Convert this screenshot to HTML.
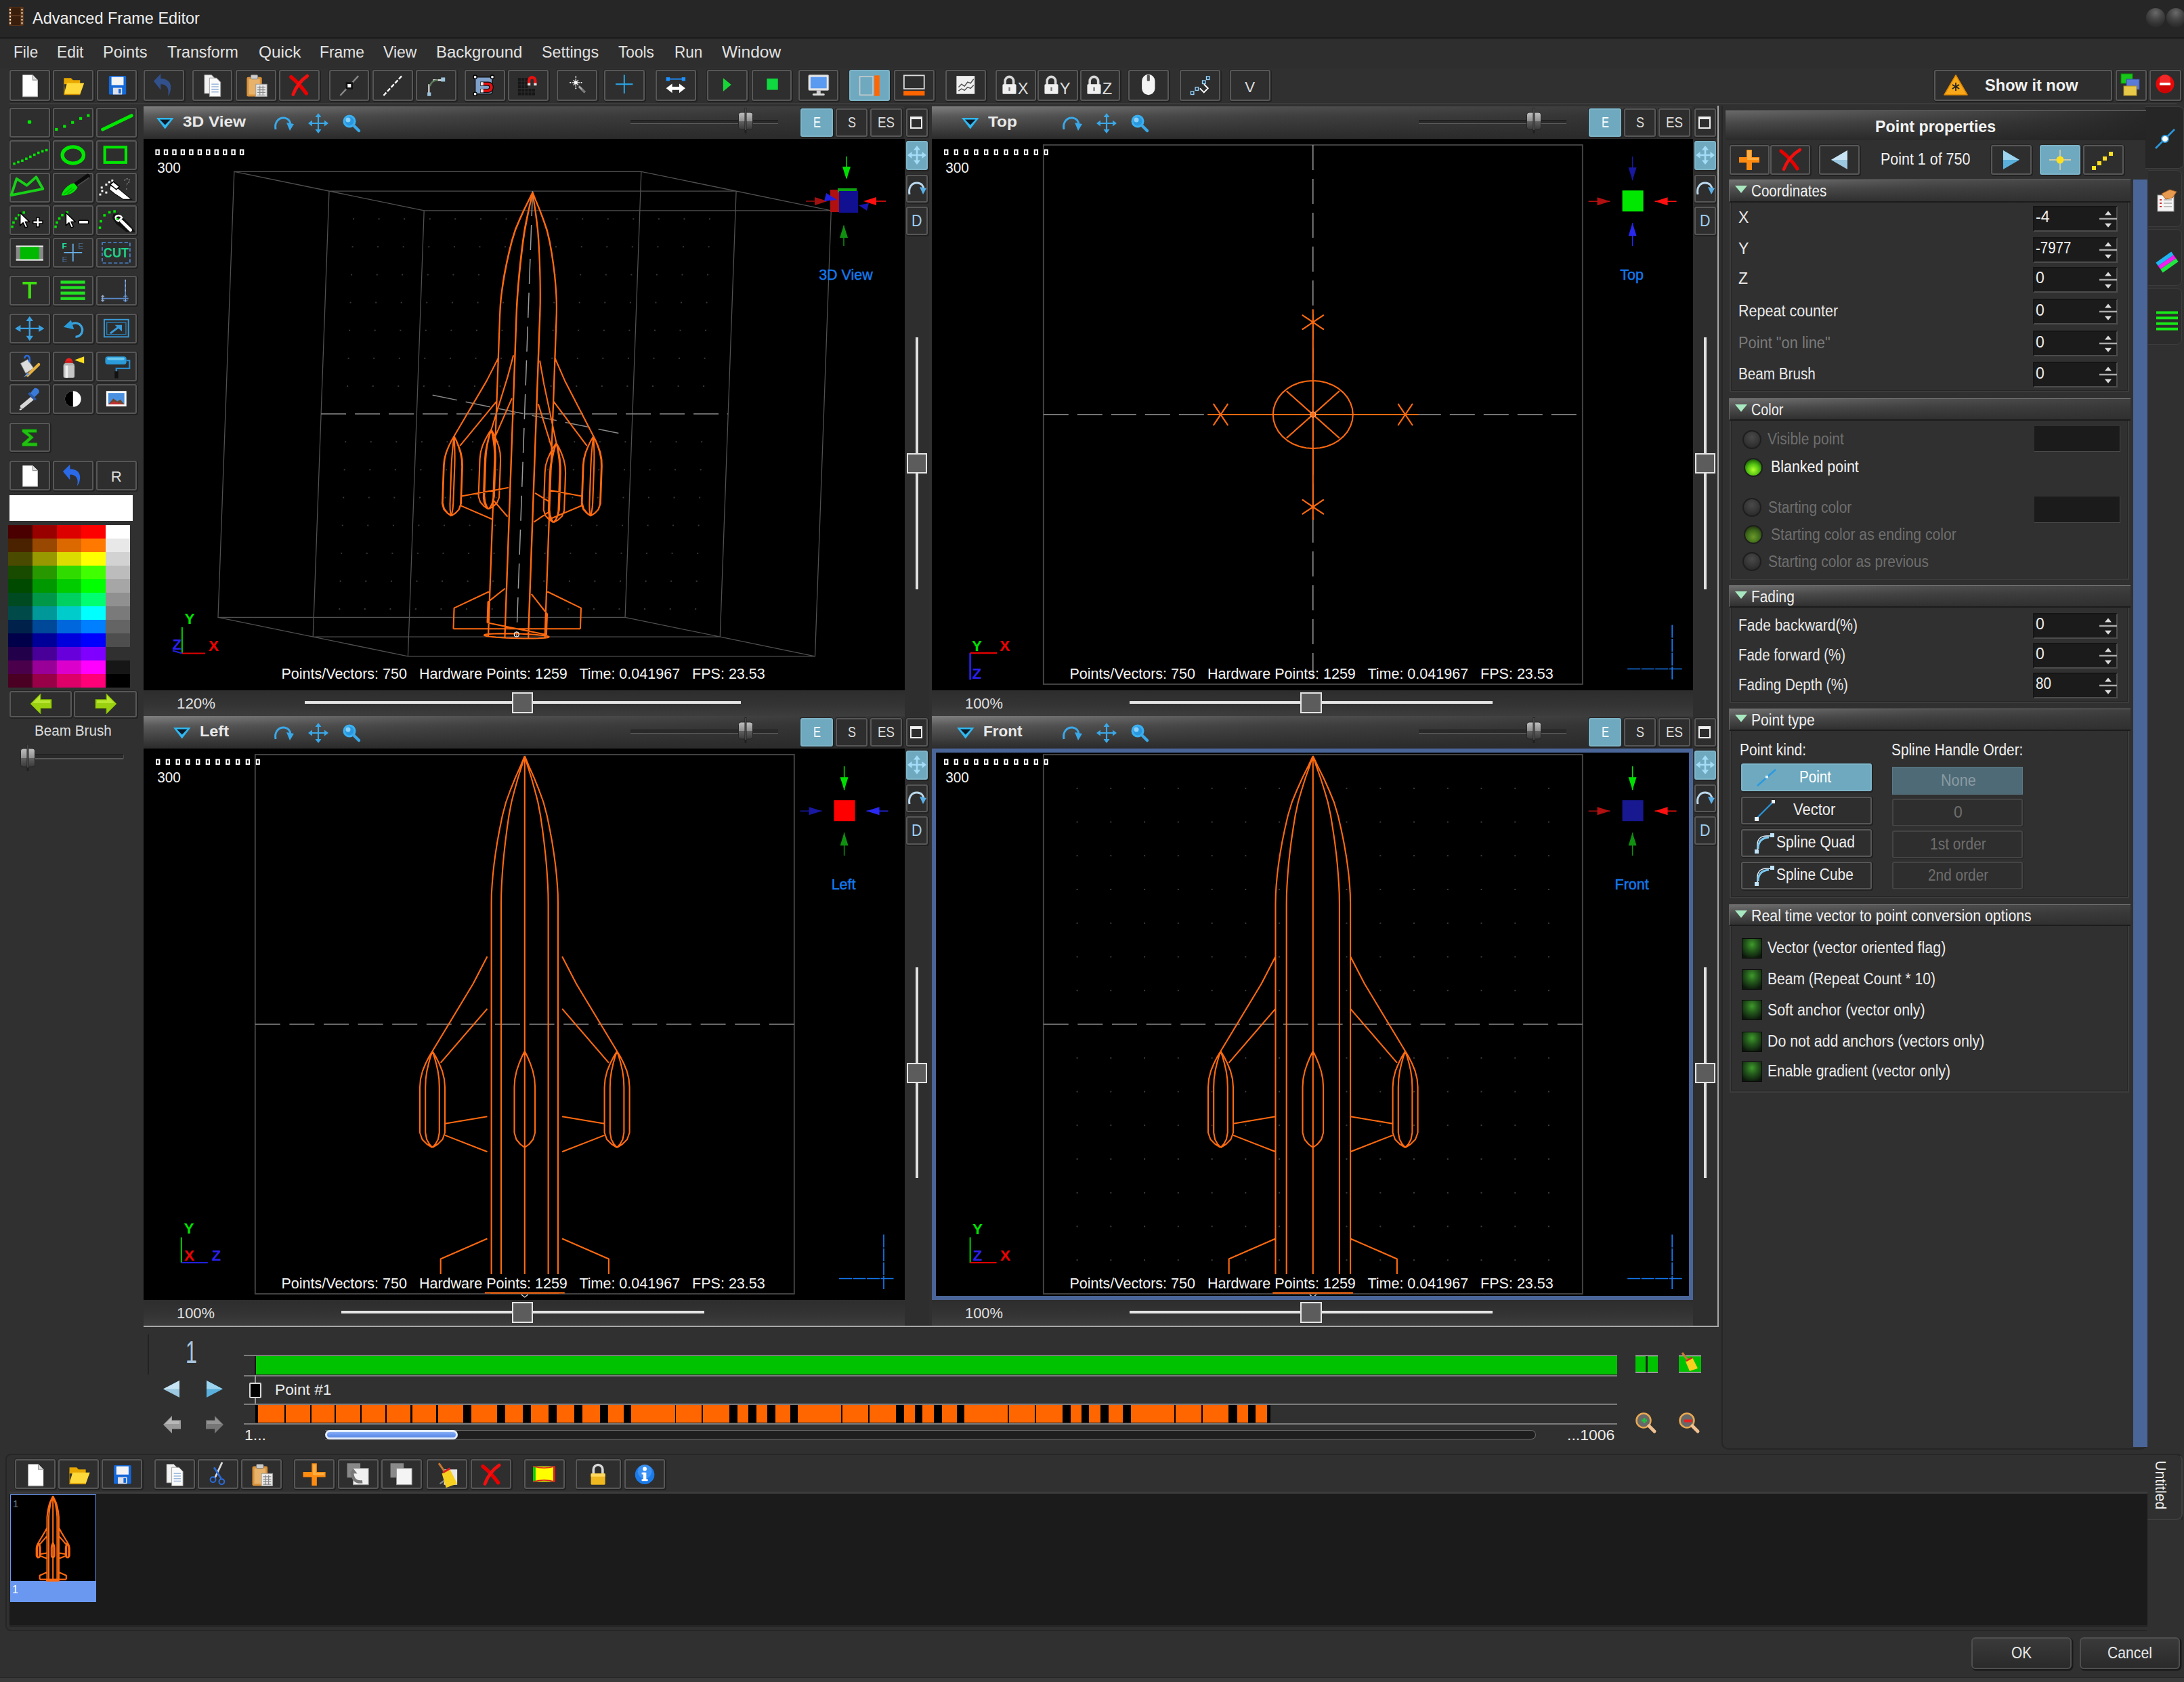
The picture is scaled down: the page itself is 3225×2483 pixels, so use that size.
<!DOCTYPE html>
<html><head><meta charset="utf-8"><title>Advanced Frame Editor</title>
<style>
html,body{margin:0;padding:0;background:#303030;}
body{width:3225px;height:2483px;overflow:hidden;font-family:"Liberation Sans",sans-serif;}
#root{position:relative;width:3225px;height:2483px;background:#303030;overflow:hidden;}
#root div,#root svg{position:absolute;box-sizing:border-box;}
#root svg{overflow:visible;}
.t{white-space:nowrap;line-height:1.15;}
.b{border:2px solid #575757;border-radius:3px;background:#2e2e2e;box-shadow:1px 1px 0 1px #222,-1px -1px 0 0 #262626;}
.b.hl{background:#6fa9bf;border-color:#7db4c8;}
.hdr{background:linear-gradient(90deg,rgba(42,42,42,0) 0%,rgba(42,42,42,.55) 45%,rgba(42,42,42,.85) 100%),linear-gradient(180deg,#808080 0%,#5a5a5a 30%,#2b2b2b 100%);}
.sec{background:linear-gradient(90deg,rgba(48,48,48,0) 0%,rgba(48,48,48,.5) 50%,rgba(48,48,48,.75) 100%),linear-gradient(180deg,#707070 0%,#505050 40%,#303030 100%);border-top:1px solid #777;border-left:1px solid #666;border-bottom:2px solid #1c1c1c;}
.secbody{border:2px solid #3c3c3c;border-top:none;box-shadow:inset 1px 0 0 #262626, inset -1px -1px 0 #262626;}
.inp{background:#1b1b1b;border-top:2px solid #151515;border-left:2px solid #151515;border-bottom:2px solid #4c4c4c;border-right:2px solid #4c4c4c;}

</style></head><body>
<div id="root">
<div style="left:0.0px;top:0.0px;width:3225.0px;height:55.0px;background:#262626;"></div>
<div style="left:0.0px;top:54.7px;width:3225.0px;height:2.6px;background:#1b1b1b;"></div>
<div style="left:0.0px;top:57.0px;width:3225.0px;height:44.0px;background:#2e2e2e;"></div>
<svg style="left:11.0px;top:8.0px;" width="26" height="32" viewBox="0 0 26 32"><rect x="2" y="2" width="22" height="28" rx="2" fill="#5a3418"/><rect x="6" y="3" width="13" height="26" fill="#3a1e0c"/><path d="M4 5v23M21.500 5v23" stroke="#f0e0c8" stroke-width="2" stroke-dasharray="2.500 2.500"/><path d="M6 15h13" stroke="#7a4a28" stroke-width="1"/></svg>
<div class="t" style="left:48.0px;top:12.8px;font-size:24px;color:#f0f0f0;transform-origin:0 0;transform:scaleX(0.9789);">Advanced Frame Editor</div>
<div style="left:3169.0px;top:12.0px;width:28.0px;height:28.0px;border-radius:50%;background:radial-gradient(circle at 50% 25%,#6a6a6a 0%,#484848 35%,#303030 70%,#262626 100%);"></div>
<div style="left:3199.0px;top:12.0px;width:28.0px;height:28.0px;border-radius:50%;background:radial-gradient(circle at 50% 25%,#6a6a6a 0%,#484848 35%,#303030 70%,#262626 100%);"></div>
<div class="t" style="left:20.0px;top:62.5px;font-size:24.5px;color:#e2e2e2;transform-origin:0 0;transform:scaleX(0.9195);">File</div>
<div class="t" style="left:84.0px;top:62.5px;font-size:24.5px;color:#e2e2e2;transform-origin:0 0;transform:scaleX(0.9309);">Edit</div>
<div class="t" style="left:152.0px;top:62.5px;font-size:24.5px;color:#e2e2e2;transform-origin:0 0;transform:scaleX(0.9619);">Points</div>
<div class="t" style="left:246.5px;top:62.5px;font-size:24.5px;color:#e2e2e2;transform-origin:0 0;transform:scaleX(0.9465);">Transform</div>
<div class="t" style="left:381.5px;top:62.5px;font-size:24.5px;color:#e2e2e2;transform-origin:0 0;transform:scaleX(0.9980);">Quick</div>
<div class="t" style="left:472.0px;top:62.5px;font-size:24.5px;color:#e2e2e2;transform-origin:0 0;transform:scaleX(0.9324);">Frame</div>
<div class="t" style="left:565.5px;top:62.5px;font-size:24.5px;color:#e2e2e2;transform-origin:0 0;transform:scaleX(0.9380);">View</div>
<div class="t" style="left:644.0px;top:62.5px;font-size:24.5px;color:#e2e2e2;transform-origin:0 0;transform:scaleX(0.9743);">Background</div>
<div class="t" style="left:799.5px;top:62.5px;font-size:24.5px;color:#e2e2e2;transform-origin:0 0;transform:scaleX(0.9500);">Settings</div>
<div class="t" style="left:912.5px;top:62.5px;font-size:24.5px;color:#e2e2e2;transform-origin:0 0;transform:scaleX(0.9249);">Tools</div>
<div class="t" style="left:996.0px;top:62.5px;font-size:24.5px;color:#e2e2e2;transform-origin:0 0;transform:scaleX(0.9189);">Run</div>
<div class="t" style="left:1066.0px;top:62.5px;font-size:24.5px;color:#e2e2e2;transform-origin:0 0;transform:scaleX(0.9995);">Window</div>
<div class="b" style="left:14.0px;top:103.1px;width:59.6px;height:45.6px;"></div>
<svg style="left:14.0px;top:103.1px" width="59.6" height="45.6" viewBox="0 0 40 30" preserveAspectRatio="none"><path d="M13 5h10l5 5v16H13z" fill="#fff"/><path d="M23 5v5h5" fill="#ddd" stroke="#999" stroke-width="0.8"/><path d="M13 26h15" stroke="#bbb" stroke-width="1"/></svg>
<div class="b" style="left:78.3px;top:103.1px;width:59.6px;height:45.6px;"></div>
<svg style="left:78.3px;top:103.1px" width="59.6" height="45.6" viewBox="0 0 40 30" preserveAspectRatio="none"><path d="M11 8h7l2 2h7v4H11z" fill="#e8a800"/><path d="M11 24l3-11h17l-4 11z" fill="#ffd83a"/><path d="M11 24V10l1 13z" fill="#d89a00"/><path d="M11 24h16" stroke="#c88a00" stroke-width="1"/></svg>
<div class="b" style="left:142.5px;top:103.1px;width:59.6px;height:45.6px;"></div>
<svg style="left:142.5px;top:103.1px" width="59.6" height="45.6" viewBox="0 0 40 30" preserveAspectRatio="none"><rect x="12" y="6" width="17" height="18" rx="1" fill="#1468d8"/><rect x="14.5" y="7" width="12" height="8" fill="#f4f4f4"/><rect x="16" y="17.5" width="9" height="6.5" fill="#e0e0e8"/><rect x="21.5" y="18.5" width="2.4" height="4.5" fill="#1468d8"/></svg>
<div class="b" style="left:212.0px;top:103.1px;width:59.6px;height:45.6px;"></div>
<svg style="left:212.0px;top:103.1px" width="59.6" height="45.6" viewBox="0 0 40 30" preserveAspectRatio="none"><path d="M10 11l7-7v4.5c8 0 12 5 9 14c-0.5 1.5-1.5 2.5-2 3c2-7-1-11.500-7-11.500v5.500z" fill="#31508c"/></svg>
<div class="b" style="left:283.6px;top:103.1px;width:59.6px;height:45.6px;"></div>
<svg style="left:283.6px;top:103.1px" width="59.6" height="45.6" viewBox="0 0 40 30" preserveAspectRatio="none"><path d="M12 5h7l3 3v15H12z" fill="#f2f2f2" stroke="#999" stroke-width="0.6"/><path d="M17 8h7l4 4v14H17z" fill="#fafafa" stroke="#999" stroke-width="0.6"/><path d="M19 14h7M19 16.500h7M19 19h7M19 21.500h7" stroke="#9ab8dc" stroke-width="1"/></svg>
<div class="b" style="left:348.0px;top:103.1px;width:59.6px;height:45.6px;"></div>
<svg style="left:348.0px;top:103.1px" width="59.6" height="45.6" viewBox="0 0 40 30" preserveAspectRatio="none"><rect x="11" y="7" width="15" height="19" rx="1.500" fill="#d8923a"/><rect x="13" y="9" width="11" height="15" fill="#e8b26a"/><rect x="15" y="5" width="7" height="4" rx="1" fill="#ccc" stroke="#777" stroke-width="0.6"/><rect x="20" y="14" width="11" height="12" fill="#e8e8e8" stroke="#999" stroke-width="0.6"/><path d="M21.500 17h8M21.500 19.500h8M21.500 22h8M21.500 24.500h8M24 15.500v9.500M27 15.500v9.500" stroke="#888" stroke-width="0.8"/></svg>
<div class="b" style="left:412.3px;top:103.1px;width:59.6px;height:45.6px;"></div>
<svg style="left:412.3px;top:103.1px" width="59.6" height="45.6" viewBox="0 0 40 30" preserveAspectRatio="none"><path d="M12 7c5 4 10 9 15 16" stroke="#e80000" stroke-width="3.600" stroke-linecap="round" fill="none"/><path d="M28 6c-6 4-11 10-14 18" stroke="#f01010" stroke-width="3.200" stroke-linecap="round" fill="none"/></svg>
<div class="b" style="left:485.5px;top:103.1px;width:59.6px;height:45.6px;"></div>
<svg style="left:485.5px;top:103.1px" width="59.6" height="45.6" viewBox="0 0 40 30" preserveAspectRatio="none"><path d="M11 25L29 6" stroke="#888" stroke-width="1.600"/><rect x="16.500" y="12" width="7" height="7" fill="#111"/><rect x="18.300" y="13.800" width="3.400" height="3.400" fill="#fff"/></svg>
<div class="b" style="left:550.0px;top:103.1px;width:59.6px;height:45.6px;"></div>
<svg style="left:550.0px;top:103.1px" width="59.6" height="45.6" viewBox="0 0 40 30" preserveAspectRatio="none"><path d="M11 25L29 6" stroke="#fff" stroke-width="1.600" stroke-dasharray="4 1.500"/></svg>
<div class="b" style="left:614.3px;top:103.1px;width:59.6px;height:45.6px;"></div>
<svg style="left:614.3px;top:103.1px" width="59.6" height="45.6" viewBox="0 0 40 30" preserveAspectRatio="none"><path d="M13 24V14" stroke="#fff" stroke-width="1.300"/><path d="M17 10h9" stroke="#fff" stroke-width="1.300"/><path d="M14 16c1-4 4-6 8-6" stroke="#5a7a5a" stroke-width="1.600" fill="none"/><rect x="11.500" y="22" width="3.500" height="3.500" fill="#9cc4dc"/><rect x="25" y="7.500" width="4" height="4" fill="#9cc4dc"/></svg>
<div class="b" style="left:686.0px;top:103.1px;width:59.6px;height:45.6px;"></div>
<svg style="left:686.0px;top:103.1px" width="59.6" height="45.6" viewBox="0 0 40 30" preserveAspectRatio="none"><rect x="10.500" y="7" width="17" height="16.500" rx="2" fill="#7fa0c8" stroke="#111" stroke-width="1"/><path d="M16 12h7.500a5 5 0 0 1 0 10H16v-3.200h7a1.800 1.800 0 0 0 0-3.600H16z" fill="#e81010" stroke="#111" stroke-width="0.9"/><rect x="16" y="12" width="2.600" height="3.200" fill="#eee"/><rect x="16" y="18.800" width="2.600" height="3.200" fill="#eee"/><circle cx="10.500" cy="7" r="1.700" fill="#fff" stroke="#000" stroke-width="0.9"/><circle cx="27.500" cy="7" r="1.700" fill="#fff" stroke="#000" stroke-width="0.9"/><circle cx="10.500" cy="23.500" r="1.700" fill="#fff" stroke="#000" stroke-width="0.9"/></svg>
<div class="b" style="left:750.3px;top:103.1px;width:59.6px;height:45.6px;"></div>
<svg style="left:750.3px;top:103.1px" width="59.6" height="45.6" viewBox="0 0 40 30" preserveAspectRatio="none"><rect x="10.0" y="8.0" width="2.800" height="2.800" fill="#161616"/><rect x="13.5" y="8.0" width="2.800" height="2.800" fill="#161616"/><rect x="17.0" y="8.0" width="2.800" height="2.800" fill="#161616"/><rect x="10.0" y="11.5" width="2.800" height="2.800" fill="#161616"/><rect x="13.5" y="11.5" width="2.800" height="2.800" fill="#161616"/><rect x="17.0" y="11.5" width="2.800" height="2.800" fill="#161616"/><rect x="10.0" y="15.0" width="2.800" height="2.800" fill="#161616"/><rect x="13.5" y="15.0" width="2.800" height="2.800" fill="#161616"/><rect x="17.0" y="15.0" width="2.800" height="2.800" fill="#161616"/><rect x="10.0" y="18.5" width="2.800" height="2.800" fill="#161616"/><rect x="13.5" y="18.5" width="2.800" height="2.800" fill="#161616"/><rect x="17.0" y="18.5" width="2.800" height="2.800" fill="#161616"/><rect x="20.5" y="18.5" width="2.800" height="2.800" fill="#161616"/><rect x="24.0" y="18.5" width="2.800" height="2.800" fill="#161616"/><rect x="10.0" y="22.0" width="2.800" height="2.800" fill="#161616"/><rect x="13.5" y="22.0" width="2.800" height="2.800" fill="#161616"/><rect x="17.0" y="22.0" width="2.800" height="2.800" fill="#161616"/><rect x="20.5" y="22.0" width="2.800" height="2.800" fill="#161616"/><rect x="24.0" y="22.0" width="2.800" height="2.800" fill="#161616"/><path d="M19.500 15V10.500a4.500 4.500 0 0 1 9 0V15h-2.800v-4.500a1.700 1.700 0 0 0-3.400 0V15z" fill="#e81010"/><rect x="19.500" y="13" width="2.800" height="2.300" fill="#ddd"/><rect x="25.700" y="13" width="2.800" height="2.300" fill="#ddd"/></svg>
<div class="b" style="left:822.0px;top:103.1px;width:59.6px;height:45.6px;"></div>
<svg style="left:822.0px;top:103.1px" width="59.6" height="45.6" viewBox="0 0 40 30" preserveAspectRatio="none"><path d="M19 8.500v8M15 12.500h8M16.500 10l5 5M21.500 10l-5 5" stroke="#ddd" stroke-width="0.9"/><circle cx="19" cy="12.500" r="1.600" fill="#fff"/><path d="M22 16l6 6" stroke="#aaa" stroke-width="2"/><path d="M25 19l3 3" stroke="#777" stroke-width="2.200"/><circle cx="13.500" cy="12.500" r="0.700" fill="#fff"/><circle cx="24.500" cy="12.500" r="0.700" fill="#fff"/><circle cx="19" cy="7" r="0.700" fill="#fff"/><circle cx="19" cy="18" r="0.700" fill="#fff"/></svg>
<div class="b" style="left:892.0px;top:103.1px;width:59.6px;height:45.6px;"></div>
<svg style="left:892.0px;top:103.1px" width="59.6" height="45.6" viewBox="0 0 40 30" preserveAspectRatio="none"><path d="M20 5v18M11.500 14h17" stroke="#2aa8e8" stroke-width="1.300"/></svg>
<div class="b" style="left:968.0px;top:103.1px;width:59.6px;height:45.6px;"></div>
<svg style="left:968.0px;top:103.1px" width="59.6" height="45.6" viewBox="0 0 40 30" preserveAspectRatio="none"><path d="M12 9h16" stroke="#1e90ff" stroke-width="1.200"/><rect x="10.500" y="7.300" width="3.600" height="3.600" fill="#1e90ff"/><rect x="26" y="7.300" width="3.600" height="3.600" fill="#1e90ff"/><path d="M10.500 18l6-4.500v3h7v-3l6 4.500l-6 4.500v-3h-7v3z" fill="#fff"/></svg>
<div class="b" style="left:1044.3px;top:103.1px;width:59.6px;height:45.6px;"></div>
<svg style="left:1044.3px;top:103.1px" width="59.6" height="45.6" viewBox="0 0 40 30" preserveAspectRatio="none"><path d="M16 8l8 6.500l-8 6.500z" fill="#18d838"/></svg>
<div class="b" style="left:1109.6px;top:103.1px;width:59.6px;height:45.6px;"></div>
<svg style="left:1109.6px;top:103.1px" width="59.6" height="45.6" viewBox="0 0 40 30" preserveAspectRatio="none"><rect x="15" y="8.500" width="11" height="11" fill="#10d840"/></svg>
<div class="b" style="left:1178.6px;top:103.1px;width:59.6px;height:45.6px;"></div>
<svg style="left:1178.6px;top:103.1px" width="59.6" height="45.6" viewBox="0 0 40 30" preserveAspectRatio="none"><rect x="10" y="5" width="20" height="15" rx="1" fill="#e8e8e8" stroke="#aaa" stroke-width="0.6"/><rect x="12" y="7" width="16" height="11" fill="#5a9af0"/><rect x="18" y="20" width="4" height="3" fill="#ccc"/><rect x="14" y="23" width="12" height="2" rx="1" fill="#ddd"/></svg>
<div class="b hl" style="left:1254.3px;top:103.1px;width:59.6px;height:45.6px;"></div>
<svg style="left:1254.3px;top:103.1px" width="59.6" height="45.6" viewBox="0 0 40 30" preserveAspectRatio="none"><rect x="10.500" y="6.500" width="13" height="18" fill="none" stroke="#ccc" stroke-width="1"/><rect x="25" y="5.500" width="5" height="20" fill="#ff6600"/></svg>
<div class="b" style="left:1320.3px;top:103.1px;width:59.6px;height:45.6px;"></div>
<svg style="left:1320.3px;top:103.1px" width="59.6" height="45.6" viewBox="0 0 40 30" preserveAspectRatio="none"><rect x="10" y="5.500" width="20" height="13" fill="none" stroke="#ddd" stroke-width="1.200"/><rect x="9.500" y="20.500" width="21" height="4.500" fill="#ff6600"/></svg>
<div class="b" style="left:1396.3px;top:103.1px;width:59.6px;height:45.6px;"></div>
<svg style="left:1396.3px;top:103.1px" width="59.6" height="45.6" viewBox="0 0 40 30" preserveAspectRatio="none"><rect x="11" y="6" width="18" height="17.500" fill="#f0f0f0"/><path d="M13 17l3-3l3 2l3-4l3 1l3-4" stroke="#555" stroke-width="1" fill="none"/><path d="M13 20.500l3-2l3 1.500l3-3l3 1l3-3" stroke="#555" stroke-width="1" fill="none"/></svg>
<div class="b" style="left:1470.0px;top:103.1px;width:59.6px;height:45.6px;"></div>
<svg style="left:1470.0px;top:103.1px" width="59.6" height="45.6" viewBox="0 0 40 30" preserveAspectRatio="none"><path d="M9.500 15v-4a4.200 4.200 0 0 1 8.400 0v4" stroke="#d8d8d8" stroke-width="2.400" fill="none"/><rect x="7" y="14" width="13.500" height="9.500" rx="1" fill="#f0f0f0"/><rect x="13" y="17" width="1.600" height="3.500" fill="#777"/><text x="22" y="23.500" font-size="16" fill="#ddd" font-family="Liberation Sans, sans-serif">X</text></svg>
<div class="b" style="left:1532.4px;top:103.1px;width:59.6px;height:45.6px;"></div>
<svg style="left:1532.4px;top:103.1px" width="59.6" height="45.6" viewBox="0 0 40 30" preserveAspectRatio="none"><path d="M9.500 15v-4a4.200 4.200 0 0 1 8.400 0v4" stroke="#d8d8d8" stroke-width="2.400" fill="none"/><rect x="7" y="14" width="13.500" height="9.500" rx="1" fill="#f0f0f0"/><rect x="13" y="17" width="1.600" height="3.500" fill="#777"/><text x="22" y="23.500" font-size="16" fill="#ddd" font-family="Liberation Sans, sans-serif">Y</text></svg>
<div class="b" style="left:1594.8px;top:103.1px;width:59.6px;height:45.6px;"></div>
<svg style="left:1594.8px;top:103.1px" width="59.6" height="45.6" viewBox="0 0 40 30" preserveAspectRatio="none"><path d="M9.500 15v-4a4.200 4.200 0 0 1 8.400 0v4" stroke="#d8d8d8" stroke-width="2.400" fill="none"/><rect x="7" y="14" width="13.500" height="9.500" rx="1" fill="#f0f0f0"/><rect x="13" y="17" width="1.600" height="3.500" fill="#777"/><text x="22" y="23.500" font-size="16" fill="#ddd" font-family="Liberation Sans, sans-serif">Z</text></svg>
<div class="b" style="left:1666.0px;top:103.1px;width:59.6px;height:45.6px;"></div>
<svg style="left:1666.0px;top:103.1px" width="59.6" height="45.6" viewBox="0 0 40 30" preserveAspectRatio="none"><rect x="13.500" y="4.500" width="13" height="20" rx="6.500" fill="#f4f4f4"/><rect x="18.600" y="5" width="2.800" height="6" rx="1" fill="#555"/></svg>
<div class="b" style="left:1742.3px;top:103.1px;width:59.6px;height:45.6px;"></div>
<svg style="left:1742.3px;top:103.1px" width="59.6" height="45.6" viewBox="0 0 40 30" preserveAspectRatio="none"><path d="M24 14l4 4l-4 4l-4-4" stroke="#fff" stroke-width="1.300" fill="none"/><rect x="11" y="21" width="3" height="3" fill="#1a3a5a" stroke="#9cd0f0" stroke-width="0.9"/><rect x="15.5" y="17" width="3" height="3" fill="#1a3a5a" stroke="#9cd0f0" stroke-width="0.9"/><rect x="22.5" y="10.5" width="3" height="3" fill="#1a3a5a" stroke="#9cd0f0" stroke-width="0.9"/><rect x="26.5" y="6.5" width="3" height="3" fill="#1a3a5a" stroke="#9cd0f0" stroke-width="0.9"/></svg>
<div class="b" style="left:1816.0px;top:103.1px;width:59.6px;height:45.6px;"></div>
<svg style="left:1816.0px;top:103.1px" width="59.6" height="45.6" viewBox="0 0 40 30" preserveAspectRatio="none"><text x="20" y="21.500" font-size="15" fill="#ddd" text-anchor="middle" font-family="Liberation Sans, sans-serif">V</text></svg>
<div class="b" style="left:2856.0px;top:103.0px;width:263.0px;height:46.0px;"></div>
<svg style="left:2868.0px;top:108.0px;" width="40" height="36" viewBox="0 0 40 36"><path d="M20 3L37 32H3z" fill="#f8a818" stroke="#e08800" stroke-width="1.500" stroke-linejoin="round"/><path d="M20 14v12M14.800 17l10.400 6M25.200 17l-10.400 6" stroke="#222" stroke-width="1.800"/></svg>
<div class="t" style="left:2931.0px;top:112.0px;font-size:24px;color:#f0f0f0;transform-origin:0 0;transform:scaleX(0.9823);font-weight:bold;">Show it now</div>
<div class="b" style="left:3124.0px;top:103.0px;width:46.0px;height:46.0px;"></div>
<svg style="left:3129.0px;top:107.0px;" width="36" height="38" viewBox="0 0 36 38"><rect x="3" y="2" width="17" height="14" fill="#18c818" stroke="#0a8a0a"/><rect x="11" y="10" width="19" height="15" fill="#5a7ad8" stroke="#3a4a9a"/><rect x="7" y="20" width="19" height="14" fill="#e8c848" stroke="#a88a20"/></svg>
<div class="b" style="left:3174.0px;top:103.0px;width:46.5px;height:46.0px;"></div>
<svg style="left:3179.0px;top:106.0px;" width="36" height="36" viewBox="0 0 36 36"><circle cx="18" cy="18" r="13.500" fill="#e80808"/><circle cx="18" cy="24" r="8" fill="#b00000" opacity=".5"/><circle cx="18" cy="12" r="8" fill="#ff5050" opacity=".45"/><rect x="10" y="16" width="16" height="4" fill="#fff"/></svg>
<div style="left:14.0px;top:152.0px;width:3200.0px;height:1.5px;background:#3c3c3c;"></div>
<div class="b" style="left:14.0px;top:159.4px;width:59.6px;height:43.8px;"></div>
<svg style="left:14.0px;top:159.4px" width="59.6" height="43.8" viewBox="0 0 40 30" preserveAspectRatio="none"><rect x="18" y="12.600" width="3.600" height="3.600" rx="1" fill="#00e800"/></svg>
<div class="b" style="left:78.2px;top:159.4px;width:59.6px;height:43.8px;"></div>
<svg style="left:78.2px;top:159.4px" width="59.6" height="43.8" viewBox="0 0 40 30" preserveAspectRatio="none"><rect x="2.2" y="20.5" width="2.800" height="2.800" fill="#00e800"/><rect x="10.2" y="17.5" width="2.800" height="2.800" fill="#00e800"/><rect x="18.2" y="13.5" width="2.800" height="2.800" fill="#00e800"/><rect x="26.2" y="9.5" width="2.800" height="2.800" fill="#00e800"/><rect x="33.7" y="6.5" width="2.800" height="2.800" fill="#00e800"/></svg>
<div class="b" style="left:142.3px;top:159.4px;width:59.6px;height:43.8px;"></div>
<svg style="left:142.3px;top:159.4px" width="59.6" height="43.8" viewBox="0 0 40 30" preserveAspectRatio="none"><path d="M6.500 22L35 8" stroke="#00e800" stroke-width="3.400" stroke-linecap="round"/></svg>
<div class="b" style="left:14.0px;top:207.3px;width:59.6px;height:43.8px;"></div>
<svg style="left:14.0px;top:207.3px" width="59.6" height="43.8" viewBox="0 0 40 30" preserveAspectRatio="none"><rect x="3.5" y="22.5" width="2.400" height="2.400" fill="#00e800"/><rect x="7.5" y="21" width="2.400" height="2.400" fill="#00e800"/><rect x="11.5" y="19.5" width="2.400" height="2.400" fill="#00e800"/><rect x="15.5" y="17.5" width="2.400" height="2.400" fill="#00e800"/><rect x="19.5" y="15.5" width="2.400" height="2.400" fill="#00e800"/><rect x="23.5" y="13.5" width="2.400" height="2.400" fill="#00e800"/><rect x="27.5" y="11.5" width="2.400" height="2.400" fill="#00e800"/><rect x="31.5" y="10" width="2.400" height="2.400" fill="#00e800"/><rect x="35.5" y="8.8" width="2.400" height="2.400" fill="#00e800"/></svg>
<div class="b" style="left:78.2px;top:207.3px;width:59.6px;height:43.8px;"></div>
<svg style="left:78.2px;top:207.3px" width="59.6" height="43.8" viewBox="0 0 40 30" preserveAspectRatio="none"><ellipse cx="20" cy="15" rx="10.500" ry="8.300" fill="none" stroke="#00e800" stroke-width="3.600"/></svg>
<div class="b" style="left:142.3px;top:207.3px;width:59.6px;height:43.8px;"></div>
<svg style="left:142.3px;top:207.3px" width="59.6" height="43.8" viewBox="0 0 40 30" preserveAspectRatio="none"><rect x="8.500" y="7" width="21" height="15.500" fill="none" stroke="#00e800" stroke-width="2.800"/></svg>
<div class="b" style="left:14.0px;top:255.3px;width:59.6px;height:43.8px;"></div>
<svg style="left:14.0px;top:255.3px" width="59.6" height="43.8" viewBox="0 0 40 30" preserveAspectRatio="none"><path d="M1.700 22.700L7.100 6L17.200 12.800L26.400 4.300L33.100 16.300z" fill="none" stroke="#18d018" stroke-width="2.600" stroke-linejoin="round"/></svg>
<div class="b" style="left:78.2px;top:255.3px;width:59.6px;height:43.8px;"></div>
<svg style="left:78.2px;top:255.3px" width="59.6" height="43.8" viewBox="0 0 40 30" preserveAspectRatio="none"><path d="M22 12.500L34.500 3.500" stroke="#0c0c0c" stroke-width="4.600" stroke-linecap="round"/><path d="M24.500 13L36 5" stroke="#4a4a4a" stroke-width="1.200"/><path d="M8.500 23c1.500-6 6.500-11 12.500-12.500l3.500 4c-2 5-8 8.500-16 8.500z" fill="#00e800"/><path d="M11 21.500l8-6.500M14.500 21.500l6.500-5" stroke="#0a0" stroke-width="0.900"/></svg>
<div class="b" style="left:142.3px;top:255.3px;width:59.6px;height:43.8px;"></div>
<svg style="left:142.3px;top:255.3px" width="59.6" height="43.8" viewBox="0 0 40 30" preserveAspectRatio="none"><rect x="3" y="21" width="2" height="2" fill="#fff"/><rect x="5" y="17.5" width="2" height="2" fill="#fff"/><rect x="4.5" y="14" width="2" height="2" fill="#fff"/><rect x="9" y="11" width="2" height="2" fill="#fff"/><rect x="12" y="8.5" width="2" height="2" fill="#fff"/><rect x="15" y="7" width="2" height="2" fill="#fff"/><rect x="9" y="19" width="2" height="2" fill="#fff"/><path d="M14 13l8 3l13 11h-8l-9-6l-5-4z" fill="#fff" stroke="#111" stroke-width="0.8"/><path d="M17 9l6 5l-3 3l-6-5z" fill="#fff" stroke="#000" stroke-width="1"/><path d="M28 8c2-3 5-2 5 0s-3 3-3 5M30 16v1" stroke="#888" stroke-width="1" fill="none" stroke-dasharray="1.500 1"/></svg>
<div class="b" style="left:14.0px;top:303.2px;width:59.6px;height:43.8px;"></div>
<svg style="left:14.0px;top:303.2px" width="59.6" height="43.8" viewBox="0 0 40 30" preserveAspectRatio="none"><rect x="1.5" y="20.5" width="2.400" height="2.400" fill="#00e800"/><rect x="2.8" y="16.3" width="2.400" height="2.400" fill="#00e800"/><rect x="5.2" y="12.2" width="2.400" height="2.400" fill="#00e800"/><rect x="8.2" y="8.8" width="2.400" height="2.400" fill="#00e800"/><rect x="13" y="6.2" width="2.400" height="2.400" fill="#00e800"/><path d="M10.5 7.5v13l3-2.800l2.200 5l2.200-1l-2.200-4.900h4.200z" fill="#fff" stroke="#000" stroke-width="1.100" stroke-linejoin="round"/><path d="M26.800 12.300h2.600v3.500h3.500v2.600h-3.500v3.500h-2.600v-3.500h-3.500v-2.600h3.500z" fill="#fff" stroke="#000" stroke-width="1"/></svg>
<div class="b" style="left:78.2px;top:303.2px;width:59.6px;height:43.8px;"></div>
<svg style="left:78.2px;top:303.2px" width="59.6" height="43.8" viewBox="0 0 40 30" preserveAspectRatio="none"><rect x="1.5" y="20.5" width="2.400" height="2.400" fill="#00e800"/><rect x="2.8" y="16.3" width="2.400" height="2.400" fill="#00e800"/><rect x="5.2" y="12.2" width="2.400" height="2.400" fill="#00e800"/><rect x="8.2" y="8.8" width="2.400" height="2.400" fill="#00e800"/><rect x="13" y="6.2" width="2.400" height="2.400" fill="#00e800"/><path d="M13 7.5v13l3-2.800l2.200 5l2.200-1l-2.200-4.900h4.200z" fill="#fff" stroke="#000" stroke-width="1.100" stroke-linejoin="round"/><rect x="25.700" y="15.300" width="9.600" height="3.600" rx="0.800" fill="#fff" stroke="#000" stroke-width="1"/></svg>
<div class="b" style="left:142.3px;top:303.2px;width:59.6px;height:43.8px;"></div>
<svg style="left:142.3px;top:303.2px" width="59.6" height="43.8" viewBox="0 0 40 30" preserveAspectRatio="none"><rect x="2.5" y="21.5" width="2.400" height="2.400" fill="#00e800"/><rect x="3.5" y="15" width="2.400" height="2.400" fill="#00e800"/><rect x="7" y="9" width="2.400" height="2.400" fill="#00e800"/><rect x="12" y="6" width="2.400" height="2.400" fill="#00e800"/><rect x="17" y="5" width="2.400" height="2.400" fill="#00e800"/><path d="M17 9l5-1l10 10l7 9h-9l-10-8l-4-6z" fill="#111"/><path d="M19.500 11.500c2-2 5-1 6 1l-3.500 3.500c-2-1-3.500-3-2.500-4.500z" fill="none" stroke="#fff" stroke-width="1.800"/><path d="M25 16l9 9" stroke="#fff" stroke-width="3.200" stroke-linecap="round"/><rect x="20" y="13" width="2" height="2" fill="#00e800"/></svg>
<div class="b" style="left:14.0px;top:351.3px;width:59.6px;height:43.8px;"></div>
<svg style="left:14.0px;top:351.3px" width="59.6" height="43.8" viewBox="0 0 40 30" preserveAspectRatio="none"><rect x="6.500" y="8.500" width="27" height="14" fill="#888"/><rect x="10.500" y="8.500" width="19" height="14" fill="#00b800"/><path d="M6.500 8.500h27M6.500 22.500h27" stroke="#eee" stroke-width="1.400"/></svg>
<div class="b" style="left:78.2px;top:351.3px;width:59.6px;height:43.8px;"></div>
<svg style="left:78.2px;top:351.3px" width="59.6" height="43.8" viewBox="0 0 40 30" preserveAspectRatio="none"><path d="M20 6v18M11 15h18" stroke="#6ab0e8" stroke-width="1.200"/><text x="9" y="11" font-size="8" fill="#20e0a0" font-weight="bold" font-family="Liberation Sans, sans-serif">F</text><text x="25" y="11" font-size="8" fill="#4a6a8a" font-family="Liberation Sans, sans-serif">E</text><text x="9" y="25" font-size="8" fill="#4a6a8a" font-family="Liberation Sans, sans-serif">E</text></svg>
<div class="b" style="left:142.3px;top:351.3px;width:59.6px;height:43.8px;"></div>
<svg style="left:142.3px;top:351.3px" width="59.6" height="43.8" viewBox="0 0 40 30" preserveAspectRatio="none"><rect x="6" y="5" width="27.500" height="20.500" fill="none" stroke="#4a8ad8" stroke-width="1.100" stroke-dasharray="3.500 2"/><text x="19.800" y="20" font-size="13.500" font-weight="bold" fill="#20d088" text-anchor="middle" font-family="Liberation Sans, sans-serif" textLength="25" lengthAdjust="spacingAndGlyphs">CUT</text></svg>
<div class="b" style="left:14.0px;top:407.0px;width:59.6px;height:43.8px;"></div>
<svg style="left:14.0px;top:407.0px" width="59.6" height="43.8" viewBox="0 0 40 30" preserveAspectRatio="none"><path d="M13 6.200h14v2.600h-5.600V23h-2.800V8.800H13z" fill="#40e010"/></svg>
<div class="b" style="left:78.2px;top:407.0px;width:59.6px;height:43.8px;"></div>
<svg style="left:78.2px;top:407.0px" width="59.6" height="43.8" viewBox="0 0 40 30" preserveAspectRatio="none"><rect x="7.700" y="5" width="24.300" height="3" fill="#22e022"/><rect x="7.700" y="10.5" width="24.300" height="3" fill="#22e022"/><rect x="7.700" y="16.1" width="24.300" height="3" fill="#22e022"/><rect x="7.700" y="21.6" width="24.300" height="3" fill="#22e022"/></svg>
<div class="b" style="left:142.3px;top:407.0px;width:59.6px;height:43.8px;"></div>
<svg style="left:142.3px;top:407.0px" width="59.6" height="43.8" viewBox="0 0 40 30" preserveAspectRatio="none"><path d="M5 23h27M29 4v22" stroke="#5a8ac8" stroke-width="1.100"/><path d="M29 4v22" stroke="#cde" stroke-width="0.500" stroke-dasharray="2 3"/><path d="M6.500 20v6M5 21.500l1.500-1.500l1.500 1.500M5 24.500l1.500 1.500l1.500-1.500" stroke="#9ac" stroke-width="0.800" fill="none"/><path d="M27 21.500l2-1.800l2 1.800M27 24.500l2 1.800l2-1.800" stroke="#5a8ac8" stroke-width="0.8" fill="none"/></svg>
<div class="b" style="left:14.0px;top:463.3px;width:59.6px;height:43.8px;"></div>
<svg style="left:14.0px;top:463.3px" width="59.6" height="43.8" viewBox="0 0 40 30" preserveAspectRatio="none"><path d="M20 5v20M7 15h26" stroke="#3aa0e0" stroke-width="1.600"/><path d="M20 2.500l-3.500 5h7zM20 27.500l-3.500-5h7zM5.500 15l5.500-3.500v7zM34.500 15l-5.500-3.500v7z" fill="#3aa0e0"/></svg>
<div class="b" style="left:78.2px;top:463.3px;width:59.6px;height:43.8px;"></div>
<svg style="left:78.2px;top:463.3px" width="59.6" height="43.8" viewBox="0 0 40 30" preserveAspectRatio="none"><path d="M22.500 23.500a7 7 0 1 0-6.500-10" fill="none" stroke="#3aa4e0" stroke-width="2.200"/><path d="M10.500 13.500l7.500-7l3 9.500z" fill="#2a9ad8"/></svg>
<div class="b" style="left:142.3px;top:463.3px;width:59.6px;height:43.8px;"></div>
<svg style="left:142.3px;top:463.3px" width="59.6" height="43.8" viewBox="0 0 40 30" preserveAspectRatio="none"><rect x="8" y="6" width="24" height="17.500" fill="none" stroke="#3a9ad8" stroke-width="1.300"/><rect x="10.500" y="9" width="19" height="12" fill="none" stroke="#2a78a8" stroke-width="1"/><path d="M14 20l9-7" stroke="#3a9ad8" stroke-width="2"/><path d="M18.500 11.500h7v6.500z" fill="#3a9ad8"/></svg>
<div class="b" style="left:14.0px;top:519.3px;width:59.6px;height:43.8px;"></div>
<svg style="left:14.0px;top:519.3px" width="59.6" height="43.8" viewBox="0 0 40 30" preserveAspectRatio="none"><path d="M11 12l7-4l6 9l-8 5z" fill="#ddd" stroke="#888" stroke-width="0.6"/><path d="M15 7c0-4 5-4 5 1v3" stroke="#2a6ad8" stroke-width="1.800" fill="none"/><path d="M18 24l11-11" stroke="#e8b040" stroke-width="2.800" stroke-linecap="round"/><path d="M14 26l6-3l-2-2z" fill="#6a9ad8"/></svg>
<div class="b" style="left:78.2px;top:519.3px;width:59.6px;height:43.8px;"></div>
<svg style="left:78.2px;top:519.3px" width="59.6" height="43.8" viewBox="0 0 40 30" preserveAspectRatio="none"><rect x="10.500" y="13" width="11" height="13.500" rx="1.500" fill="#c4c4c4"/><rect x="12.500" y="13" width="2.500" height="13.500" fill="#eee"/><path d="M10.500 14c0-4 11-4 11 0z" fill="#b0b0b0"/><path d="M12.500 10.500c0-5 7-5 7 0z" fill="#e82020"/><rect x="12" y="9.500" width="8" height="2" fill="#d01818"/><path d="M31 5v7l-9.500-3.500z" fill="#ffe020"/></svg>
<div class="b" style="left:142.3px;top:519.3px;width:59.6px;height:43.8px;"></div>
<svg style="left:142.3px;top:519.3px" width="59.6" height="43.8" viewBox="0 0 40 30" preserveAspectRatio="none"><rect x="9" y="5" width="21" height="8" rx="2.500" fill="#2a9ad8"/><rect x="11" y="6" width="17" height="2.500" rx="1" fill="#6ac8f0"/><path d="M30 9h3v8H20v4" stroke="#2a8ac8" stroke-width="1.600" fill="none"/><rect x="18.300" y="20" width="3.600" height="7" fill="#111"/></svg>
<div class="b" style="left:14.0px;top:567.4px;width:59.6px;height:43.8px;"></div>
<svg style="left:14.0px;top:567.4px" width="59.6" height="43.8" viewBox="0 0 40 30" preserveAspectRatio="none"><path d="M24 5c2-3 7 1 5 4l-5 5l-4-4z" fill="#3a7ad8"/><path d="M19 9l7 7" stroke="#2a5aa8" stroke-width="2.400"/><path d="M21 13l3 3l-11 9l-2-1l-0.500-2z" fill="#d8d8d8"/><path d="M10 26l2-1" stroke="#eee" stroke-width="1.400"/></svg>
<div class="b" style="left:78.2px;top:567.4px;width:59.6px;height:43.8px;"></div>
<svg style="left:78.2px;top:567.4px" width="59.6" height="43.8" viewBox="0 0 40 30" preserveAspectRatio="none"><circle cx="20" cy="15" r="8" fill="#fff"/><path d="M20 7a8 8 0 0 0 0 16z" fill="#000"/></svg>
<div class="b" style="left:142.3px;top:567.4px;width:59.6px;height:43.8px;"></div>
<svg style="left:142.3px;top:567.4px" width="59.6" height="43.8" viewBox="0 0 40 30" preserveAspectRatio="none"><rect x="10" y="7" width="20" height="15.500" fill="#fff"/><rect x="12" y="9" width="16" height="11.500" fill="#4a90e0"/><path d="M12 20.500l5-6l4 3l3-2l4 5z" fill="#6a4a30"/><path d="M12 20.500l5-3l4 1l7 2z" fill="#c03030"/></svg>
<div class="b" style="left:14.0px;top:623.5px;width:59.6px;height:43.8px;"></div>
<svg style="left:14.0px;top:623.5px" width="59.6" height="43.8" viewBox="0 0 40 30" preserveAspectRatio="none"><path d="M12.500 6.700h14.500v3.300h-8.500l5.500 4.900l-6 5.500h9.500v3.300h-15v-2.800l7-6.200l-7-5.500z" fill="#22c010" stroke="#0a7a0a" stroke-width="0.500"/></svg>
<div class="b" style="left:14.0px;top:679.8px;width:59.6px;height:43.8px;"></div>
<svg style="left:14.0px;top:679.8px" width="59.6" height="43.8" viewBox="0 0 40 30" preserveAspectRatio="none"><path d="M13 5h10l5 5v16H13z" fill="#fff"/><path d="M23 5v5h5" fill="#ddd" stroke="#999" stroke-width="0.8"/><path d="M13 26h15" stroke="#bbb" stroke-width="1"/></svg>
<div class="b" style="left:78.2px;top:679.8px;width:59.6px;height:43.8px;"></div>
<svg style="left:78.2px;top:679.8px" width="59.6" height="43.8" viewBox="0 0 40 30" preserveAspectRatio="none"><path d="M10 11l7-7v4.5c8 0 12 5 9 14c-0.5 1.5-1.5 2.5-2 3c2-7-1-11.500-7-11.500v5.500z" fill="#2a6ae8"/></svg>
<div class="b" style="left:142.3px;top:679.8px;width:59.6px;height:43.8px;"></div>
<svg style="left:142.3px;top:679.8px" width="59.6" height="43.8" viewBox="0 0 40 30" preserveAspectRatio="none"><text x="20" y="21" font-size="15" fill="#ddd" text-anchor="middle" font-family="Liberation Sans, sans-serif">R</text></svg>
<div style="left:13.5px;top:730.5px;width:182.5px;height:38.5px;background:#fff;"></div>
<div style="left:12.0px;top:775.0px;width:36.2px;height:20.2px;background:#4a0000;"></div>
<div style="left:48.0px;top:775.0px;width:36.2px;height:20.2px;background:#980000;"></div>
<div style="left:84.0px;top:775.0px;width:36.2px;height:20.2px;background:#dc0000;"></div>
<div style="left:120.0px;top:775.0px;width:36.2px;height:20.2px;background:#ff0000;"></div>
<div style="left:156.0px;top:775.0px;width:36.2px;height:20.2px;background:#ffffff;"></div>
<div style="left:12.0px;top:795.0px;width:36.2px;height:20.2px;background:#4a2200;"></div>
<div style="left:48.0px;top:795.0px;width:36.2px;height:20.2px;background:#984800;"></div>
<div style="left:84.0px;top:795.0px;width:36.2px;height:20.2px;background:#dc6800;"></div>
<div style="left:120.0px;top:795.0px;width:36.2px;height:20.2px;background:#ff7800;"></div>
<div style="left:156.0px;top:795.0px;width:36.2px;height:20.2px;background:#e8e8e8;"></div>
<div style="left:12.0px;top:815.0px;width:36.2px;height:20.2px;background:#4a4a00;"></div>
<div style="left:48.0px;top:815.0px;width:36.2px;height:20.2px;background:#989800;"></div>
<div style="left:84.0px;top:815.0px;width:36.2px;height:20.2px;background:#dcdc00;"></div>
<div style="left:120.0px;top:815.0px;width:36.2px;height:20.2px;background:#ffff00;"></div>
<div style="left:156.0px;top:815.0px;width:36.2px;height:20.2px;background:#d2d2d2;"></div>
<div style="left:12.0px;top:835.0px;width:36.2px;height:20.2px;background:#184a00;"></div>
<div style="left:48.0px;top:835.0px;width:36.2px;height:20.2px;background:#289800;"></div>
<div style="left:84.0px;top:835.0px;width:36.2px;height:20.2px;background:#30dc00;"></div>
<div style="left:120.0px;top:835.0px;width:36.2px;height:20.2px;background:#40ff00;"></div>
<div style="left:156.0px;top:835.0px;width:36.2px;height:20.2px;background:#bcbcbc;"></div>
<div style="left:12.0px;top:855.0px;width:36.2px;height:20.2px;background:#004a00;"></div>
<div style="left:48.0px;top:855.0px;width:36.2px;height:20.2px;background:#009800;"></div>
<div style="left:84.0px;top:855.0px;width:36.2px;height:20.2px;background:#00cc00;"></div>
<div style="left:120.0px;top:855.0px;width:36.2px;height:20.2px;background:#00ff00;"></div>
<div style="left:156.0px;top:855.0px;width:36.2px;height:20.2px;background:#a6a6a6;"></div>
<div style="left:12.0px;top:875.0px;width:36.2px;height:20.2px;background:#004a22;"></div>
<div style="left:48.0px;top:875.0px;width:36.2px;height:20.2px;background:#009848;"></div>
<div style="left:84.0px;top:875.0px;width:36.2px;height:20.2px;background:#00d060;"></div>
<div style="left:120.0px;top:875.0px;width:36.2px;height:20.2px;background:#00ff70;"></div>
<div style="left:156.0px;top:875.0px;width:36.2px;height:20.2px;background:#909090;"></div>
<div style="left:12.0px;top:895.0px;width:36.2px;height:20.2px;background:#004a4a;"></div>
<div style="left:48.0px;top:895.0px;width:36.2px;height:20.2px;background:#009898;"></div>
<div style="left:84.0px;top:895.0px;width:36.2px;height:20.2px;background:#00cccc;"></div>
<div style="left:120.0px;top:895.0px;width:36.2px;height:20.2px;background:#00ffff;"></div>
<div style="left:156.0px;top:895.0px;width:36.2px;height:20.2px;background:#7a7a7a;"></div>
<div style="left:12.0px;top:915.0px;width:36.2px;height:20.2px;background:#00224a;"></div>
<div style="left:48.0px;top:915.0px;width:36.2px;height:20.2px;background:#004898;"></div>
<div style="left:84.0px;top:915.0px;width:36.2px;height:20.2px;background:#0068dc;"></div>
<div style="left:120.0px;top:915.0px;width:36.2px;height:20.2px;background:#0080ff;"></div>
<div style="left:156.0px;top:915.0px;width:36.2px;height:20.2px;background:#646464;"></div>
<div style="left:12.0px;top:935.0px;width:36.2px;height:20.2px;background:#00004a;"></div>
<div style="left:48.0px;top:935.0px;width:36.2px;height:20.2px;background:#000098;"></div>
<div style="left:84.0px;top:935.0px;width:36.2px;height:20.2px;background:#0000dc;"></div>
<div style="left:120.0px;top:935.0px;width:36.2px;height:20.2px;background:#0000ff;"></div>
<div style="left:156.0px;top:935.0px;width:36.2px;height:20.2px;background:#4e4e4e;"></div>
<div style="left:12.0px;top:955.0px;width:36.2px;height:20.2px;background:#22004a;"></div>
<div style="left:48.0px;top:955.0px;width:36.2px;height:20.2px;background:#480098;"></div>
<div style="left:84.0px;top:955.0px;width:36.2px;height:20.2px;background:#6800dc;"></div>
<div style="left:120.0px;top:955.0px;width:36.2px;height:20.2px;background:#8000ff;"></div>
<div style="left:156.0px;top:955.0px;width:36.2px;height:20.2px;background:#303030;"></div>
<div style="left:12.0px;top:975.0px;width:36.2px;height:20.2px;background:#4a004a;"></div>
<div style="left:48.0px;top:975.0px;width:36.2px;height:20.2px;background:#980098;"></div>
<div style="left:84.0px;top:975.0px;width:36.2px;height:20.2px;background:#dc00cc;"></div>
<div style="left:120.0px;top:975.0px;width:36.2px;height:20.2px;background:#ff00ff;"></div>
<div style="left:156.0px;top:975.0px;width:36.2px;height:20.2px;background:#161616;"></div>
<div style="left:12.0px;top:995.0px;width:36.2px;height:20.2px;background:#4a0022;"></div>
<div style="left:48.0px;top:995.0px;width:36.2px;height:20.2px;background:#980048;"></div>
<div style="left:84.0px;top:995.0px;width:36.2px;height:20.2px;background:#dc0068;"></div>
<div style="left:120.0px;top:995.0px;width:36.2px;height:20.2px;background:#ff0078;"></div>
<div style="left:156.0px;top:995.0px;width:36.2px;height:20.2px;background:#000000;"></div>
<div class="b" style="left:14.0px;top:1019.5px;width:91.5px;height:39.5px;"></div>
<div class="b" style="left:109.0px;top:1019.5px;width:93.0px;height:39.5px;"></div>
<svg style="left:44.0px;top:1022.0px;" width="34" height="34" viewBox="0 0 34 34"><g><defs></defs><path d="M1 17L16 2v8.500h16v13H16V32z" fill="#9ad010" stroke="#6a9a00" stroke-width="1"/><path d="M4 16L15 5v7h15v4z" fill="#c4f040" opacity=".7"/></g></svg>
<svg style="left:139.0px;top:1022.0px;" width="34" height="34" viewBox="0 0 34 34"><g transform="translate(34 0) scale(-1 1)"><defs></defs><path d="M1 17L16 2v8.500h16v13H16V32z" fill="#9ad010" stroke="#6a9a00" stroke-width="1"/><path d="M4 16L15 5v7h15v4z" fill="#c4f040" opacity=".7"/></g></svg>
<div class="t" style="left:51.0px;top:1066.0px;font-size:22px;color:#dcdcdc;transform-origin:0 0;transform:scaleX(0.9400);">Beam Brush</div>
<div style="left:52.0px;top:1112.5px;width:131.0px;height:8.0px;background:#2a2a2a;border-top:1.500px solid #1e1e1e;border-bottom:2px solid #585858;border-right:1.500px solid #4a4a4a;border-radius:0 2px 2px 0;"></div>
<svg style="left:30.0px;top:1098.0px;" width="22" height="40" viewBox="0 0 22 40"><defs><linearGradient id="g210" x1="0" y1="0" x2="0" y2="1"><stop offset="0" stop-color="#c0c0c0"/><stop offset=".5" stop-color="#909090"/><stop offset=".52" stop-color="#606060"/><stop offset="1" stop-color="#3a3a3a"/></linearGradient></defs><rect x="0.500" y="7" width="21" height="27" rx="3.500" fill="url(#g210)" stroke="#262626" stroke-width="1"/><path d="M11.0 0v40" stroke="#202020" stroke-width="3"/><path d="M11.0 1v34" stroke="#6a6a6a" stroke-width="1"/></svg>
<div class="hdr" style="left:212.2px;top:157.0px;width:1123.0px;height:48.0px;"></div>
<svg style="left:230.7px;top:173.5px;" width="25.5" height="16.5" viewBox="0 0 25.5 16.5"><path d="M0 0h25.5L12.75 16.5z" fill="#30b8f0"/><path d="M5 2.500h15.5L12.75 10.5z" fill="#0a1a28"/></svg>
<div class="t" style="left:269.7px;top:167.0px;font-size:22.5px;color:#e8e8e8;transform-origin:0 0;transform:scaleX(1.0829);font-weight:bold;">3D View</div>
<svg style="left:404.2px;top:169.0px;" width="32" height="26" viewBox="0 0 32 26"><path d="M3 22c-2-10 4-18 13-17c6 1 9 5 9 11" fill="none" stroke="#3aa8e8" stroke-width="3"/><path d="M19 12l11 2l-6 10z" fill="#3aa8e8"/></svg>
<svg style="left:455.2px;top:167.0px;" width="30" height="30" viewBox="0 0 30 30"><path d="M15 3v24M3 15h24" stroke="#3aa8e8" stroke-width="2.200"/><path d="M15 0l-4.500 6h9zM15 30l-4.500-6h9zM0 15l6-4.500v9zM30 15l-6-4.500v9z" fill="#3aa8e8"/></svg>
<svg style="left:505.2px;top:168.0px;" width="28" height="28" viewBox="0 0 28 28"><circle cx="11" cy="11" r="8" fill="#2a98e0" stroke="#3ab0f0" stroke-width="3"/><circle cx="9" cy="9" r="3.500" fill="#8ad0f8"/><path d="M17 17l8 8" stroke="#3aa8e8" stroke-width="4.500" stroke-linecap="round"/></svg>
<div style="left:931.2px;top:176.5px;width:218.0px;height:6.0px;background:#2a2a2a;border-top:1.500px solid #1c1c1c;border-bottom:1.500px solid #5e5e5e;"></div>
<svg style="left:1090.2px;top:159.0px;" width="22" height="38" viewBox="0 0 22 38"><defs><linearGradient id="g218" x1="0" y1="0" x2="0" y2="1"><stop offset="0" stop-color="#c0c0c0"/><stop offset=".5" stop-color="#909090"/><stop offset=".52" stop-color="#606060"/><stop offset="1" stop-color="#3a3a3a"/></linearGradient></defs><rect x="0.500" y="7" width="21" height="25" rx="3.500" fill="url(#g218)" stroke="#262626" stroke-width="1"/><path d="M11.0 0v38" stroke="#202020" stroke-width="3"/><path d="M11.0 1v32" stroke="#6a6a6a" stroke-width="1"/></svg>
<div class="b hl" style="left:1182.2px;top:160.0px;width:47.5px;height:41.5px;"></div>
<div class="t" style="left:1200.7px;top:168.5px;font-size:21.5px;color:#fff;transform-origin:0 0;transform:scaleX(0.7670);">E</div>
<div class="b" style="left:1234.2px;top:160.0px;width:47.0px;height:41.5px;"></div>
<div class="t" style="left:1251.7px;top:168.5px;font-size:21.5px;color:#ddd;transform-origin:0 0;transform:scaleX(0.8368);">S</div>
<div class="b" style="left:1285.2px;top:160.0px;width:46.5px;height:41.5px;"></div>
<div class="t" style="left:1296.2px;top:168.5px;font-size:21.5px;color:#ddd;transform-origin:0 0;transform:scaleX(0.8716);">ES</div>
<div class="b" style="left:1338.2px;top:160.0px;width:31.5px;height:41.5px;"></div>
<div style="left:1343.7px;top:171.5px;width:18.5px;height:18.0px;border:2px solid #eee;border-top-width:4.500px;"></div>
<div style="left:212.2px;top:205.0px;width:1124.2px;height:813.7px;background:#000;"></div>
<div style="left:1336.4px;top:205.0px;width:36.0px;height:852.7px;background:#2e2e2e;"></div>
<div class="b hl" style="left:1338.2px;top:207.8px;width:31.5px;height:43.6px;"></div>
<svg style="left:1340.2px;top:215.0px;" width="28" height="28" viewBox="0 0 28 28"><path d="M14 4v20M4 14h20" stroke="#a4dcf8" stroke-width="2.600"/><path d="M14 0l-5 6.500h10zM14 28l-5-6.500h10zM0 14l6.500-5v10zM28 14l-6.500-5v10z" fill="#a4dcf8"/></svg>
<div class="b" style="left:1338.2px;top:257.5px;width:31.5px;height:41.5px;"></div>
<svg style="left:1340.2px;top:265.0px;" width="28" height="26" viewBox="0 0 28 26"><path d="M3 22c-2-10 3-17 11-17c7 0 10 5 10 10" fill="none" stroke="#bcd8ec" stroke-width="3"/><path d="M18 11l10 2l-5 9z" fill="#5ab0e8"/></svg>
<div class="b" style="left:1338.2px;top:304.8px;width:31.5px;height:42.0px;"></div>
<div class="t" style="left:1346.0px;top:311.5px;font-size:24px;color:#a0d0f0;transform-origin:0 0;transform:scaleX(0.8943);">D</div>
<div style="left:1352.2px;top:497.6px;width:3.5px;height:372.0px;background:#e0e0e0;"></div>
<div style="left:1338.7px;top:668.5px;width:30.0px;height:30.5px;background:#5c5c5c;border:2px solid #e4e4e4;"></div>
<div style="left:212.2px;top:1018.7px;width:1124.2px;height:39.0px;background:linear-gradient(180deg,#2d2d2d 0%,#333 50%,#3d3d3d 100%);"></div>
<div class="t" style="left:261.2px;top:1026.2px;font-size:22px;color:#e0e0e0;transform-origin:0 0;transform:scaleX(1.0130);">120%</div>
<div style="left:450.0px;top:1034.7px;width:643.7px;height:4.5px;background:#e4e4e4;"></div>
<div style="left:755.8px;top:1021.7px;width:31.5px;height:31.0px;background:#5c5c5c;border:2px solid #e4e4e4;"></div>
<svg style="left:212.2px;top:205.0px;overflow:hidden" width="1124.2" height="813.7" viewBox="0 0 1124.2 813.7"><rect x="18.4" y="16.4" width="4.400" height="6.700" fill="#000" stroke="#fff" stroke-width="2"/><rect x="30.8" y="16.4" width="4.400" height="6.700" fill="#000" stroke="#fff" stroke-width="2"/><rect x="43.3" y="16.4" width="4.400" height="6.700" fill="#000" stroke="#fff" stroke-width="2"/><rect x="55.7" y="16.4" width="4.400" height="6.700" fill="#000" stroke="#fff" stroke-width="2"/><rect x="68.2" y="16.4" width="4.400" height="6.700" fill="#000" stroke="#fff" stroke-width="2"/><rect x="80.7" y="16.4" width="4.400" height="6.700" fill="#000" stroke="#fff" stroke-width="2"/><rect x="93.1" y="16.4" width="4.400" height="6.700" fill="#000" stroke="#fff" stroke-width="2"/><rect x="105.5" y="16.4" width="4.400" height="6.700" fill="#000" stroke="#fff" stroke-width="2"/><rect x="118.0" y="16.4" width="4.400" height="6.700" fill="#000" stroke="#fff" stroke-width="2"/><rect x="130.4" y="16.4" width="4.400" height="6.700" fill="#000" stroke="#fff" stroke-width="2"/><rect x="142.9" y="16.4" width="4.400" height="6.700" fill="#000" stroke="#fff" stroke-width="2"/><text x="20.200" y="49.900" font-size="22" fill="#f4f4f4" font-family="Liberation Sans, sans-serif" textLength="34.500" lengthAdjust="spacingAndGlyphs">300</text><path d="M133.8 48.3L734.9 48.3L711.1 706.4L110.0 706.4zM274.0 77.1L875.1 77.1L851.3 735.2L250.2 735.2zM414.2 105.8L1015.3 105.8L991.5 763.9L390.4 763.9zM133.8 48.3L414.2 105.8M734.9 48.3L1015.3 105.8M711.1 706.4L991.5 763.9M110.0 706.4L390.4 763.9" fill="none" stroke="#505050" stroke-width="1.300"/><g fill="#383838"><rect x="309.1" y="117.2" width="2" height="2"/><rect x="307.6" y="158.3" width="2" height="2"/><rect x="306.1" y="199.5" width="2" height="2"/><rect x="304.6" y="240.6" width="2" height="2"/><rect x="303.1" y="281.7" width="2" height="2"/><rect x="301.6" y="322.9" width="2" height="2"/><rect x="300.1" y="364.0" width="2" height="2"/><rect x="297.2" y="446.2" width="2" height="2"/><rect x="295.7" y="487.4" width="2" height="2"/><rect x="294.2" y="528.5" width="2" height="2"/><rect x="292.7" y="569.6" width="2" height="2"/><rect x="291.2" y="610.8" width="2" height="2"/><rect x="289.7" y="651.9" width="2" height="2"/><rect x="288.3" y="693.0" width="2" height="2"/><rect x="346.6" y="117.2" width="2" height="2"/><rect x="345.1" y="158.3" width="2" height="2"/><rect x="343.7" y="199.5" width="2" height="2"/><rect x="342.2" y="240.6" width="2" height="2"/><rect x="340.7" y="281.7" width="2" height="2"/><rect x="339.2" y="322.9" width="2" height="2"/><rect x="337.7" y="364.0" width="2" height="2"/><rect x="334.7" y="446.2" width="2" height="2"/><rect x="333.3" y="487.4" width="2" height="2"/><rect x="331.8" y="528.5" width="2" height="2"/><rect x="330.3" y="569.6" width="2" height="2"/><rect x="328.8" y="610.8" width="2" height="2"/><rect x="327.3" y="651.9" width="2" height="2"/><rect x="325.8" y="693.0" width="2" height="2"/><rect x="384.2" y="117.2" width="2" height="2"/><rect x="382.7" y="158.3" width="2" height="2"/><rect x="381.2" y="199.5" width="2" height="2"/><rect x="379.7" y="240.6" width="2" height="2"/><rect x="378.3" y="281.7" width="2" height="2"/><rect x="376.8" y="322.9" width="2" height="2"/><rect x="375.3" y="364.0" width="2" height="2"/><rect x="372.3" y="446.2" width="2" height="2"/><rect x="370.8" y="487.4" width="2" height="2"/><rect x="369.3" y="528.5" width="2" height="2"/><rect x="367.9" y="569.6" width="2" height="2"/><rect x="366.4" y="610.8" width="2" height="2"/><rect x="364.9" y="651.9" width="2" height="2"/><rect x="363.4" y="693.0" width="2" height="2"/><rect x="421.8" y="117.2" width="2" height="2"/><rect x="420.3" y="158.3" width="2" height="2"/><rect x="418.8" y="199.5" width="2" height="2"/><rect x="417.3" y="240.6" width="2" height="2"/><rect x="415.8" y="281.7" width="2" height="2"/><rect x="414.3" y="322.9" width="2" height="2"/><rect x="412.9" y="364.0" width="2" height="2"/><rect x="409.9" y="446.2" width="2" height="2"/><rect x="408.4" y="487.4" width="2" height="2"/><rect x="406.9" y="528.5" width="2" height="2"/><rect x="405.4" y="569.6" width="2" height="2"/><rect x="403.9" y="610.8" width="2" height="2"/><rect x="402.5" y="651.9" width="2" height="2"/><rect x="401.0" y="693.0" width="2" height="2"/><rect x="459.3" y="117.2" width="2" height="2"/><rect x="457.9" y="158.3" width="2" height="2"/><rect x="456.4" y="199.5" width="2" height="2"/><rect x="454.9" y="240.6" width="2" height="2"/><rect x="453.4" y="281.7" width="2" height="2"/><rect x="451.9" y="322.9" width="2" height="2"/><rect x="450.4" y="364.0" width="2" height="2"/><rect x="447.5" y="446.2" width="2" height="2"/><rect x="446.0" y="487.4" width="2" height="2"/><rect x="444.5" y="528.5" width="2" height="2"/><rect x="443.0" y="569.6" width="2" height="2"/><rect x="441.5" y="610.8" width="2" height="2"/><rect x="440.0" y="651.9" width="2" height="2"/><rect x="438.5" y="693.0" width="2" height="2"/><rect x="496.9" y="117.2" width="2" height="2"/><rect x="495.4" y="158.3" width="2" height="2"/><rect x="493.9" y="199.5" width="2" height="2"/><rect x="492.5" y="240.6" width="2" height="2"/><rect x="491.0" y="281.7" width="2" height="2"/><rect x="489.5" y="322.9" width="2" height="2"/><rect x="488.0" y="364.0" width="2" height="2"/><rect x="485.0" y="446.2" width="2" height="2"/><rect x="483.5" y="487.4" width="2" height="2"/><rect x="482.1" y="528.5" width="2" height="2"/><rect x="480.6" y="569.6" width="2" height="2"/><rect x="479.1" y="610.8" width="2" height="2"/><rect x="477.6" y="651.9" width="2" height="2"/><rect x="476.1" y="693.0" width="2" height="2"/><rect x="534.5" y="117.2" width="2" height="2"/><rect x="533.0" y="158.3" width="2" height="2"/><rect x="531.5" y="199.5" width="2" height="2"/><rect x="530.0" y="240.6" width="2" height="2"/><rect x="528.5" y="281.7" width="2" height="2"/><rect x="527.1" y="322.9" width="2" height="2"/><rect x="525.6" y="364.0" width="2" height="2"/><rect x="522.6" y="446.2" width="2" height="2"/><rect x="521.1" y="487.4" width="2" height="2"/><rect x="519.6" y="528.5" width="2" height="2"/><rect x="518.1" y="569.6" width="2" height="2"/><rect x="516.6" y="610.8" width="2" height="2"/><rect x="515.2" y="651.9" width="2" height="2"/><rect x="513.7" y="693.0" width="2" height="2"/><rect x="609.6" y="117.2" width="2" height="2"/><rect x="608.1" y="158.3" width="2" height="2"/><rect x="606.7" y="199.5" width="2" height="2"/><rect x="605.2" y="240.6" width="2" height="2"/><rect x="603.7" y="281.7" width="2" height="2"/><rect x="602.2" y="322.9" width="2" height="2"/><rect x="600.7" y="364.0" width="2" height="2"/><rect x="597.7" y="446.2" width="2" height="2"/><rect x="596.2" y="487.4" width="2" height="2"/><rect x="594.8" y="528.5" width="2" height="2"/><rect x="593.3" y="569.6" width="2" height="2"/><rect x="591.8" y="610.8" width="2" height="2"/><rect x="590.3" y="651.9" width="2" height="2"/><rect x="588.8" y="693.0" width="2" height="2"/><rect x="647.2" y="117.2" width="2" height="2"/><rect x="645.7" y="158.3" width="2" height="2"/><rect x="644.2" y="199.5" width="2" height="2"/><rect x="642.7" y="240.6" width="2" height="2"/><rect x="641.2" y="281.7" width="2" height="2"/><rect x="639.8" y="322.9" width="2" height="2"/><rect x="638.3" y="364.0" width="2" height="2"/><rect x="635.3" y="446.2" width="2" height="2"/><rect x="633.8" y="487.4" width="2" height="2"/><rect x="632.3" y="528.5" width="2" height="2"/><rect x="630.8" y="569.6" width="2" height="2"/><rect x="629.4" y="610.8" width="2" height="2"/><rect x="627.9" y="651.9" width="2" height="2"/><rect x="626.4" y="693.0" width="2" height="2"/><rect x="684.8" y="117.2" width="2" height="2"/><rect x="683.3" y="158.3" width="2" height="2"/><rect x="681.8" y="199.5" width="2" height="2"/><rect x="680.3" y="240.6" width="2" height="2"/><rect x="678.8" y="281.7" width="2" height="2"/><rect x="677.3" y="322.9" width="2" height="2"/><rect x="675.8" y="364.0" width="2" height="2"/><rect x="672.9" y="446.2" width="2" height="2"/><rect x="671.4" y="487.4" width="2" height="2"/><rect x="669.9" y="528.5" width="2" height="2"/><rect x="668.4" y="569.6" width="2" height="2"/><rect x="666.9" y="610.8" width="2" height="2"/><rect x="665.4" y="651.9" width="2" height="2"/><rect x="664.0" y="693.0" width="2" height="2"/><rect x="722.3" y="117.2" width="2" height="2"/><rect x="720.8" y="158.3" width="2" height="2"/><rect x="719.4" y="199.5" width="2" height="2"/><rect x="717.9" y="240.6" width="2" height="2"/><rect x="716.4" y="281.7" width="2" height="2"/><rect x="714.9" y="322.9" width="2" height="2"/><rect x="713.4" y="364.0" width="2" height="2"/><rect x="710.4" y="446.2" width="2" height="2"/><rect x="709.0" y="487.4" width="2" height="2"/><rect x="707.5" y="528.5" width="2" height="2"/><rect x="706.0" y="569.6" width="2" height="2"/><rect x="704.5" y="610.8" width="2" height="2"/><rect x="703.0" y="651.9" width="2" height="2"/><rect x="701.5" y="693.0" width="2" height="2"/><rect x="759.9" y="117.2" width="2" height="2"/><rect x="758.4" y="158.3" width="2" height="2"/><rect x="756.9" y="199.5" width="2" height="2"/><rect x="755.4" y="240.6" width="2" height="2"/><rect x="754.0" y="281.7" width="2" height="2"/><rect x="752.5" y="322.9" width="2" height="2"/><rect x="751.0" y="364.0" width="2" height="2"/><rect x="748.0" y="446.2" width="2" height="2"/><rect x="746.5" y="487.4" width="2" height="2"/><rect x="745.0" y="528.5" width="2" height="2"/><rect x="743.6" y="569.6" width="2" height="2"/><rect x="742.1" y="610.8" width="2" height="2"/><rect x="740.6" y="651.9" width="2" height="2"/><rect x="739.1" y="693.0" width="2" height="2"/><rect x="797.5" y="117.2" width="2" height="2"/><rect x="796.0" y="158.3" width="2" height="2"/><rect x="794.5" y="199.5" width="2" height="2"/><rect x="793.0" y="240.6" width="2" height="2"/><rect x="791.5" y="281.7" width="2" height="2"/><rect x="790.0" y="322.9" width="2" height="2"/><rect x="788.6" y="364.0" width="2" height="2"/><rect x="785.6" y="446.2" width="2" height="2"/><rect x="784.1" y="487.4" width="2" height="2"/><rect x="782.6" y="528.5" width="2" height="2"/><rect x="781.1" y="569.6" width="2" height="2"/><rect x="779.6" y="610.8" width="2" height="2"/><rect x="778.2" y="651.9" width="2" height="2"/><rect x="776.7" y="693.0" width="2" height="2"/><rect x="835.0" y="117.2" width="2" height="2"/><rect x="833.6" y="158.3" width="2" height="2"/><rect x="832.1" y="199.5" width="2" height="2"/><rect x="830.6" y="240.6" width="2" height="2"/><rect x="829.1" y="281.7" width="2" height="2"/><rect x="827.6" y="322.9" width="2" height="2"/><rect x="826.1" y="364.0" width="2" height="2"/><rect x="823.2" y="446.2" width="2" height="2"/><rect x="821.7" y="487.4" width="2" height="2"/><rect x="820.2" y="528.5" width="2" height="2"/><rect x="818.7" y="569.6" width="2" height="2"/><rect x="817.2" y="610.8" width="2" height="2"/><rect x="815.7" y="651.9" width="2" height="2"/><rect x="814.2" y="693.0" width="2" height="2"/></g><path d="M262.1 406.1L863.2 406.1" stroke="#8a8a8a" stroke-width="1.500" stroke-dasharray="37 13"/><path d="M574.5 77.1L550.8 735.2" stroke="#9a9a9a" stroke-width="1.500" stroke-dasharray="37 13"/><path d="M426.7 378.2L701.4 434.6" stroke="#8a8a8a" stroke-width="1.500" stroke-dasharray="37 13"/><path d="M574.5 78.7L579.3 91.1L585.2 105.2L591.1 120.9L595.9 134.9L599.8 151.5L602.7 168.0L605.0 183.7L607.0 199.4L608.2 211.8L609.1 224.2L609.7 236.6L609.9 247.4L609.7 259.0L592.6 733.5 M574.5 78.7L568.7 91.1L561.8 105.2L554.8 120.9L549.0 134.9L543.9 151.5L539.8 168.0L536.3 183.7L533.3 199.4L531.2 211.8L529.3 224.2L527.8 236.6L526.9 247.4L526.2 259.0L509.1 733.5 M574.5 78.7L579.3 91.4L585.2 105.9L591.1 122.0L595.9 136.4L599.8 153.2L602.7 169.9L605.1 185.8L607.0 201.6L608.2 214.2L609.1 226.6L609.7 239.1L609.9 249.9L609.8 261.5L592.6 736.0 M574.5 78.7L568.7 90.8L561.8 104.5L554.8 119.8L549.0 133.5L543.9 149.8L539.8 166.1L536.3 181.7L533.2 197.2L531.1 209.5L529.3 221.8L527.8 234.2L526.8 244.9L526.2 256.4L509.0 731.0 M574.5 78.7L576.2 91.6L578.4 106.2L580.5 122.4L582.2 136.9L583.4 153.9L584.3 170.7L584.9 186.6L585.4 202.6L585.7 215.1L585.8 227.6L585.8 240.1L585.6 250.9L585.3 262.5L568.2 737.1 M574.5 78.7L571.8 90.7L568.7 104.2L565.4 119.3L562.7 133.0L560.3 149.1L558.2 165.3L556.4 180.8L554.8 196.3L553.7 208.6L552.7 220.8L551.8 233.1L551.1 243.8L550.6 255.4L533.5 729.9 M574.5 78.7L571.8 91.4L568.7 105.9L565.5 122.0L562.8 136.4L560.3 153.2L558.3 169.9L556.5 185.8L554.9 201.6L553.7 214.2L552.7 226.6L551.8 239.1L551.2 249.9L550.7 261.5L533.5 736.0 M574.5 78.7L576.2 90.8L578.4 104.5L580.5 119.8L582.1 133.5L583.4 149.8L584.2 166.1L584.9 181.7L585.4 197.2L585.6 209.5L585.7 221.8L585.7 234.2L585.6 244.9L585.2 256.4L568.1 731.0 M595.4 733.9L597.7 734.5L598.7 735.1L598.2 735.7L596.3 736.2L592.9 736.7L588.3 737.0L582.6 737.3L575.9 737.5L568.4 737.5L560.4 737.5L552.1 737.3L543.8 737.0L535.7 736.7L528.0 736.2L521.0 735.7L515.0 735.1L510.0 734.5L506.2 733.9L503.9 733.3L502.9 732.7L503.4 732.1L505.4 731.6L508.7 731.1L513.3 730.8L519.0 730.5L525.7 730.4L533.2 730.3L541.2 730.4L549.5 730.5L557.8 730.8L566.0 731.1L573.6 731.6L580.6 732.1L586.6 732.7L591.6 733.3L595.4 733.9 M607.4 323.4L622.0 356.9L664.4 439.0 M605.1 387.2L654.7 453.2 M600.3 518.8L647.2 527.5 M598.8 561.7L646.7 541.6 M595.0 667.8L646.0 692.6L644.9 723.2 M523.9 323.4L506.8 356.9L458.5 439.0 M521.6 387.2L467.2 453.2 M516.8 518.8L469.3 527.5 M515.3 561.7L468.8 541.6 M511.4 667.8L458.6 692.6L457.5 723.2 M457.5 723.2L644.9 723.2 M664.4 439.0L667.9 445.8L671.4 454.1L674.5 463.2L676.4 473.1L676.8 483.0L674.8 538.4L671.8 546.7L666.3 552.4L660.1 556.6 M664.4 439.0L660.4 445.8L656.3 454.1L652.6 463.2L649.9 473.1L648.8 483.0L646.8 538.4L649.2 546.7L654.3 552.4L660.1 556.6 M664.4 439.0L667.7 446.1L671.0 454.7L673.9 464.0L675.7 474.1L676.0 484.1L674.0 539.5L671.2 547.6L666.0 552.9L660.1 556.6 M664.4 439.0L660.6 445.5L656.7 453.5L653.2 462.3L650.7 472.0L649.6 481.9L647.6 537.3L649.8 545.8L654.6 552.0L660.1 556.6 M664.4 439.0L664.8 445.5L665.1 453.5L665.4 462.3L665.4 472.0L665.2 481.9L663.2 537.3L662.5 545.8L661.3 552.0L660.1 556.6 M664.4 439.0L663.5 446.1L662.5 454.7L661.6 464.0L660.9 474.1L660.4 484.1L658.4 539.5L658.5 547.6L659.2 552.9L660.1 556.6 M458.5 439.0L462.1 445.8L465.5 454.1L468.6 463.2L470.5 473.1L470.9 483.0L468.9 538.4L466.0 546.7L460.5 552.4L454.3 556.6 M458.5 439.0L454.5 445.8L450.4 454.1L446.7 463.2L444.1 473.1L443.0 483.0L441.0 538.4L443.3 546.7L448.4 552.4L454.3 556.6 M458.5 439.0L461.9 446.1L465.1 454.7L468.0 464.0L469.8 474.1L470.2 484.1L468.2 539.5L465.4 547.6L460.1 552.9L454.3 556.6 M458.5 439.0L454.7 445.5L450.8 453.5L447.3 462.3L444.8 472.0L443.7 481.9L441.7 537.3L443.9 545.8L448.7 552.0L454.3 556.6 M458.5 439.0L458.9 445.5L459.3 453.5L459.5 462.3L459.6 472.0L459.4 481.9L457.3 537.3L456.6 545.8L455.5 552.0L454.3 556.6 M458.5 439.0L457.6 446.1L456.7 454.7L455.8 464.0L455.0 474.1L454.5 484.1L452.5 539.5L452.7 547.6L453.4 552.9L454.3 556.6 M585.1 327.4L591.3 362.4L609.5 448.9 M582.8 391.2L604.7 462.1 M578.1 522.8L599.8 536.0 M576.5 565.7L599.2 550.1 M572.7 671.8L596.0 701.5L594.9 732.1 M546.2 319.4L537.6 351.4L513.5 429.2 M543.9 383.2L517.2 444.2 M539.1 514.8L516.8 519.0 M537.5 557.7L516.3 533.1 M533.7 663.8L508.6 683.6L507.5 714.2 M507.5 714.2L594.9 732.1 M609.5 448.9L611.0 456.0L612.4 464.6L613.7 474.1L614.4 484.2L614.4 494.2L612.4 549.6L610.9 557.6L608.2 562.9L605.2 566.4 M609.5 448.9L607.5 455.3L605.4 463.2L603.5 472.0L602.1 481.7L601.4 491.5L599.4 546.9L600.3 555.4L602.6 561.7L605.2 566.4 M609.5 448.9L613.3 455.8L617.2 464.3L620.5 473.6L622.6 483.6L623.1 493.6L621.1 549.0L617.9 557.1L612.0 562.6L605.2 566.4 M609.5 448.9L605.1 455.4L600.7 463.5L596.7 472.4L593.8 482.2L592.7 492.1L590.7 547.5L593.2 555.9L598.8 562.0L605.2 566.4 M609.5 448.9L607.1 455.8L604.6 464.3L602.4 473.6L600.7 483.6L599.9 493.6L597.9 549.0L599.1 557.1L601.9 562.6L605.2 566.4 M609.5 448.9L611.4 455.4L613.2 463.5L614.8 472.4L615.7 482.2L615.8 492.1L613.8 547.5L612.0 555.9L608.8 562.0L605.2 566.4 M513.5 429.2L515.0 436.3L516.4 444.9L517.7 454.4L518.4 464.5L518.4 474.5L516.4 529.9L514.8 537.9L512.2 543.2L509.2 546.7 M513.5 429.2L511.4 435.6L509.4 443.5L507.5 452.3L506.1 462.0L505.3 471.8L503.3 527.2L504.3 535.7L506.5 542.0L509.2 546.7 M513.5 429.2L517.3 436.1L521.1 444.6L524.5 453.9L526.6 463.9L527.1 473.9L525.1 529.3L521.9 537.4L515.9 542.9L509.2 546.7 M513.5 429.2L509.1 435.7L504.7 443.8L500.6 452.7L497.8 462.5L496.6 472.4L494.6 527.8L497.2 536.2L502.8 542.3L509.2 546.7 M513.5 429.2L511.1 436.1L508.6 444.6L506.4 453.9L504.7 463.9L503.9 473.9L501.9 529.3L503.1 537.4L505.9 542.9L509.2 546.7 M513.5 429.2L515.4 435.7L517.2 443.8L518.8 452.7L519.7 462.5L519.8 472.4L517.8 527.8L516.0 536.2L512.8 542.3L509.2 546.7" fill="none" stroke="#ff6a10" stroke-width="2.100" stroke-linejoin="round"/><circle cx="550.8" cy="731.5" r="3.500" fill="none" stroke="#fff" stroke-width="1.200"/><text x="203.500" y="796.800" font-size="21.500" fill="#f4f4f4" font-family="Liberation Sans, sans-serif" xml:space="preserve" textLength="714.300" lengthAdjust="spacingAndGlyphs">Points/Vectors: 750   Hardware Points: 1259   Time: 0.041967   FPS: 23.53</text><rect x="1014" y="75" width="14" height="33" fill="#b01010"/><rect x="1025" y="73" width="28" height="6" fill="#10a010"/><rect x="1027" y="77" width="28" height="32" fill="#101090"/><path d="M1038.0 26.0v32" stroke="#00e000" stroke-width="1.500"/><path d="M1038.0 60.0l-6-19h12z" fill="#00e000"/><path d="M1034.0 158.0v-30" stroke="#109010" stroke-width="1.500"/><path d="M1034.0 127.0l-6 19h12z" fill="#109010"/><path d="M1096.0 92.0h-30" stroke="#ff1010" stroke-width="1.500"/><path d="M1063.0 92.0l19-6v12z" fill="#ff1010"/><path d="M978.0 92.0h30" stroke="#a01010" stroke-width="1.500"/><path d="M1010.0 92.0l-19-6v12z" fill="#a01010"/><path d="M1024.0 90.0l-16-10l-3 12z" fill="#2020e0"/><path d="M1056.0 98.0l12 8l3-11z" fill="#1818b0"/><text x="1037" y="208.5" font-size="21.500" fill="#1478ec" stroke="#1478ec" stroke-width="0.450" text-anchor="middle" font-family="Liberation Sans, sans-serif">3D View</text><path d="M56.9 759.5v-38.500" stroke="#00d000" stroke-width="2"/><path d="M56.9 759.5h34" stroke="#e00000" stroke-width="2"/><path d="M56.9 759.5l-14-4" stroke="#2020e0" stroke-width="2"/><text x="60.5" y="715.8" fill="#00e000" font-family="Liberation Sans, sans-serif" font-size="22.500" font-weight="bold">Y</text><text x="96" y="755.6" fill="#f00000" font-family="Liberation Sans, sans-serif" font-size="22.500" font-weight="bold">X</text><text x="42.5" y="754" fill="#2a20f0" font-family="Liberation Sans, sans-serif" font-size="22.500" font-weight="bold">Z</text></svg>
<div class="hdr" style="left:1376.2px;top:157.0px;width:1123.0px;height:48.0px;"></div>
<svg style="left:1419.7px;top:173.5px;" width="25.5" height="16.5" viewBox="0 0 25.5 16.5"><path d="M0 0h25.5L12.75 16.5z" fill="#30b8f0"/><path d="M5 2.500h15.5L12.75 10.5z" fill="#0a1a28"/></svg>
<div class="t" style="left:1458.7px;top:167.0px;font-size:22.5px;color:#e8e8e8;transform-origin:0 0;transform:scaleX(1.0869);font-weight:bold;">Top</div>
<svg style="left:1568.2px;top:169.0px;" width="32" height="26" viewBox="0 0 32 26"><path d="M3 22c-2-10 4-18 13-17c6 1 9 5 9 11" fill="none" stroke="#3aa8e8" stroke-width="3"/><path d="M19 12l11 2l-6 10z" fill="#3aa8e8"/></svg>
<svg style="left:1619.2px;top:167.0px;" width="30" height="30" viewBox="0 0 30 30"><path d="M15 3v24M3 15h24" stroke="#3aa8e8" stroke-width="2.200"/><path d="M15 0l-4.500 6h9zM15 30l-4.500-6h9zM0 15l6-4.500v9zM30 15l-6-4.500v9z" fill="#3aa8e8"/></svg>
<svg style="left:1669.2px;top:168.0px;" width="28" height="28" viewBox="0 0 28 28"><circle cx="11" cy="11" r="8" fill="#2a98e0" stroke="#3ab0f0" stroke-width="3"/><circle cx="9" cy="9" r="3.500" fill="#8ad0f8"/><path d="M17 17l8 8" stroke="#3aa8e8" stroke-width="4.500" stroke-linecap="round"/></svg>
<div style="left:2095.2px;top:176.5px;width:218.0px;height:6.0px;background:#2a2a2a;border-top:1.500px solid #1c1c1c;border-bottom:1.500px solid #5e5e5e;"></div>
<svg style="left:2254.2px;top:159.0px;" width="22" height="38" viewBox="0 0 22 38"><defs><linearGradient id="g249" x1="0" y1="0" x2="0" y2="1"><stop offset="0" stop-color="#c0c0c0"/><stop offset=".5" stop-color="#909090"/><stop offset=".52" stop-color="#606060"/><stop offset="1" stop-color="#3a3a3a"/></linearGradient></defs><rect x="0.500" y="7" width="21" height="25" rx="3.500" fill="url(#g249)" stroke="#262626" stroke-width="1"/><path d="M11.0 0v38" stroke="#202020" stroke-width="3"/><path d="M11.0 1v32" stroke="#6a6a6a" stroke-width="1"/></svg>
<div class="b hl" style="left:2346.2px;top:160.0px;width:47.5px;height:41.5px;"></div>
<div class="t" style="left:2364.7px;top:168.5px;font-size:21.5px;color:#fff;transform-origin:0 0;transform:scaleX(0.7670);">E</div>
<div class="b" style="left:2398.2px;top:160.0px;width:47.0px;height:41.5px;"></div>
<div class="t" style="left:2415.7px;top:168.5px;font-size:21.5px;color:#ddd;transform-origin:0 0;transform:scaleX(0.8368);">S</div>
<div class="b" style="left:2449.2px;top:160.0px;width:46.5px;height:41.5px;"></div>
<div class="t" style="left:2460.2px;top:168.5px;font-size:21.5px;color:#ddd;transform-origin:0 0;transform:scaleX(0.8716);">ES</div>
<div class="b" style="left:2502.2px;top:160.0px;width:31.5px;height:41.5px;"></div>
<div style="left:2507.7px;top:171.5px;width:18.5px;height:18.0px;border:2px solid #eee;border-top-width:4.500px;"></div>
<div style="left:1376.2px;top:205.0px;width:1124.2px;height:813.7px;background:#000;"></div>
<div style="left:2500.4px;top:205.0px;width:36.0px;height:852.7px;background:#2e2e2e;"></div>
<div class="b hl" style="left:2502.2px;top:207.8px;width:31.5px;height:43.6px;"></div>
<svg style="left:2504.2px;top:215.0px;" width="28" height="28" viewBox="0 0 28 28"><path d="M14 4v20M4 14h20" stroke="#a4dcf8" stroke-width="2.600"/><path d="M14 0l-5 6.500h10zM14 28l-5-6.500h10zM0 14l6.500-5v10zM28 14l-6.500-5v10z" fill="#a4dcf8"/></svg>
<div class="b" style="left:2502.2px;top:257.5px;width:31.5px;height:41.5px;"></div>
<svg style="left:2504.2px;top:265.0px;" width="28" height="26" viewBox="0 0 28 26"><path d="M3 22c-2-10 3-17 11-17c7 0 10 5 10 10" fill="none" stroke="#bcd8ec" stroke-width="3"/><path d="M18 11l10 2l-5 9z" fill="#5ab0e8"/></svg>
<div class="b" style="left:2502.2px;top:304.8px;width:31.5px;height:42.0px;"></div>
<div class="t" style="left:2509.9px;top:311.5px;font-size:24px;color:#a0d0f0;transform-origin:0 0;transform:scaleX(0.8943);">D</div>
<div style="left:2516.2px;top:497.6px;width:3.5px;height:372.0px;background:#e0e0e0;"></div>
<div style="left:2502.7px;top:668.5px;width:30.0px;height:30.5px;background:#5c5c5c;border:2px solid #e4e4e4;"></div>
<div style="left:1376.2px;top:1018.7px;width:1124.2px;height:39.0px;background:linear-gradient(180deg,#2d2d2d 0%,#333 50%,#3d3d3d 100%);"></div>
<div class="t" style="left:1425.2px;top:1026.2px;font-size:22px;color:#e0e0e0;transform-origin:0 0;transform:scaleX(0.9952);">100%</div>
<div style="left:1668.1px;top:1034.7px;width:535.9px;height:4.5px;background:#e4e4e4;"></div>
<div style="left:1920.2px;top:1021.7px;width:31.5px;height:31.0px;background:#5c5c5c;border:2px solid #e4e4e4;"></div>
<svg style="left:1376.2px;top:205.0px;overflow:hidden" width="1124.2" height="813.7" viewBox="0 0 1124.2 813.7"><rect x="19.0" y="16.4" width="4.400" height="6.700" fill="#000" stroke="#fff" stroke-width="2"/><rect x="33.7" y="16.4" width="4.400" height="6.700" fill="#000" stroke="#fff" stroke-width="2"/><rect x="48.5" y="16.4" width="4.400" height="6.700" fill="#000" stroke="#fff" stroke-width="2"/><rect x="63.2" y="16.4" width="4.400" height="6.700" fill="#000" stroke="#fff" stroke-width="2"/><rect x="78.0" y="16.4" width="4.400" height="6.700" fill="#000" stroke="#fff" stroke-width="2"/><rect x="92.7" y="16.4" width="4.400" height="6.700" fill="#000" stroke="#fff" stroke-width="2"/><rect x="107.4" y="16.4" width="4.400" height="6.700" fill="#000" stroke="#fff" stroke-width="2"/><rect x="122.2" y="16.4" width="4.400" height="6.700" fill="#000" stroke="#fff" stroke-width="2"/><rect x="136.9" y="16.4" width="4.400" height="6.700" fill="#000" stroke="#fff" stroke-width="2"/><rect x="151.7" y="16.4" width="4.400" height="6.700" fill="#000" stroke="#fff" stroke-width="2"/><rect x="166.4" y="16.4" width="4.400" height="6.700" fill="#000" stroke="#fff" stroke-width="2"/><text x="20.200" y="49.900" font-size="22" fill="#f4f4f4" font-family="Liberation Sans, sans-serif" textLength="34.500" lengthAdjust="spacingAndGlyphs">300</text><rect x="164.8" y="9.0" width="796.0" height="796.0" fill="none" stroke="#484848" stroke-width="1.800"/><path d="M164.8 407.0h796.0" stroke="#9a9a9a" stroke-width="1.500" stroke-dasharray="37 13"/><path d="M562.8 9.0v796.0" stroke="#9a9a9a" stroke-width="1.500" stroke-dasharray="37 13"/><path d="M562.8 407.0L569.8 407.0L578.3 407.0L586.8 407.0L593.8 407.0L599.8 407.0L604.4 407.0L608.3 407.0L611.6 407.0L613.8 407.0L615.6 407.0L617.0 407.0L617.8 407.0L618.1 407.0L618.1 407.0 M562.8 407.0L555.8 407.0L547.3 407.0L538.8 407.0L531.8 407.0L525.8 407.0L521.2 407.0L517.3 407.0L514.0 407.0L511.8 407.0L510.0 407.0L508.6 407.0L507.8 407.0L507.5 407.0L507.5 407.0 M562.8 407.0L567.7 411.4L573.8 416.8L579.8 422.1L584.7 426.5L589.0 430.3L592.2 433.2L595.0 435.6L597.3 437.7L598.9 439.1L600.1 440.2L601.1 441.1L601.7 441.6L601.9 441.8L601.9 441.8 M562.8 407.0L557.9 402.6L551.8 397.2L545.8 391.9L540.9 387.5L536.6 383.7L533.4 380.8L530.6 378.4L528.3 376.3L526.7 374.9L525.5 373.8L524.5 372.9L523.9 372.4L523.7 372.2L523.7 372.2 M562.8 407.0L562.8 413.2L562.8 420.8L562.8 428.4L562.8 434.6L562.8 439.9L562.8 444.0L562.8 447.5L562.8 450.4L562.8 452.4L562.8 454.0L562.8 455.2L562.8 455.9L562.8 456.2L562.8 456.2 M562.8 407.0L562.8 400.8L562.8 393.2L562.8 385.6L562.8 379.4L562.8 374.1L562.8 370.0L562.8 366.5L562.8 363.6L562.8 361.6L562.8 360.0L562.8 358.8L562.8 358.1L562.8 357.8L562.8 357.8 M562.8 407.0L557.9 411.4L551.8 416.8L545.8 422.1L540.9 426.5L536.6 430.3L533.4 433.2L530.6 435.6L528.3 437.7L526.7 439.1L525.5 440.2L524.5 441.1L523.9 441.6L523.7 441.8L523.7 441.8 M562.8 407.0L567.7 402.6L573.8 397.2L579.8 391.9L584.7 387.5L589.0 383.7L592.2 380.8L595.0 378.4L597.3 376.3L598.9 374.9L600.1 373.8L601.1 372.9L601.7 372.4L601.9 372.2L601.9 372.2 M621.8 407.0L620.9 415.7L618.2 424.1L613.9 432.0L608.0 439.1L600.7 445.3L592.3 450.3L583.0 454.0L573.0 456.2L562.8 457.0L552.6 456.2L542.6 454.0L533.3 450.3L524.9 445.3L517.6 439.1L511.7 432.0L507.4 424.1L504.7 415.7L503.8 407.0L504.7 398.3L507.4 389.9L511.7 382.0L517.6 374.9L524.9 368.7L533.3 363.7L542.6 360.0L552.6 357.8L562.8 357.0L573.0 357.8L583.0 360.0L592.3 363.7L600.7 368.7L608.0 374.9L613.9 382.0L618.2 389.9L620.9 398.3L621.8 407.0 M618.1 407.0L639.1 407.0L699.1 407.0 M618.1 407.0L686.9 407.0 M618.1 407.0L680.6 407.0 M618.1 407.0L686.9 407.0L686.9 407.0 M507.5 407.0L486.5 407.0L426.5 407.0 M507.5 407.0L438.7 407.0 M507.5 407.0L445.0 407.0 M507.5 407.0L438.7 407.0L438.7 407.0 M438.7 407.0L686.9 407.0 M699.1 407.0L704.1 407.0L709.1 407.0L713.6 407.0L716.6 407.0L717.6 407.0L717.6 407.0L714.1 407.0L707.1 407.0L699.1 407.0 M699.1 407.0L694.1 407.0L689.1 407.0L684.6 407.0L681.6 407.0L680.6 407.0L680.6 407.0L684.1 407.0L691.1 407.0L699.1 407.0 M699.1 407.0L701.9 411.1L704.7 415.3L707.2 419.0L708.9 421.5L709.4 422.3L709.4 422.3L707.5 419.4L703.6 413.6L699.1 407.0 M699.1 407.0L696.3 402.9L693.5 398.7L691.0 395.0L689.3 392.5L688.8 391.7L688.8 391.7L690.7 394.6L694.6 400.4L699.1 407.0 M699.1 407.0L701.9 402.9L704.7 398.7L707.2 395.0L708.9 392.5L709.4 391.7L709.4 391.7L707.5 394.6L703.6 400.4L699.1 407.0 M699.1 407.0L696.3 411.1L693.5 415.3L691.0 419.0L689.3 421.5L688.8 422.3L688.8 422.3L690.7 419.4L694.6 413.6L699.1 407.0 M426.5 407.0L431.5 407.0L436.5 407.0L441.0 407.0L444.0 407.0L445.0 407.0L445.0 407.0L441.5 407.0L434.5 407.0L426.5 407.0 M426.5 407.0L421.5 407.0L416.5 407.0L412.0 407.0L409.0 407.0L408.0 407.0L408.0 407.0L411.5 407.0L418.5 407.0L426.5 407.0 M426.5 407.0L429.3 411.1L432.1 415.3L434.6 419.0L436.3 421.5L436.8 422.3L436.8 422.3L434.9 419.4L431.0 413.6L426.5 407.0 M426.5 407.0L423.7 402.9L420.9 398.7L418.4 395.0L416.7 392.5L416.2 391.7L416.2 391.7L418.1 394.6L422.0 400.4L426.5 407.0 M426.5 407.0L429.3 402.9L432.1 398.7L434.6 395.0L436.3 392.5L436.8 391.7L436.8 391.7L434.9 394.6L431.0 400.4L426.5 407.0 M426.5 407.0L423.7 411.1L420.9 415.3L418.4 419.0L416.7 421.5L416.2 422.3L416.2 422.3L418.1 419.4L422.0 413.6L426.5 407.0 M562.8 462.3L562.8 483.3L562.8 543.3 M562.8 462.3L562.8 531.1 M562.8 462.3L562.8 524.8 M562.8 462.3L562.8 531.1L562.8 531.1 M562.8 351.7L562.8 330.7L562.8 270.7 M562.8 351.7L562.8 282.9 M562.8 351.7L562.8 289.2 M562.8 351.7L562.8 282.9L562.8 282.9 M562.8 282.9L562.8 531.1 M562.8 543.3L562.8 548.3L562.8 553.3L562.8 557.8L562.8 560.8L562.8 561.8L562.8 561.8L562.8 558.3L562.8 551.3L562.8 543.3 M562.8 543.3L562.8 538.3L562.8 533.3L562.8 528.8L562.8 525.8L562.8 524.8L562.8 524.8L562.8 528.3L562.8 535.3L562.8 543.3 M562.8 543.3L566.9 546.1L571.1 548.9L574.8 551.4L577.3 553.1L578.1 553.6L578.1 553.6L575.2 551.7L569.4 547.8L562.8 543.3 M562.8 543.3L558.7 540.5L554.5 537.7L550.8 535.2L548.3 533.5L547.5 533.0L547.5 533.0L550.4 534.9L556.2 538.8L562.8 543.3 M562.8 543.3L558.7 546.1L554.5 548.9L550.8 551.4L548.3 553.1L547.5 553.6L547.5 553.6L550.4 551.7L556.2 547.8L562.8 543.3 M562.8 543.3L566.9 540.5L571.1 537.7L574.8 535.2L577.3 533.5L578.1 533.0L578.1 533.0L575.2 534.9L569.4 538.8L562.8 543.3 M562.8 270.7L562.8 275.7L562.8 280.7L562.8 285.2L562.8 288.2L562.8 289.2L562.8 289.2L562.8 285.7L562.8 278.7L562.8 270.7 M562.8 270.7L562.8 265.7L562.8 260.7L562.8 256.2L562.8 253.2L562.8 252.2L562.8 252.2L562.8 255.7L562.8 262.7L562.8 270.7 M562.8 270.7L566.9 273.5L571.1 276.3L574.8 278.8L577.3 280.5L578.1 281.0L578.1 281.0L575.2 279.1L569.4 275.2L562.8 270.7 M562.8 270.7L558.7 267.9L554.5 265.1L550.8 262.6L548.3 260.9L547.5 260.4L547.5 260.4L550.4 262.3L556.2 266.2L562.8 270.7 M562.8 270.7L558.7 273.5L554.5 276.3L550.8 278.8L548.3 280.5L547.5 281.0L547.5 281.0L550.4 279.1L556.2 275.2L562.8 270.7 M562.8 270.7L566.9 267.9L571.1 265.1L574.8 262.6L577.3 260.9L578.1 260.4L578.1 260.4L575.2 262.3L569.4 266.2L562.8 270.7" fill="none" stroke="#ff6a10" stroke-width="2.1" stroke-linejoin="round"/><circle cx="562.8" cy="407.0" r="4" fill="none" stroke="#ffb080" stroke-width="1.200"/><text x="203.500" y="796.800" font-size="21.500" fill="#f4f4f4" font-family="Liberation Sans, sans-serif" xml:space="preserve" textLength="714.300" lengthAdjust="spacingAndGlyphs">Points/Vectors: 750   Hardware Points: 1259   Time: 0.041967   FPS: 23.53</text><rect x="1019.5999999999999" y="76.2" width="31" height="31" fill="#00e800"/><path d="M1034.6 26.2L1034.6 61.2" stroke="#1818a0" stroke-width="1.500"/><path d="M1034.6 61.2L1028.6 42.2L1040.6 42.2z" fill="#1818a0"/><path d="M1034.6 158.2L1034.6 124.2" stroke="#2828f0" stroke-width="1.500"/><path d="M1034.6 124.2L1040.6 143.2L1028.6 143.2z" fill="#2828f0"/><path d="M969.6 92.2L1001.6 92.2" stroke="#b01010" stroke-width="1.500"/><path d="M1001.6 92.2L982.6 98.2L982.6 86.2z" fill="#b01010"/><path d="M1099.6 92.2L1067.6 92.2" stroke="#ff1010" stroke-width="1.500"/><path d="M1067.6 92.2L1086.6 86.2L1086.6 98.2z" fill="#ff1010"/><text x="1033.6" y="208.5" font-size="21.500" fill="#1478ec" stroke="#1478ec" stroke-width="0.450" text-anchor="middle" font-family="Liberation Sans, sans-serif">Top</text><path d="M56.6 759v39.500" stroke="#2a20f0" stroke-width="2.600"/><path d="M56.6 759h39.500" stroke="#e00000" stroke-width="2.600"/><text x="59" y="756.5" fill="#00e000" font-family="Liberation Sans, sans-serif" font-size="22.500" font-weight="bold">Y</text><text x="100.2" y="756.5" fill="#f00000" font-family="Liberation Sans, sans-serif" font-size="22.500" font-weight="bold">X</text><text x="59.5" y="796.8" fill="#2a20f0" font-family="Liberation Sans, sans-serif" font-size="22.500" font-weight="bold">Z</text><path d="M1093.2 717.5v81.5M1027.2 782.5h81.500" stroke="#1478f0" stroke-width="1.700" stroke-dasharray="19 1.500"/></svg>
<div class="hdr" style="left:212.2px;top:1057.0px;width:1123.0px;height:48.0px;"></div>
<svg style="left:255.7px;top:1073.5px;" width="25.5" height="16.5" viewBox="0 0 25.5 16.5"><path d="M0 0h25.5L12.75 16.5z" fill="#30b8f0"/><path d="M5 2.500h15.5L12.75 10.5z" fill="#0a1a28"/></svg>
<div class="t" style="left:294.7px;top:1067.0px;font-size:22.5px;color:#e8e8e8;transform-origin:0 0;transform:scaleX(1.0425);font-weight:bold;">Left</div>
<svg style="left:404.2px;top:1069.0px;" width="32" height="26" viewBox="0 0 32 26"><path d="M3 22c-2-10 4-18 13-17c6 1 9 5 9 11" fill="none" stroke="#3aa8e8" stroke-width="3"/><path d="M19 12l11 2l-6 10z" fill="#3aa8e8"/></svg>
<svg style="left:455.2px;top:1067.0px;" width="30" height="30" viewBox="0 0 30 30"><path d="M15 3v24M3 15h24" stroke="#3aa8e8" stroke-width="2.200"/><path d="M15 0l-4.500 6h9zM15 30l-4.500-6h9zM0 15l6-4.500v9zM30 15l-6-4.500v9z" fill="#3aa8e8"/></svg>
<svg style="left:505.2px;top:1068.0px;" width="28" height="28" viewBox="0 0 28 28"><circle cx="11" cy="11" r="8" fill="#2a98e0" stroke="#3ab0f0" stroke-width="3"/><circle cx="9" cy="9" r="3.500" fill="#8ad0f8"/><path d="M17 17l8 8" stroke="#3aa8e8" stroke-width="4.500" stroke-linecap="round"/></svg>
<div style="left:931.2px;top:1076.5px;width:218.0px;height:6.0px;background:#2a2a2a;border-top:1.500px solid #1c1c1c;border-bottom:1.500px solid #5e5e5e;"></div>
<svg style="left:1090.2px;top:1059.0px;" width="22" height="38" viewBox="0 0 22 38"><defs><linearGradient id="g280" x1="0" y1="0" x2="0" y2="1"><stop offset="0" stop-color="#c0c0c0"/><stop offset=".5" stop-color="#909090"/><stop offset=".52" stop-color="#606060"/><stop offset="1" stop-color="#3a3a3a"/></linearGradient></defs><rect x="0.500" y="7" width="21" height="25" rx="3.500" fill="url(#g280)" stroke="#262626" stroke-width="1"/><path d="M11.0 0v38" stroke="#202020" stroke-width="3"/><path d="M11.0 1v32" stroke="#6a6a6a" stroke-width="1"/></svg>
<div class="b hl" style="left:1182.2px;top:1060.0px;width:47.5px;height:41.5px;"></div>
<div class="t" style="left:1200.7px;top:1068.5px;font-size:21.5px;color:#fff;transform-origin:0 0;transform:scaleX(0.7670);">E</div>
<div class="b" style="left:1234.2px;top:1060.0px;width:47.0px;height:41.5px;"></div>
<div class="t" style="left:1251.7px;top:1068.5px;font-size:21.5px;color:#ddd;transform-origin:0 0;transform:scaleX(0.8368);">S</div>
<div class="b" style="left:1285.2px;top:1060.0px;width:46.5px;height:41.5px;"></div>
<div class="t" style="left:1296.2px;top:1068.5px;font-size:21.5px;color:#ddd;transform-origin:0 0;transform:scaleX(0.8716);">ES</div>
<div class="b" style="left:1338.2px;top:1060.0px;width:31.5px;height:41.5px;"></div>
<div style="left:1343.7px;top:1071.5px;width:18.5px;height:18.0px;border:2px solid #eee;border-top-width:4.500px;"></div>
<div style="left:212.2px;top:1105.0px;width:1124.2px;height:813.7px;background:#000;"></div>
<div style="left:1336.4px;top:1105.0px;width:36.0px;height:852.7px;background:#2e2e2e;"></div>
<div class="b hl" style="left:1338.2px;top:1107.8px;width:31.5px;height:43.6px;"></div>
<svg style="left:1340.2px;top:1115.0px;" width="28" height="28" viewBox="0 0 28 28"><path d="M14 4v20M4 14h20" stroke="#a4dcf8" stroke-width="2.600"/><path d="M14 0l-5 6.500h10zM14 28l-5-6.500h10zM0 14l6.500-5v10zM28 14l-6.500-5v10z" fill="#a4dcf8"/></svg>
<div class="b" style="left:1338.2px;top:1157.5px;width:31.5px;height:41.5px;"></div>
<svg style="left:1340.2px;top:1165.0px;" width="28" height="26" viewBox="0 0 28 26"><path d="M3 22c-2-10 3-17 11-17c7 0 10 5 10 10" fill="none" stroke="#bcd8ec" stroke-width="3"/><path d="M18 11l10 2l-5 9z" fill="#5ab0e8"/></svg>
<div class="b" style="left:1338.2px;top:1204.8px;width:31.5px;height:42.0px;"></div>
<div class="t" style="left:1346.0px;top:1211.5px;font-size:24px;color:#a0d0f0;transform-origin:0 0;transform:scaleX(0.8943);">D</div>
<div style="left:1352.2px;top:1428.0px;width:3.5px;height:310.6px;background:#e0e0e0;"></div>
<div style="left:1338.7px;top:1568.5px;width:30.0px;height:30.5px;background:#5c5c5c;border:2px solid #e4e4e4;"></div>
<div style="left:212.2px;top:1918.7px;width:1124.2px;height:39.0px;background:linear-gradient(180deg,#2d2d2d 0%,#333 50%,#3d3d3d 100%);"></div>
<div class="t" style="left:261.2px;top:1926.2px;font-size:22px;color:#e0e0e0;transform-origin:0 0;transform:scaleX(0.9952);">100%</div>
<div style="left:504.1px;top:1934.7px;width:535.9px;height:4.5px;background:#e4e4e4;"></div>
<div style="left:755.8px;top:1921.7px;width:31.5px;height:31.0px;background:#5c5c5c;border:2px solid #e4e4e4;"></div>
<svg style="left:212.2px;top:1105.0px;overflow:hidden" width="1124.2" height="813.7" viewBox="0 0 1124.2 813.7"><rect x="19.0" y="16.4" width="4.400" height="6.700" fill="#000" stroke="#fff" stroke-width="2"/><rect x="33.7" y="16.4" width="4.400" height="6.700" fill="#000" stroke="#fff" stroke-width="2"/><rect x="48.5" y="16.4" width="4.400" height="6.700" fill="#000" stroke="#fff" stroke-width="2"/><rect x="63.2" y="16.4" width="4.400" height="6.700" fill="#000" stroke="#fff" stroke-width="2"/><rect x="78.0" y="16.4" width="4.400" height="6.700" fill="#000" stroke="#fff" stroke-width="2"/><rect x="92.7" y="16.4" width="4.400" height="6.700" fill="#000" stroke="#fff" stroke-width="2"/><rect x="107.4" y="16.4" width="4.400" height="6.700" fill="#000" stroke="#fff" stroke-width="2"/><rect x="122.2" y="16.4" width="4.400" height="6.700" fill="#000" stroke="#fff" stroke-width="2"/><rect x="136.9" y="16.4" width="4.400" height="6.700" fill="#000" stroke="#fff" stroke-width="2"/><rect x="151.7" y="16.4" width="4.400" height="6.700" fill="#000" stroke="#fff" stroke-width="2"/><rect x="166.4" y="16.4" width="4.400" height="6.700" fill="#000" stroke="#fff" stroke-width="2"/><text x="20.200" y="49.900" font-size="22" fill="#f4f4f4" font-family="Liberation Sans, sans-serif" textLength="34.500" lengthAdjust="spacingAndGlyphs">300</text><rect x="164.8" y="9.0" width="796.0" height="796.0" fill="none" stroke="#484848" stroke-width="1.800"/><path d="M164.8 407.0h796.0" stroke="#8a8a8a" stroke-width="1.500" stroke-dasharray="37 13.600"/><path d="M562.8 11.0L562.8 26.0L562.8 43.0L562.8 62.0L562.8 79.0L562.8 99.0L562.8 119.0L562.8 138.0L562.8 157.0L562.8 172.0L562.8 187.0L562.8 202.0L562.8 215.0L562.8 229.0L562.8 803.0 M562.8 11.0L567.2 26.0L572.6 43.0L577.9 62.0L582.3 79.0L586.1 99.0L589.0 119.0L591.4 138.0L593.5 157.0L594.9 172.0L596.0 187.0L596.9 202.0L597.4 215.0L597.6 229.0L597.6 803.0 M562.8 11.0L558.4 26.0L553.0 43.0L547.7 62.0L543.3 79.0L539.5 99.0L536.6 119.0L534.2 138.0L532.1 157.0L530.7 172.0L529.6 187.0L528.7 202.0L528.2 215.0L528.0 229.0L528.0 803.0 M562.8 11.0L569.0 26.0L576.6 43.0L584.2 62.0L590.4 79.0L595.7 99.0L599.8 119.0L603.3 138.0L606.2 157.0L608.2 172.0L609.8 187.0L611.0 202.0L611.8 215.0L612.0 229.0L612.0 803.0 M562.8 11.0L556.6 26.0L549.0 43.0L541.4 62.0L535.2 79.0L529.9 99.0L525.8 119.0L522.3 138.0L519.4 157.0L517.4 172.0L515.8 187.0L514.6 202.0L513.8 215.0L513.6 229.0L513.6 803.0 M562.8 803.5L571.5 803.5L579.9 803.5L587.8 803.5L594.9 803.5L601.1 803.5L606.1 803.5L609.8 803.5L612.0 803.5L612.8 803.5L612.0 803.5L609.8 803.5L606.1 803.5L601.1 803.5L594.9 803.5L587.8 803.5L579.9 803.5L571.5 803.5L562.8 803.5L554.1 803.5L545.7 803.5L537.8 803.5L530.7 803.5L524.5 803.5L519.5 803.5L515.8 803.5L513.6 803.5L512.8 803.5L513.6 803.5L515.8 803.5L519.5 803.5L524.5 803.5L530.7 803.5L537.8 803.5L545.7 803.5L554.1 803.5L562.8 803.5 M562.8 307.0L562.8 347.5L562.8 446.8 M562.8 384.1L562.8 463.9 M562.8 543.3L562.8 553.8 M562.8 595.2L562.8 570.9 M562.8 723.5L562.8 753.5L562.8 790.5 M562.8 790.5L562.8 790.5 M562.8 446.8L562.8 455.0L562.8 465.0L562.8 476.0L562.8 488.0L562.8 500.0L562.8 567.0L562.8 577.0L562.8 584.0L562.8 589.0 M562.8 446.8L566.9 455.0L571.1 465.0L574.8 476.0L577.3 488.0L578.1 500.0L578.1 567.0L575.2 577.0L569.4 584.0L562.8 589.0 M562.8 446.8L558.7 455.0L554.5 465.0L550.8 476.0L548.3 488.0L547.5 500.0L547.5 567.0L550.4 577.0L556.2 584.0L562.8 589.0 M618.1 307.0L639.1 347.5L699.1 446.8 M618.1 384.1L686.9 463.9 M618.1 543.3L680.6 553.8 M618.1 595.2L680.6 570.9 M618.1 723.5L686.9 753.5L686.9 790.5 M507.5 307.0L486.5 347.5L426.5 446.8 M507.5 384.1L438.7 463.9 M507.5 543.3L445.0 553.8 M507.5 595.2L445.0 570.9 M507.5 723.5L438.7 753.5L438.7 790.5 M438.7 790.5L686.9 790.5 M699.1 446.8L704.1 455.0L709.1 465.0L713.6 476.0L716.6 488.0L717.6 500.0L717.6 567.0L714.1 577.0L707.1 584.0L699.1 589.0 M699.1 446.8L694.1 455.0L689.1 465.0L684.6 476.0L681.6 488.0L680.6 500.0L680.6 567.0L684.1 577.0L691.1 584.0L699.1 589.0 M699.1 446.8L701.9 455.0L704.7 465.0L707.2 476.0L708.9 488.0L709.4 500.0L709.4 567.0L707.5 577.0L703.6 584.0L699.1 589.0 M699.1 446.8L696.3 455.0L693.5 465.0L691.0 476.0L689.3 488.0L688.8 500.0L688.8 567.0L690.7 577.0L694.6 584.0L699.1 589.0 M426.5 446.8L431.5 455.0L436.5 465.0L441.0 476.0L444.0 488.0L445.0 500.0L445.0 567.0L441.5 577.0L434.5 584.0L426.5 589.0 M426.5 446.8L421.5 455.0L416.5 465.0L412.0 476.0L409.0 488.0L408.0 500.0L408.0 567.0L411.5 577.0L418.5 584.0L426.5 589.0 M426.5 446.8L429.3 455.0L432.1 465.0L434.6 476.0L436.3 488.0L436.8 500.0L436.8 567.0L434.9 577.0L431.0 584.0L426.5 589.0 M426.5 446.8L423.7 455.0L420.9 465.0L418.4 476.0L416.7 488.0L416.2 500.0L416.2 567.0L418.1 577.0L422.0 584.0L426.5 589.0" fill="none" stroke="#ff6a10" stroke-width="2.1" stroke-linejoin="round"/><rect x="432.79999999999995" y="776" width="260" height="27" fill="#000"/><path d="M503.79999999999995 803.5h118" stroke="#ff6a10" stroke-width="2"/><path d="M557.8 806.0l5 4l5-4" stroke="#ddd" stroke-width="1.300" fill="none"/><text x="203.500" y="796.800" font-size="21.500" fill="#f4f4f4" font-family="Liberation Sans, sans-serif" xml:space="preserve" textLength="714.300" lengthAdjust="spacingAndGlyphs">Points/Vectors: 750   Hardware Points: 1259   Time: 0.041967   FPS: 23.53</text><rect x="1019.5999999999999" y="76.2" width="31" height="31" fill="#ff0000"/><path d="M1034.6 26.2L1034.6 61.2" stroke="#00e000" stroke-width="1.500"/><path d="M1034.6 61.2L1028.6 42.2L1040.6 42.2z" fill="#00e000"/><path d="M1034.6 158.2L1034.6 124.2" stroke="#109010" stroke-width="1.500"/><path d="M1034.6 124.2L1040.6 143.2L1028.6 143.2z" fill="#109010"/><path d="M969.6 92.2L1001.6 92.2" stroke="#1818a0" stroke-width="1.500"/><path d="M1001.6 92.2L982.6 98.2L982.6 86.2z" fill="#1818a0"/><path d="M1099.6 92.2L1067.6 92.2" stroke="#2828f0" stroke-width="1.500"/><path d="M1067.6 92.2L1086.6 86.2L1086.6 98.2z" fill="#2828f0"/><text x="1033.6" y="208.5" font-size="21.500" fill="#1478ec" stroke="#1478ec" stroke-width="0.450" text-anchor="middle" font-family="Liberation Sans, sans-serif">Left</text><path d="M55.800000000000004 759v-37.500" stroke="#00d000" stroke-width="2"/><path d="M55.800000000000004 759h39" stroke="#2020e0" stroke-width="2"/><text x="59.5" y="716.5" fill="#00e000" font-family="Liberation Sans, sans-serif" font-size="22.500" font-weight="bold">Y</text><text x="60" y="756" fill="#f00000" font-family="Liberation Sans, sans-serif" font-size="22.500" font-weight="bold">X</text><text x="100.5" y="756" fill="#2a20f0" font-family="Liberation Sans, sans-serif" font-size="22.500" font-weight="bold">Z</text><path d="M1093 717.5v81.5M1027 782.5h81.500" stroke="#1478f0" stroke-width="1.700" stroke-dasharray="19 1.500"/></svg>
<div class="hdr" style="left:1376.2px;top:1057.0px;width:1123.0px;height:48.0px;"></div>
<svg style="left:1412.5px;top:1073.5px;" width="25.5" height="16.5" viewBox="0 0 25.5 16.5"><path d="M0 0h25.5L12.75 16.5z" fill="#30b8f0"/><path d="M5 2.500h15.5L12.75 10.5z" fill="#0a1a28"/></svg>
<div class="t" style="left:1451.5px;top:1067.0px;font-size:22.5px;color:#e8e8e8;transform-origin:0 0;transform:scaleX(1.0003);font-weight:bold;">Front</div>
<svg style="left:1568.2px;top:1069.0px;" width="32" height="26" viewBox="0 0 32 26"><path d="M3 22c-2-10 4-18 13-17c6 1 9 5 9 11" fill="none" stroke="#3aa8e8" stroke-width="3"/><path d="M19 12l11 2l-6 10z" fill="#3aa8e8"/></svg>
<svg style="left:1619.2px;top:1067.0px;" width="30" height="30" viewBox="0 0 30 30"><path d="M15 3v24M3 15h24" stroke="#3aa8e8" stroke-width="2.200"/><path d="M15 0l-4.500 6h9zM15 30l-4.500-6h9zM0 15l6-4.500v9zM30 15l-6-4.500v9z" fill="#3aa8e8"/></svg>
<svg style="left:1669.2px;top:1068.0px;" width="28" height="28" viewBox="0 0 28 28"><circle cx="11" cy="11" r="8" fill="#2a98e0" stroke="#3ab0f0" stroke-width="3"/><circle cx="9" cy="9" r="3.500" fill="#8ad0f8"/><path d="M17 17l8 8" stroke="#3aa8e8" stroke-width="4.500" stroke-linecap="round"/></svg>
<div style="left:2095.2px;top:1076.5px;width:218.0px;height:6.0px;background:#2a2a2a;border-top:1.500px solid #1c1c1c;border-bottom:1.500px solid #5e5e5e;"></div>
<svg style="left:2254.2px;top:1059.0px;" width="22" height="38" viewBox="0 0 22 38"><defs><linearGradient id="g311" x1="0" y1="0" x2="0" y2="1"><stop offset="0" stop-color="#c0c0c0"/><stop offset=".5" stop-color="#909090"/><stop offset=".52" stop-color="#606060"/><stop offset="1" stop-color="#3a3a3a"/></linearGradient></defs><rect x="0.500" y="7" width="21" height="25" rx="3.500" fill="url(#g311)" stroke="#262626" stroke-width="1"/><path d="M11.0 0v38" stroke="#202020" stroke-width="3"/><path d="M11.0 1v32" stroke="#6a6a6a" stroke-width="1"/></svg>
<div class="b hl" style="left:2346.2px;top:1060.0px;width:47.5px;height:41.5px;"></div>
<div class="t" style="left:2364.7px;top:1068.5px;font-size:21.5px;color:#fff;transform-origin:0 0;transform:scaleX(0.7670);">E</div>
<div class="b" style="left:2398.2px;top:1060.0px;width:47.0px;height:41.5px;"></div>
<div class="t" style="left:2415.7px;top:1068.5px;font-size:21.5px;color:#ddd;transform-origin:0 0;transform:scaleX(0.8368);">S</div>
<div class="b" style="left:2449.2px;top:1060.0px;width:46.5px;height:41.5px;"></div>
<div class="t" style="left:2460.2px;top:1068.5px;font-size:21.5px;color:#ddd;transform-origin:0 0;transform:scaleX(0.8716);">ES</div>
<div class="b" style="left:2502.2px;top:1060.0px;width:31.5px;height:41.5px;"></div>
<div style="left:2507.7px;top:1071.5px;width:18.5px;height:18.0px;border:2px solid #eee;border-top-width:4.500px;"></div>
<div style="left:1376.2px;top:1105.0px;width:1124.2px;height:813.7px;background:#000;"></div>
<div style="left:2500.4px;top:1105.0px;width:36.0px;height:852.7px;background:#2e2e2e;"></div>
<div class="b hl" style="left:2502.2px;top:1107.8px;width:31.5px;height:43.6px;"></div>
<svg style="left:2504.2px;top:1115.0px;" width="28" height="28" viewBox="0 0 28 28"><path d="M14 4v20M4 14h20" stroke="#a4dcf8" stroke-width="2.600"/><path d="M14 0l-5 6.500h10zM14 28l-5-6.500h10zM0 14l6.500-5v10zM28 14l-6.500-5v10z" fill="#a4dcf8"/></svg>
<div class="b" style="left:2502.2px;top:1157.5px;width:31.5px;height:41.5px;"></div>
<svg style="left:2504.2px;top:1165.0px;" width="28" height="26" viewBox="0 0 28 26"><path d="M3 22c-2-10 3-17 11-17c7 0 10 5 10 10" fill="none" stroke="#bcd8ec" stroke-width="3"/><path d="M18 11l10 2l-5 9z" fill="#5ab0e8"/></svg>
<div class="b" style="left:2502.2px;top:1204.8px;width:31.5px;height:42.0px;"></div>
<div class="t" style="left:2509.9px;top:1211.5px;font-size:24px;color:#a0d0f0;transform-origin:0 0;transform:scaleX(0.8943);">D</div>
<div style="left:2516.2px;top:1428.0px;width:3.5px;height:310.6px;background:#e0e0e0;"></div>
<div style="left:2502.7px;top:1568.5px;width:30.0px;height:30.5px;background:#5c5c5c;border:2px solid #e4e4e4;"></div>
<div style="left:1376.2px;top:1918.7px;width:1124.2px;height:39.0px;background:linear-gradient(180deg,#2d2d2d 0%,#333 50%,#3d3d3d 100%);"></div>
<div class="t" style="left:1425.2px;top:1926.2px;font-size:22px;color:#e0e0e0;transform-origin:0 0;transform:scaleX(0.9952);">100%</div>
<div style="left:1668.1px;top:1934.7px;width:535.9px;height:4.5px;background:#e4e4e4;"></div>
<div style="left:1920.2px;top:1921.7px;width:31.5px;height:31.0px;background:#5c5c5c;border:2px solid #e4e4e4;"></div>
<svg style="left:1376.2px;top:1105.0px;overflow:hidden" width="1124.2" height="813.7" viewBox="0 0 1124.2 813.7"><rect x="19.0" y="16.4" width="4.400" height="6.700" fill="#000" stroke="#fff" stroke-width="2"/><rect x="33.7" y="16.4" width="4.400" height="6.700" fill="#000" stroke="#fff" stroke-width="2"/><rect x="48.5" y="16.4" width="4.400" height="6.700" fill="#000" stroke="#fff" stroke-width="2"/><rect x="63.2" y="16.4" width="4.400" height="6.700" fill="#000" stroke="#fff" stroke-width="2"/><rect x="78.0" y="16.4" width="4.400" height="6.700" fill="#000" stroke="#fff" stroke-width="2"/><rect x="92.7" y="16.4" width="4.400" height="6.700" fill="#000" stroke="#fff" stroke-width="2"/><rect x="107.4" y="16.4" width="4.400" height="6.700" fill="#000" stroke="#fff" stroke-width="2"/><rect x="122.2" y="16.4" width="4.400" height="6.700" fill="#000" stroke="#fff" stroke-width="2"/><rect x="136.9" y="16.4" width="4.400" height="6.700" fill="#000" stroke="#fff" stroke-width="2"/><rect x="151.7" y="16.4" width="4.400" height="6.700" fill="#000" stroke="#fff" stroke-width="2"/><rect x="166.4" y="16.4" width="4.400" height="6.700" fill="#000" stroke="#fff" stroke-width="2"/><text x="20.200" y="49.900" font-size="22" fill="#f4f4f4" font-family="Liberation Sans, sans-serif" textLength="34.500" lengthAdjust="spacingAndGlyphs">300</text><rect x="164.8" y="9.0" width="796.0" height="796.0" fill="none" stroke="#484848" stroke-width="1.800"/><g fill="#3c3c3c"><rect x="213.6" y="57.8" width="2" height="2"/><rect x="213.6" y="107.5" width="2" height="2"/><rect x="213.6" y="157.2" width="2" height="2"/><rect x="213.6" y="207.0" width="2" height="2"/><rect x="213.6" y="256.8" width="2" height="2"/><rect x="213.6" y="306.5" width="2" height="2"/><rect x="213.6" y="356.2" width="2" height="2"/><rect x="213.6" y="455.8" width="2" height="2"/><rect x="213.6" y="505.5" width="2" height="2"/><rect x="213.6" y="555.2" width="2" height="2"/><rect x="213.6" y="605.0" width="2" height="2"/><rect x="213.6" y="654.8" width="2" height="2"/><rect x="213.6" y="704.5" width="2" height="2"/><rect x="213.6" y="754.2" width="2" height="2"/><rect x="263.3" y="57.8" width="2" height="2"/><rect x="263.3" y="107.5" width="2" height="2"/><rect x="263.3" y="157.2" width="2" height="2"/><rect x="263.3" y="207.0" width="2" height="2"/><rect x="263.3" y="256.8" width="2" height="2"/><rect x="263.3" y="306.5" width="2" height="2"/><rect x="263.3" y="356.2" width="2" height="2"/><rect x="263.3" y="455.8" width="2" height="2"/><rect x="263.3" y="505.5" width="2" height="2"/><rect x="263.3" y="555.2" width="2" height="2"/><rect x="263.3" y="605.0" width="2" height="2"/><rect x="263.3" y="654.8" width="2" height="2"/><rect x="263.3" y="704.5" width="2" height="2"/><rect x="263.3" y="754.2" width="2" height="2"/><rect x="313.1" y="57.8" width="2" height="2"/><rect x="313.1" y="107.5" width="2" height="2"/><rect x="313.1" y="157.2" width="2" height="2"/><rect x="313.1" y="207.0" width="2" height="2"/><rect x="313.1" y="256.8" width="2" height="2"/><rect x="313.1" y="306.5" width="2" height="2"/><rect x="313.1" y="356.2" width="2" height="2"/><rect x="313.1" y="455.8" width="2" height="2"/><rect x="313.1" y="505.5" width="2" height="2"/><rect x="313.1" y="555.2" width="2" height="2"/><rect x="313.1" y="605.0" width="2" height="2"/><rect x="313.1" y="654.8" width="2" height="2"/><rect x="313.1" y="704.5" width="2" height="2"/><rect x="313.1" y="754.2" width="2" height="2"/><rect x="362.8" y="57.8" width="2" height="2"/><rect x="362.8" y="107.5" width="2" height="2"/><rect x="362.8" y="157.2" width="2" height="2"/><rect x="362.8" y="207.0" width="2" height="2"/><rect x="362.8" y="256.8" width="2" height="2"/><rect x="362.8" y="306.5" width="2" height="2"/><rect x="362.8" y="356.2" width="2" height="2"/><rect x="362.8" y="455.8" width="2" height="2"/><rect x="362.8" y="505.5" width="2" height="2"/><rect x="362.8" y="555.2" width="2" height="2"/><rect x="362.8" y="605.0" width="2" height="2"/><rect x="362.8" y="654.8" width="2" height="2"/><rect x="362.8" y="704.5" width="2" height="2"/><rect x="362.8" y="754.2" width="2" height="2"/><rect x="412.6" y="57.8" width="2" height="2"/><rect x="412.6" y="107.5" width="2" height="2"/><rect x="412.6" y="157.2" width="2" height="2"/><rect x="412.6" y="207.0" width="2" height="2"/><rect x="412.6" y="256.8" width="2" height="2"/><rect x="412.6" y="306.5" width="2" height="2"/><rect x="412.6" y="356.2" width="2" height="2"/><rect x="412.6" y="455.8" width="2" height="2"/><rect x="412.6" y="505.5" width="2" height="2"/><rect x="412.6" y="555.2" width="2" height="2"/><rect x="412.6" y="605.0" width="2" height="2"/><rect x="412.6" y="654.8" width="2" height="2"/><rect x="412.6" y="704.5" width="2" height="2"/><rect x="412.6" y="754.2" width="2" height="2"/><rect x="462.3" y="57.8" width="2" height="2"/><rect x="462.3" y="107.5" width="2" height="2"/><rect x="462.3" y="157.2" width="2" height="2"/><rect x="462.3" y="207.0" width="2" height="2"/><rect x="462.3" y="256.8" width="2" height="2"/><rect x="462.3" y="306.5" width="2" height="2"/><rect x="462.3" y="356.2" width="2" height="2"/><rect x="462.3" y="455.8" width="2" height="2"/><rect x="462.3" y="505.5" width="2" height="2"/><rect x="462.3" y="555.2" width="2" height="2"/><rect x="462.3" y="605.0" width="2" height="2"/><rect x="462.3" y="654.8" width="2" height="2"/><rect x="462.3" y="704.5" width="2" height="2"/><rect x="462.3" y="754.2" width="2" height="2"/><rect x="512.0" y="57.8" width="2" height="2"/><rect x="512.0" y="107.5" width="2" height="2"/><rect x="512.0" y="157.2" width="2" height="2"/><rect x="512.0" y="207.0" width="2" height="2"/><rect x="512.0" y="256.8" width="2" height="2"/><rect x="512.0" y="306.5" width="2" height="2"/><rect x="512.0" y="356.2" width="2" height="2"/><rect x="512.0" y="455.8" width="2" height="2"/><rect x="512.0" y="505.5" width="2" height="2"/><rect x="512.0" y="555.2" width="2" height="2"/><rect x="512.0" y="605.0" width="2" height="2"/><rect x="512.0" y="654.8" width="2" height="2"/><rect x="512.0" y="704.5" width="2" height="2"/><rect x="512.0" y="754.2" width="2" height="2"/><rect x="611.5" y="57.8" width="2" height="2"/><rect x="611.5" y="107.5" width="2" height="2"/><rect x="611.5" y="157.2" width="2" height="2"/><rect x="611.5" y="207.0" width="2" height="2"/><rect x="611.5" y="256.8" width="2" height="2"/><rect x="611.5" y="306.5" width="2" height="2"/><rect x="611.5" y="356.2" width="2" height="2"/><rect x="611.5" y="455.8" width="2" height="2"/><rect x="611.5" y="505.5" width="2" height="2"/><rect x="611.5" y="555.2" width="2" height="2"/><rect x="611.5" y="605.0" width="2" height="2"/><rect x="611.5" y="654.8" width="2" height="2"/><rect x="611.5" y="704.5" width="2" height="2"/><rect x="611.5" y="754.2" width="2" height="2"/><rect x="661.3" y="57.8" width="2" height="2"/><rect x="661.3" y="107.5" width="2" height="2"/><rect x="661.3" y="157.2" width="2" height="2"/><rect x="661.3" y="207.0" width="2" height="2"/><rect x="661.3" y="256.8" width="2" height="2"/><rect x="661.3" y="306.5" width="2" height="2"/><rect x="661.3" y="356.2" width="2" height="2"/><rect x="661.3" y="455.8" width="2" height="2"/><rect x="661.3" y="505.5" width="2" height="2"/><rect x="661.3" y="555.2" width="2" height="2"/><rect x="661.3" y="605.0" width="2" height="2"/><rect x="661.3" y="654.8" width="2" height="2"/><rect x="661.3" y="704.5" width="2" height="2"/><rect x="661.3" y="754.2" width="2" height="2"/><rect x="711.0" y="57.8" width="2" height="2"/><rect x="711.0" y="107.5" width="2" height="2"/><rect x="711.0" y="157.2" width="2" height="2"/><rect x="711.0" y="207.0" width="2" height="2"/><rect x="711.0" y="256.8" width="2" height="2"/><rect x="711.0" y="306.5" width="2" height="2"/><rect x="711.0" y="356.2" width="2" height="2"/><rect x="711.0" y="455.8" width="2" height="2"/><rect x="711.0" y="505.5" width="2" height="2"/><rect x="711.0" y="555.2" width="2" height="2"/><rect x="711.0" y="605.0" width="2" height="2"/><rect x="711.0" y="654.8" width="2" height="2"/><rect x="711.0" y="704.5" width="2" height="2"/><rect x="711.0" y="754.2" width="2" height="2"/><rect x="760.8" y="57.8" width="2" height="2"/><rect x="760.8" y="107.5" width="2" height="2"/><rect x="760.8" y="157.2" width="2" height="2"/><rect x="760.8" y="207.0" width="2" height="2"/><rect x="760.8" y="256.8" width="2" height="2"/><rect x="760.8" y="306.5" width="2" height="2"/><rect x="760.8" y="356.2" width="2" height="2"/><rect x="760.8" y="455.8" width="2" height="2"/><rect x="760.8" y="505.5" width="2" height="2"/><rect x="760.8" y="555.2" width="2" height="2"/><rect x="760.8" y="605.0" width="2" height="2"/><rect x="760.8" y="654.8" width="2" height="2"/><rect x="760.8" y="704.5" width="2" height="2"/><rect x="760.8" y="754.2" width="2" height="2"/><rect x="810.5" y="57.8" width="2" height="2"/><rect x="810.5" y="107.5" width="2" height="2"/><rect x="810.5" y="157.2" width="2" height="2"/><rect x="810.5" y="207.0" width="2" height="2"/><rect x="810.5" y="256.8" width="2" height="2"/><rect x="810.5" y="306.5" width="2" height="2"/><rect x="810.5" y="356.2" width="2" height="2"/><rect x="810.5" y="455.8" width="2" height="2"/><rect x="810.5" y="505.5" width="2" height="2"/><rect x="810.5" y="555.2" width="2" height="2"/><rect x="810.5" y="605.0" width="2" height="2"/><rect x="810.5" y="654.8" width="2" height="2"/><rect x="810.5" y="704.5" width="2" height="2"/><rect x="810.5" y="754.2" width="2" height="2"/><rect x="860.3" y="57.8" width="2" height="2"/><rect x="860.3" y="107.5" width="2" height="2"/><rect x="860.3" y="157.2" width="2" height="2"/><rect x="860.3" y="207.0" width="2" height="2"/><rect x="860.3" y="256.8" width="2" height="2"/><rect x="860.3" y="306.5" width="2" height="2"/><rect x="860.3" y="356.2" width="2" height="2"/><rect x="860.3" y="455.8" width="2" height="2"/><rect x="860.3" y="505.5" width="2" height="2"/><rect x="860.3" y="555.2" width="2" height="2"/><rect x="860.3" y="605.0" width="2" height="2"/><rect x="860.3" y="654.8" width="2" height="2"/><rect x="860.3" y="704.5" width="2" height="2"/><rect x="860.3" y="754.2" width="2" height="2"/><rect x="910.0" y="57.8" width="2" height="2"/><rect x="910.0" y="107.5" width="2" height="2"/><rect x="910.0" y="157.2" width="2" height="2"/><rect x="910.0" y="207.0" width="2" height="2"/><rect x="910.0" y="256.8" width="2" height="2"/><rect x="910.0" y="306.5" width="2" height="2"/><rect x="910.0" y="356.2" width="2" height="2"/><rect x="910.0" y="455.8" width="2" height="2"/><rect x="910.0" y="505.5" width="2" height="2"/><rect x="910.0" y="555.2" width="2" height="2"/><rect x="910.0" y="605.0" width="2" height="2"/><rect x="910.0" y="654.8" width="2" height="2"/><rect x="910.0" y="704.5" width="2" height="2"/><rect x="910.0" y="754.2" width="2" height="2"/></g><path d="M164.8 407.0h796.0" stroke="#8a8a8a" stroke-width="1.500" stroke-dasharray="37 13.600"/><path d="M562.8 11.0L569.8 26.0L578.3 43.0L586.8 62.0L593.8 79.0L599.8 99.0L604.4 119.0L608.3 138.0L611.6 157.0L613.8 172.0L615.6 187.0L617.0 202.0L617.8 215.0L618.1 229.0L618.1 803.0 M562.8 11.0L555.8 26.0L547.3 43.0L538.8 62.0L531.8 79.0L525.8 99.0L521.2 119.0L517.3 138.0L514.0 157.0L511.8 172.0L510.0 187.0L508.6 202.0L507.8 215.0L507.5 229.0L507.5 803.0 M562.8 11.0L567.7 26.0L573.8 43.0L579.8 62.0L584.7 79.0L589.0 99.0L592.2 119.0L595.0 138.0L597.3 157.0L598.9 172.0L600.1 187.0L601.1 202.0L601.7 215.0L601.9 229.0L601.9 803.0 M562.8 11.0L557.9 26.0L551.8 43.0L545.8 62.0L540.9 79.0L536.6 99.0L533.4 119.0L530.6 138.0L528.3 157.0L526.7 172.0L525.5 187.0L524.5 202.0L523.9 215.0L523.7 229.0L523.7 803.0 M562.8 11.0L562.8 26.0L562.8 43.0L562.8 62.0L562.8 79.0L562.8 99.0L562.8 119.0L562.8 138.0L562.8 157.0L562.8 172.0L562.8 187.0L562.8 202.0L562.8 215.0L562.8 229.0L562.8 803.0 M621.8 803.5L620.9 803.5L618.2 803.5L613.9 803.5L608.0 803.5L600.7 803.5L592.3 803.5L583.0 803.5L573.0 803.5L562.8 803.5L552.6 803.5L542.6 803.5L533.3 803.5L524.9 803.5L517.6 803.5L511.7 803.5L507.4 803.5L504.7 803.5L503.8 803.5L504.7 803.5L507.4 803.5L511.7 803.5L517.6 803.5L524.9 803.5L533.3 803.5L542.6 803.5L552.6 803.5L562.8 803.5L573.0 803.5L583.0 803.5L592.3 803.5L600.7 803.5L608.0 803.5L613.9 803.5L618.2 803.5L620.9 803.5L621.8 803.5 M618.1 307.0L639.1 347.5L699.1 446.8 M618.1 384.1L686.9 463.9 M618.1 543.3L680.6 553.8 M618.1 595.2L680.6 570.9 M618.1 723.5L686.9 753.5L686.9 790.5 M507.5 307.0L486.5 347.5L426.5 446.8 M507.5 384.1L438.7 463.9 M507.5 543.3L445.0 553.8 M507.5 595.2L445.0 570.9 M507.5 723.5L438.7 753.5L438.7 790.5 M438.7 790.5L686.9 790.5 M699.1 446.8L704.1 455.0L709.1 465.0L713.6 476.0L716.6 488.0L717.6 500.0L717.6 567.0L714.1 577.0L707.1 584.0L699.1 589.0 M699.1 446.8L694.1 455.0L689.1 465.0L684.6 476.0L681.6 488.0L680.6 500.0L680.6 567.0L684.1 577.0L691.1 584.0L699.1 589.0 M699.1 446.8L701.9 455.0L704.7 465.0L707.2 476.0L708.9 488.0L709.4 500.0L709.4 567.0L707.5 577.0L703.6 584.0L699.1 589.0 M699.1 446.8L696.3 455.0L693.5 465.0L691.0 476.0L689.3 488.0L688.8 500.0L688.8 567.0L690.7 577.0L694.6 584.0L699.1 589.0 M426.5 446.8L431.5 455.0L436.5 465.0L441.0 476.0L444.0 488.0L445.0 500.0L445.0 567.0L441.5 577.0L434.5 584.0L426.5 589.0 M426.5 446.8L421.5 455.0L416.5 465.0L412.0 476.0L409.0 488.0L408.0 500.0L408.0 567.0L411.5 577.0L418.5 584.0L426.5 589.0 M426.5 446.8L429.3 455.0L432.1 465.0L434.6 476.0L436.3 488.0L436.8 500.0L436.8 567.0L434.9 577.0L431.0 584.0L426.5 589.0 M426.5 446.8L423.7 455.0L420.9 465.0L418.4 476.0L416.7 488.0L416.2 500.0L416.2 567.0L418.1 577.0L422.0 584.0L426.5 589.0 M562.8 307.0L562.8 347.5L562.8 446.8 M562.8 384.1L562.8 463.9 M562.8 543.3L562.8 553.8 M562.8 595.2L562.8 570.9 M562.8 723.5L562.8 753.5L562.8 790.5 M562.8 790.5L562.8 790.5 M562.8 446.8L562.8 455.0L562.8 465.0L562.8 476.0L562.8 488.0L562.8 500.0L562.8 567.0L562.8 577.0L562.8 584.0L562.8 589.0 M562.8 446.8L566.9 455.0L571.1 465.0L574.8 476.0L577.3 488.0L578.1 500.0L578.1 567.0L575.2 577.0L569.4 584.0L562.8 589.0 M562.8 446.8L558.7 455.0L554.5 465.0L550.8 476.0L548.3 488.0L547.5 500.0L547.5 567.0L550.4 577.0L556.2 584.0L562.8 589.0" fill="none" stroke="#ff6a10" stroke-width="2.1" stroke-linejoin="round"/><rect x="432.79999999999995" y="776" width="260" height="27" fill="#000"/><path d="M503.79999999999995 803.5h118" stroke="#ff6a10" stroke-width="2"/><path d="M557.8 806.0l5 4l5-4" stroke="#ddd" stroke-width="1.300" fill="none"/><text x="203.500" y="796.800" font-size="21.500" fill="#f4f4f4" font-family="Liberation Sans, sans-serif" xml:space="preserve" textLength="714.300" lengthAdjust="spacingAndGlyphs">Points/Vectors: 750   Hardware Points: 1259   Time: 0.041967   FPS: 23.53</text><rect x="1019.5999999999999" y="76.2" width="31" height="31" fill="#181890"/><path d="M1034.6 26.2L1034.6 61.2" stroke="#00e000" stroke-width="1.500"/><path d="M1034.6 61.2L1028.6 42.2L1040.6 42.2z" fill="#00e000"/><path d="M1034.6 158.2L1034.6 124.2" stroke="#109010" stroke-width="1.500"/><path d="M1034.6 124.2L1040.6 143.2L1028.6 143.2z" fill="#109010"/><path d="M969.6 92.2L1001.6 92.2" stroke="#b01010" stroke-width="1.500"/><path d="M1001.6 92.2L982.6 98.2L982.6 86.2z" fill="#b01010"/><path d="M1099.6 92.2L1067.6 92.2" stroke="#ff1010" stroke-width="1.500"/><path d="M1067.6 92.2L1086.6 86.2L1086.6 98.2z" fill="#ff1010"/><text x="1033.6" y="208.5" font-size="21.500" fill="#1478ec" stroke="#1478ec" stroke-width="0.450" text-anchor="middle" font-family="Liberation Sans, sans-serif">Front</text><path d="M56.6 759v-37.500" stroke="#00d000" stroke-width="2"/><path d="M56.6 759h39" stroke="#e00000" stroke-width="2"/><text x="60" y="716.9" fill="#00e000" font-family="Liberation Sans, sans-serif" font-size="22.500" font-weight="bold">Y</text><text x="60.5" y="756" fill="#2a20f0" font-family="Liberation Sans, sans-serif" font-size="22.500" font-weight="bold">Z</text><text x="101" y="756" fill="#f00000" font-family="Liberation Sans, sans-serif" font-size="22.500" font-weight="bold">X</text><path d="M1093.2 717.5v81.5M1027.2 782.5h81.500" stroke="#1478f0" stroke-width="1.700" stroke-dasharray="19 1.500"/></svg>
<div style="left:1376.2px;top:1105.0px;width:1124.2px;height:813.7px;border:6px solid #4a6598;"></div>
<div style="left:212.0px;top:1956.8px;width:2326.0px;height:2.0px;background:#a8a8a8;"></div>
<div style="left:2536.0px;top:156.0px;width:2.0px;height:1802.8px;background:#a8a8a8;"></div>
<div style="left:3168.0px;top:157.0px;width:57.0px;height:92.0px;background:#262626;border:1px solid #3e3e3e;border-left:none;border-radius:0 8px 8px 0;"></div>
<div style="left:3172.0px;top:251.0px;width:50.0px;height:84.0px;background:#2c2c2c;border:1.500px solid #3c3c3c;border-left:none;border-radius:0 8px 8px 0;"></div>
<div style="left:3172.0px;top:338.0px;width:50.0px;height:84.0px;background:#2c2c2c;border:1.500px solid #3c3c3c;border-left:none;border-radius:0 8px 8px 0;"></div>
<div style="left:3172.0px;top:425.0px;width:50.0px;height:84.0px;background:#2c2c2c;border:1.500px solid #3c3c3c;border-left:none;border-radius:0 8px 8px 0;"></div>
<svg style="left:3180.0px;top:188.0px;" width="34" height="34" viewBox="0 0 34 34"><path d="M3 31L31 3" stroke="#2a9ae0" stroke-width="2.500"/><circle cx="17" cy="17" r="5" fill="#fff" stroke="#2a9ae0" stroke-width="2"/></svg>
<svg style="left:3184.0px;top:278.0px;" width="32" height="36" viewBox="0 0 32 36"><rect x="2" y="10" width="24" height="24" fill="#f4f4f4" stroke="#999"/><path d="M5 17h3M5 22h3M5 27h3" stroke="#d03030" stroke-width="2"/><path d="M11 17h12M11 22h12M11 27h12" stroke="#aaa" stroke-width="1.500"/><path d="M8 8l12-6l10 3l-6 9l-10 2z" fill="#e89a50" stroke="#a86020"/></svg>
<svg style="left:3182.0px;top:369.0px;" width="36" height="36" viewBox="0 0 36 36"><g transform="rotate(-35 18 18)"><rect x="4" y="9" width="28" height="6" fill="#20b4f0"/><rect x="4" y="15" width="28" height="6" fill="#f020f0"/><rect x="4" y="21" width="28" height="6" fill="#20e840"/></g></svg>
<svg style="left:3183.0px;top:456.0px;" width="36" height="32" viewBox="0 0 36 32"><rect x="1" y="3.5" width="32" height="3.900" fill="#18e818"/><rect x="1" y="11.4" width="32" height="3.900" fill="#18e818"/><rect x="1" y="19.8" width="32" height="3.900" fill="#18e818"/><rect x="1" y="27.7" width="32" height="3.900" fill="#18e818"/></svg>
<div style="left:2548.0px;top:163.0px;width:621.0px;height:43.5px;background:linear-gradient(90deg,rgba(40,40,40,0) 0%,rgba(40,40,40,.5) 55%,rgba(36,36,36,.95) 100%),linear-gradient(180deg,#686868 0%,#4a4a4a 40%,#2a2a2a 100%);border-top:1px solid #6a6a6a;"></div>
<div class="t" style="left:2768.5px;top:172.5px;font-size:24px;color:#f4f4f4;transform-origin:0 0;transform:scaleX(0.9684);font-weight:bold;">Point properties</div>
<div class="b" style="left:2554.0px;top:213.8px;width:58.5px;height:44.5px;"></div>
<svg style="left:2565.0px;top:218.0px;" width="36" height="36" viewBox="0 0 36 36"><path d="M14 3h8v11h11v8H22v11h-8V22H3v-8h11z" fill="#ff8c10"/><path d="M15 4h6v11h11v3H15z" fill="#ffb850" opacity=".8"/></svg>
<div class="b" style="left:2614.0px;top:213.8px;width:59.0px;height:44.5px;"></div>
<svg style="left:2625.0px;top:217.0px;" width="38" height="38" viewBox="0 0 38 38"><path d="M5 6c8 6 16 14 24 26" stroke="#e80000" stroke-width="5" stroke-linecap="round" fill="none"/><path d="M33 4c-10 6-19 16-24 29" stroke="#f01010" stroke-width="4.500" stroke-linecap="round" fill="none"/></svg>
<div class="b" style="left:2686.0px;top:213.8px;width:59.5px;height:44.5px;"></div>
<svg style="left:2702.0px;top:220.0px;" width="28" height="32" viewBox="0 0 28 32"><path d="M26 2v28L2 16z" fill="#9cc8e0"/><path d="M26 2v14H2z" fill="#c8e4f4"/></svg>
<div class="t" style="left:2776.8px;top:222.0px;font-size:23.5px;color:#f0f0f0;transform-origin:0 0;transform:scaleX(0.9129);">Point 1 of 750</div>
<div class="b" style="left:2940.0px;top:213.8px;width:59.7px;height:44.5px;"></div>
<svg style="left:2956.0px;top:220.0px;" width="28" height="32" viewBox="0 0 28 32"><path d="M2 2v28L26 16z" fill="#5ab0dc"/><path d="M2 2v14h24z" fill="#9cd4f0"/></svg>
<div class="b hl" style="left:3011.5px;top:213.8px;width:60.5px;height:44.5px;"></div>
<svg style="left:3022.0px;top:217.0px;" width="40" height="38" viewBox="0 0 40 38"><path d="M20 4v30M4 19h32" stroke="#f0d8a0" stroke-width="1.300"/><circle cx="20" cy="19" r="5.500" fill="#ffe020"/></svg>
<div class="b" style="left:3076.0px;top:213.8px;width:59.8px;height:44.5px;"></div>
<svg style="left:3088.0px;top:221.0px;" width="36" height="32" viewBox="0 0 36 32"><rect x="1" y="24" width="6" height="6" fill="#ffe020"/><rect x="9" y="17" width="6" height="6" fill="#ffe020"/><rect x="17" y="10" width="6" height="6" fill="#ffe020"/><rect x="26" y="3" width="6" height="6" fill="#ffe020"/></svg>
<div style="left:3149.5px;top:264.5px;width:21.0px;height:1871.0px;background:#4a6598;"></div>
<div class="sec" style="left:2552.5px;top:265.0px;width:593.5px;height:34.0px;"></div>
<svg style="left:2561.5px;top:274.0px;" width="18" height="12" viewBox="0 0 18 12"><path d="M0 0h18L9 11z" fill="#a8e8c0"/></svg>
<div class="t" style="left:2585.5px;top:269.0px;font-size:23px;color:#f0f0f0;transform-origin:0 0;transform:scaleX(0.8966);">Coordinates</div>
<div class="secbody" style="left:2553.5px;top:299.0px;width:590.5px;height:280.0px;"></div>
<div class="t" style="left:2567.0px;top:308.2px;font-size:23px;color:#e8e8e8;">X</div>
<div class="inp" style="left:3002.0px;top:303.7px;width:124.6px;height:38.0px;"></div>
<div class="t" style="left:3006.0px;top:307.2px;font-size:23px;color:#f0f0f0;">-4</div>
<svg style="left:3100.0px;top:306.7px;" width="26" height="32" viewBox="0 0 26 32"><path d="M8 10.6l5-6l5 6z" fill="#ddd"/><path d="M0 16.0h26" stroke="#aaa" stroke-width="2.500"/><path d="M8 22.8l5 6l5-6z" fill="#ddd"/></svg>
<div class="t" style="left:2567.0px;top:354.0px;font-size:23px;color:#e8e8e8;">Y</div>
<div class="inp" style="left:3002.0px;top:349.5px;width:124.6px;height:38.0px;"></div>
<div class="t" style="left:3006.0px;top:353.0px;font-size:23px;color:#f0f0f0;transform-origin:0 0;transform:scaleX(0.8890);">-7977</div>
<svg style="left:3100.0px;top:352.5px;" width="26" height="32" viewBox="0 0 26 32"><path d="M8 10.6l5-6l5 6z" fill="#ddd"/><path d="M0 16.0h26" stroke="#aaa" stroke-width="2.500"/><path d="M8 22.8l5 6l5-6z" fill="#ddd"/></svg>
<div class="t" style="left:2567.0px;top:398.1px;font-size:23px;color:#e8e8e8;">Z</div>
<div class="inp" style="left:3002.0px;top:393.6px;width:124.6px;height:38.0px;"></div>
<div class="t" style="left:3006.0px;top:397.1px;font-size:23px;color:#f0f0f0;">0</div>
<svg style="left:3100.0px;top:396.6px;" width="26" height="32" viewBox="0 0 26 32"><path d="M8 10.6l5-6l5 6z" fill="#ddd"/><path d="M0 16.0h26" stroke="#aaa" stroke-width="2.500"/><path d="M8 22.8l5 6l5-6z" fill="#ddd"/></svg>
<div class="t" style="left:2567.0px;top:445.5px;font-size:23px;color:#e8e8e8;transform-origin:0 0;transform:scaleX(0.9359);">Repeat counter</div>
<div class="inp" style="left:3002.0px;top:441.0px;width:124.6px;height:38.0px;"></div>
<div class="t" style="left:3006.0px;top:444.5px;font-size:23px;color:#f0f0f0;">0</div>
<svg style="left:3100.0px;top:444.0px;" width="26" height="32" viewBox="0 0 26 32"><path d="M8 10.6l5-6l5 6z" fill="#ddd"/><path d="M0 16.0h26" stroke="#aaa" stroke-width="2.500"/><path d="M8 22.8l5 6l5-6z" fill="#ddd"/></svg>
<div class="t" style="left:2567.0px;top:492.9px;font-size:23px;color:#7a7a7a;transform-origin:0 0;transform:scaleX(0.9495);">Point "on line"</div>
<div class="inp" style="left:3002.0px;top:488.4px;width:124.6px;height:38.0px;"></div>
<div class="t" style="left:3006.0px;top:491.9px;font-size:23px;color:#f0f0f0;">0</div>
<svg style="left:3100.0px;top:491.4px;" width="26" height="32" viewBox="0 0 26 32"><path d="M8 10.6l5-6l5 6z" fill="#ddd"/><path d="M0 16.0h26" stroke="#aaa" stroke-width="2.500"/><path d="M8 22.8l5 6l5-6z" fill="#ddd"/></svg>
<div class="t" style="left:2567.0px;top:538.7px;font-size:23px;color:#e8e8e8;transform-origin:0 0;transform:scaleX(0.8992);">Beam Brush</div>
<div class="inp" style="left:3002.0px;top:534.2px;width:124.6px;height:38.0px;"></div>
<div class="t" style="left:3006.0px;top:537.7px;font-size:23px;color:#f0f0f0;">0</div>
<svg style="left:3100.0px;top:537.2px;" width="26" height="32" viewBox="0 0 26 32"><path d="M8 10.6l5-6l5 6z" fill="#ddd"/><path d="M0 16.0h26" stroke="#aaa" stroke-width="2.500"/><path d="M8 22.8l5 6l5-6z" fill="#ddd"/></svg>
<div class="sec" style="left:2552.5px;top:587.5px;width:593.5px;height:33.5px;"></div>
<svg style="left:2561.5px;top:596.5px;" width="18" height="12" viewBox="0 0 18 12"><path d="M0 0h18L9 11z" fill="#a8e8c0"/></svg>
<div class="t" style="left:2585.5px;top:591.5px;font-size:23px;color:#f0f0f0;transform-origin:0 0;transform:scaleX(0.8624);">Color</div>
<div class="secbody" style="left:2553.5px;top:621.0px;width:590.5px;height:235.0px;"></div>
<div style="left:2573.0px;top:635.0px;width:28.0px;height:28.0px;border-radius:50%;background:radial-gradient(circle at 50% 35%,#4a4a4a 0%,#333 60%,#222 100%);border:2px solid #1e1e1e;"></div>
<div class="t" style="left:2610.0px;top:635.0px;font-size:23px;color:#6e6e6e;transform-origin:0 0;transform:scaleX(0.9126);">Visible point</div>
<div style="left:3004.0px;top:628.7px;width:127.0px;height:38.6px;background:#1b1b1b;border-bottom:1.500px solid #4a4a4a;border-right:1.500px solid #4a4a4a;"></div>
<div style="left:2574.7px;top:675.8px;width:28.0px;height:28.0px;border-radius:50%;background:radial-gradient(circle at 50% 65%,#b0ff30 0%,#50c010 45%,#1a5a08 80%,#0c1c08 100%);border:2px solid #1e1e1e;"></div>
<div class="t" style="left:2615.0px;top:676.0px;font-size:23px;color:#f4f4f4;transform-origin:0 0;transform:scaleX(0.9312);">Blanked point</div>
<div style="left:2573.0px;top:735.0px;width:28.0px;height:28.0px;border-radius:50%;background:radial-gradient(circle at 50% 35%,#4a4a4a 0%,#333 60%,#222 100%);border:2px solid #1e1e1e;"></div>
<div class="t" style="left:2611.0px;top:735.5px;font-size:23px;color:#6e6e6e;transform-origin:0 0;transform:scaleX(0.9099);">Starting color</div>
<div style="left:3004.0px;top:733.3px;width:127.0px;height:38.6px;background:#1b1b1b;border-bottom:1.500px solid #4a4a4a;border-right:1.500px solid #4a4a4a;"></div>
<div style="left:2574.7px;top:775.0px;width:28.0px;height:28.0px;border-radius:50%;background:radial-gradient(circle at 50% 65%,#6a9a2a 0%,#3e6a1a 50%,#203010 85%,#1c241c 100%);border:2px solid #1e1e1e;"></div>
<div class="t" style="left:2615.0px;top:775.5px;font-size:23px;color:#6e6e6e;transform-origin:0 0;transform:scaleX(0.9188);">Starting color as ending color</div>
<div style="left:2573.0px;top:815.0px;width:28.0px;height:28.0px;border-radius:50%;background:radial-gradient(circle at 50% 35%,#4a4a4a 0%,#333 60%,#222 100%);border:2px solid #1e1e1e;"></div>
<div class="t" style="left:2611.0px;top:815.5px;font-size:23px;color:#6e6e6e;transform-origin:0 0;transform:scaleX(0.9132);">Starting color as previous</div>
<div class="sec" style="left:2552.5px;top:864.0px;width:593.5px;height:33.0px;"></div>
<svg style="left:2561.5px;top:873.0px;" width="18" height="12" viewBox="0 0 18 12"><path d="M0 0h18L9 11z" fill="#a8e8c0"/></svg>
<div class="t" style="left:2585.5px;top:868.0px;font-size:23px;color:#f0f0f0;transform-origin:0 0;transform:scaleX(0.9072);">Fading</div>
<div class="secbody" style="left:2553.5px;top:897.0px;width:590.5px;height:140.5px;"></div>
<div class="t" style="left:2567.0px;top:909.5px;font-size:23px;color:#e8e8e8;transform-origin:0 0;transform:scaleX(0.9118);">Fade backward(%)</div>
<div class="inp" style="left:3002.0px;top:904.5px;width:124.6px;height:38.0px;"></div>
<div class="t" style="left:3006.0px;top:908.0px;font-size:23px;color:#f0f0f0;">0</div>
<svg style="left:3100.0px;top:907.5px;" width="26" height="32" viewBox="0 0 26 32"><path d="M8 10.6l5-6l5 6z" fill="#ddd"/><path d="M0 16.0h26" stroke="#aaa" stroke-width="2.500"/><path d="M8 22.8l5 6l5-6z" fill="#ddd"/></svg>
<div class="t" style="left:2567.0px;top:953.5px;font-size:23px;color:#e8e8e8;transform-origin:0 0;transform:scaleX(0.8893);">Fade forward (%)</div>
<div class="inp" style="left:3002.0px;top:948.5px;width:124.6px;height:38.0px;"></div>
<div class="t" style="left:3006.0px;top:952.0px;font-size:23px;color:#f0f0f0;">0</div>
<svg style="left:3100.0px;top:951.5px;" width="26" height="32" viewBox="0 0 26 32"><path d="M8 10.6l5-6l5 6z" fill="#ddd"/><path d="M0 16.0h26" stroke="#aaa" stroke-width="2.500"/><path d="M8 22.8l5 6l5-6z" fill="#ddd"/></svg>
<div class="t" style="left:2567.0px;top:997.8px;font-size:23px;color:#e8e8e8;transform-origin:0 0;transform:scaleX(0.8982);">Fading Depth (%)</div>
<div class="inp" style="left:3002.0px;top:992.8px;width:124.6px;height:38.0px;"></div>
<div class="t" style="left:3006.0px;top:996.3px;font-size:23px;color:#f0f0f0;transform-origin:0 0;transform:scaleX(0.8951);">80</div>
<svg style="left:3100.0px;top:995.8px;" width="26" height="32" viewBox="0 0 26 32"><path d="M8 10.6l5-6l5 6z" fill="#ddd"/><path d="M0 16.0h26" stroke="#aaa" stroke-width="2.500"/><path d="M8 22.8l5 6l5-6z" fill="#ddd"/></svg>
<div class="sec" style="left:2552.5px;top:1045.5px;width:593.5px;height:33.5px;"></div>
<svg style="left:2561.5px;top:1054.5px;" width="18" height="12" viewBox="0 0 18 12"><path d="M0 0h18L9 11z" fill="#a8e8c0"/></svg>
<div class="t" style="left:2585.5px;top:1049.5px;font-size:23px;color:#f0f0f0;transform-origin:0 0;transform:scaleX(0.9170);">Point type</div>
<div class="secbody" style="left:2553.5px;top:1079.0px;width:590.5px;height:246.5px;"></div>
<div class="t" style="left:2568.5px;top:1093.5px;font-size:23px;color:#f0f0f0;transform-origin:0 0;transform:scaleX(0.9134);">Point kind:</div>
<div class="t" style="left:2793.0px;top:1093.5px;font-size:23px;color:#f0f0f0;transform-origin:0 0;transform:scaleX(0.9051);">Spline Handle Order:</div>
<div class="b hl" style="left:2570.7px;top:1127.4px;width:193.0px;height:41.0px;"></div>
<div class="t" style="left:2657.4px;top:1133.9px;font-size:23px;color:#fff;transform-origin:0 0;transform:scaleX(0.8984);">Point</div>
<svg style="left:2593.0px;top:1133.4px;" width="32" height="30" viewBox="0 0 32 30"><path d="M2 27L29 3" stroke="#2a9ae0" stroke-width="2.500"/><rect x="14" y="12" width="4" height="4" fill="#d8f0ff"/></svg>
<div class="b" style="left:2570.7px;top:1175.6px;width:193.0px;height:41.0px;"></div>
<div class="t" style="left:2647.8px;top:1182.1px;font-size:23px;color:#eee;transform-origin:0 0;transform:scaleX(0.9570);">Vector</div>
<svg style="left:2591.0px;top:1180.6px;" width="32" height="32" viewBox="0 0 32 32"><path d="M3 27L27 3" stroke="#2a9ae0" stroke-width="2.200"/><rect x="0" y="25" width="6" height="6" fill="#e8f4ff"/><rect x="25" y="0" width="5" height="5" fill="#e8f4ff"/></svg>
<div class="b" style="left:2570.7px;top:1223.7px;width:193.0px;height:41.0px;"></div>
<div class="t" style="left:2623.0px;top:1230.2px;font-size:23px;color:#eee;transform-origin:0 0;transform:scaleX(0.9163);">Spline Quad</div>
<svg style="left:2591.0px;top:1228.7px;" width="32" height="32" viewBox="0 0 32 32"><path d="M4 28V18c0-8 5-13 14-13h8" stroke="#e8f4ff" stroke-width="1.500" fill="none"/><path d="M5 24c0-10 5-16 16-17" stroke="#7ac8f0" stroke-width="3" fill="none"/><rect x="0" y="25" width="6" height="6" fill="#bfe4fa"/><rect x="23" y="1" width="6" height="6" fill="#bfe4fa"/></svg>
<div class="b" style="left:2570.7px;top:1271.9px;width:193.0px;height:41.0px;"></div>
<div class="t" style="left:2623.0px;top:1278.4px;font-size:23px;color:#eee;transform-origin:0 0;transform:scaleX(0.9081);">Spline Cube</div>
<svg style="left:2591.0px;top:1276.9px;" width="32" height="32" viewBox="0 0 32 32"><path d="M4 28V18c0-8 5-13 14-13h8" stroke="#e8f4ff" stroke-width="1.500" fill="none"/><path d="M5 24c0-10 5-16 16-17" stroke="#7ac8f0" stroke-width="3" fill="none"/><rect x="0" y="25" width="6" height="6" fill="#bfe4fa"/><rect x="23" y="1" width="6" height="6" fill="#bfe4fa"/></svg>
<div style="left:2794.0px;top:1131.7px;width:193.4px;height:41.0px;background:#4e6a76;border:1px solid #5a7884;"></div>
<div class="t" style="left:2865.7px;top:1138.7px;font-size:23px;color:#8a9aa2;transform-origin:0 0;transform:scaleX(0.9402);">None</div>
<div style="left:2794.0px;top:1178.5px;width:193.4px;height:41.0px;border:2px solid #444;border-radius:3px;background:#2e2e2e;box-shadow:1px 1px 0 0 #262626;"></div>
<div class="t" style="left:2885.1px;top:1185.5px;font-size:23px;color:#6e6e6e;">0</div>
<div style="left:2794.0px;top:1225.5px;width:193.4px;height:41.0px;border:2px solid #444;border-radius:3px;background:#2e2e2e;box-shadow:1px 1px 0 0 #262626;"></div>
<div class="t" style="left:2850.1px;top:1232.5px;font-size:23px;color:#6e6e6e;transform-origin:0 0;transform:scaleX(0.9122);">1st order</div>
<div style="left:2794.0px;top:1272.0px;width:193.4px;height:41.0px;border:2px solid #444;border-radius:3px;background:#2e2e2e;box-shadow:1px 1px 0 0 #262626;"></div>
<div class="t" style="left:2846.9px;top:1279.0px;font-size:23px;color:#6e6e6e;transform-origin:0 0;transform:scaleX(0.9059);">2nd order</div>
<div class="sec" style="left:2552.5px;top:1334.5px;width:593.5px;height:32.5px;"></div>
<svg style="left:2561.5px;top:1343.5px;" width="18" height="12" viewBox="0 0 18 12"><path d="M0 0h18L9 11z" fill="#a8e8c0"/></svg>
<div class="t" style="left:2585.5px;top:1338.5px;font-size:23px;color:#f0f0f0;transform-origin:0 0;transform:scaleX(0.9274);">Real time vector to point conversion options</div>
<div class="secbody" style="left:2553.5px;top:1367.0px;width:590.5px;height:245.5px;"></div>
<div style="left:2571.5px;top:1384.6px;width:30.5px;height:30.0px;background:radial-gradient(ellipse 70% 75% at 50% 30%,#3f9a2c 0%,#245a1c 45%,#0c180c 100%);border:1.500px solid #0a0a0a;"></div>
<div class="t" style="left:2610.0px;top:1386.1px;font-size:23px;color:#ececec;transform-origin:0 0;transform:scaleX(0.9319);">Vector (vector oriented flag)</div>
<div style="left:2571.5px;top:1430.6px;width:30.5px;height:30.0px;background:radial-gradient(ellipse 70% 75% at 50% 30%,#3f9a2c 0%,#245a1c 45%,#0c180c 100%);border:1.500px solid #0a0a0a;"></div>
<div class="t" style="left:2610.0px;top:1432.1px;font-size:23px;color:#ececec;transform-origin:0 0;transform:scaleX(0.9150);">Beam (Repeat Count * 10)</div>
<div style="left:2571.5px;top:1476.3px;width:30.5px;height:30.0px;background:radial-gradient(ellipse 70% 75% at 50% 30%,#3f9a2c 0%,#245a1c 45%,#0c180c 100%);border:1.500px solid #0a0a0a;"></div>
<div class="t" style="left:2610.0px;top:1477.8px;font-size:23px;color:#ececec;transform-origin:0 0;transform:scaleX(0.9283);">Soft anchor (vector only)</div>
<div style="left:2571.5px;top:1522.7px;width:30.5px;height:30.0px;background:radial-gradient(ellipse 70% 75% at 50% 30%,#3f9a2c 0%,#245a1c 45%,#0c180c 100%);border:1.500px solid #0a0a0a;"></div>
<div class="t" style="left:2610.0px;top:1524.2px;font-size:23px;color:#ececec;transform-origin:0 0;transform:scaleX(0.9282);">Do not add anchors (vectors only)</div>
<div style="left:2571.5px;top:1566.6px;width:30.5px;height:30.0px;background:radial-gradient(ellipse 70% 75% at 50% 30%,#3f9a2c 0%,#245a1c 45%,#0c180c 100%);border:1.500px solid #0a0a0a;"></div>
<div class="t" style="left:2610.0px;top:1568.1px;font-size:23px;color:#ececec;transform-origin:0 0;transform:scaleX(0.9182);">Enable gradient (vector only)</div>
<div style="left:2541.5px;top:156.0px;width:629.5px;height:1984.0px;border-left:2.500px solid #262626;border-bottom:2.500px solid #262626;border-radius:0 0 10px 10px;pointer-events:none;"></div>
<div style="left:3149.5px;top:2100.0px;width:21.0px;height:35.5px;background:#4a6598;"></div>
<div style="left:218.0px;top:1970.0px;width:2.0px;height:59.0px;background:#222;"></div>
<div class="t" style="left:274.0px;top:1970.0px;font-size:46px;color:#a8c4dc;transform-origin:0 0;transform:scaleX(0.6645);">1</div>
<div style="left:360.0px;top:1999.5px;width:2028.0px;height:2.0px;background:#7c7c7c;"></div>
<div style="left:360.0px;top:2029.5px;width:2028.0px;height:2.0px;background:#7c7c7c;"></div>
<div style="left:360.0px;top:2071.5px;width:2028.0px;height:2.0px;background:#7c7c7c;"></div>
<div style="left:360.0px;top:2101.0px;width:2028.0px;height:2.0px;background:#7c7c7c;"></div>
<div style="left:376.5px;top:2002.0px;width:2011.0px;height:26.5px;background:#00c200;"></div>
<div style="left:375.5px;top:2001.5px;width:2.0px;height:27.0px;background:#111;"></div>
<svg style="left:240.0px;top:2037.0px;" width="26" height="27" viewBox="0 0 26 27"><path d="M25 1v25L1 13.500z" fill="#9cc8e0"/><path d="M25 1v12.500H1z" fill="#c8e4f4"/></svg>
<svg style="left:303.5px;top:2037.0px;" width="26" height="27" viewBox="0 0 26 27"><path d="M1 1v25l24-12.500z" fill="#5ab0dc"/><path d="M1 1v12.500h24z" fill="#9cd4f0"/></svg>
<svg style="left:240.0px;top:2089.0px;" width="28" height="28" viewBox="0 0 28 28"><path d="M1 14L14 1v6.500h13v13H14v6.500z" fill="#9a9a9a"/><path d="M3.500 13L13 3.500v5h12v4.500z" fill="#b8b8b8"/></svg>
<svg style="left:303.0px;top:2089.0px;" width="28" height="28" viewBox="0 0 28 28"><path d="M27 14L14 1v6.500H1v13h13v6.500z" fill="#767676"/><path d="M24.500 13L15 3.500v5H3v4.500z" fill="#949494"/></svg>
<div style="left:376.0px;top:2030.0px;width:1.5px;height:42.0px;background:#999;"></div>
<div style="left:368.0px;top:2041.0px;width:18.0px;height:22.5px;background:#000;border:2px solid #d8d8d8;border-radius:2px;"></div>
<div class="t" style="left:405.5px;top:2039.0px;font-size:22.5px;color:#ececec;transform-origin:0 0;transform:scaleX(1.0113);">Point #1</div>
<div style="left:376.5px;top:2074.0px;width:1499.0px;height:25.5px;background:#000;"></div>
<div style="left:381.4px;top:2074.0px;width:38.5px;height:25.5px;background:#ff6600;"></div>
<div style="left:422.0px;top:2074.0px;width:36.0px;height:25.5px;background:#ff6600;"></div>
<div style="left:460.1px;top:2074.0px;width:33.7px;height:25.5px;background:#ff6600;"></div>
<div style="left:496.4px;top:2074.0px;width:35.2px;height:25.5px;background:#ff6600;"></div>
<div style="left:534.1px;top:2074.0px;width:34.8px;height:25.5px;background:#ff6600;"></div>
<div style="left:570.8px;top:2074.0px;width:35.5px;height:25.5px;background:#ff6600;"></div>
<div style="left:608.5px;top:2074.0px;width:35.5px;height:25.5px;background:#ff6600;"></div>
<div style="left:646.6px;top:2074.0px;width:37.7px;height:25.5px;background:#ff6600;"></div>
<div style="left:696.0px;top:2074.0px;width:37.8px;height:25.5px;background:#ff6600;"></div>
<div style="left:745.9px;top:2074.0px;width:26.3px;height:25.5px;background:#ff6600;"></div>
<div style="left:783.9px;top:2074.0px;width:26.1px;height:25.5px;background:#ff6600;"></div>
<div style="left:821.7px;top:2074.0px;width:26.7px;height:25.5px;background:#ff6600;"></div>
<div style="left:860.1px;top:2074.0px;width:26.4px;height:25.5px;background:#ff6600;"></div>
<div style="left:897.9px;top:2074.0px;width:22.7px;height:25.5px;background:#ff6600;"></div>
<div style="left:932.3px;top:2074.0px;width:64.3px;height:25.5px;background:#ff6600;"></div>
<div style="left:998.1px;top:2074.0px;width:38.4px;height:25.5px;background:#ff6600;"></div>
<div style="left:1038.1px;top:2074.0px;width:38.9px;height:25.5px;background:#ff6600;"></div>
<div style="left:1089.1px;top:2074.0px;width:16.0px;height:25.5px;background:#ff6600;"></div>
<div style="left:1116.5px;top:2074.0px;width:16.5px;height:25.5px;background:#ff6600;"></div>
<div style="left:1144.8px;top:2074.0px;width:21.9px;height:25.5px;background:#ff6600;"></div>
<div style="left:1178.2px;top:2074.0px;width:64.3px;height:25.5px;background:#ff6600;"></div>
<div style="left:1244.0px;top:2074.0px;width:38.4px;height:25.5px;background:#ff6600;"></div>
<div style="left:1284.0px;top:2074.0px;width:38.9px;height:25.5px;background:#ff6600;"></div>
<div style="left:1335.0px;top:2074.0px;width:16.0px;height:25.5px;background:#ff6600;"></div>
<div style="left:1362.4px;top:2074.0px;width:16.5px;height:25.5px;background:#ff6600;"></div>
<div style="left:1390.7px;top:2074.0px;width:21.9px;height:25.5px;background:#ff6600;"></div>
<div style="left:1424.0px;top:2074.0px;width:64.3px;height:25.5px;background:#ff6600;"></div>
<div style="left:1489.8px;top:2074.0px;width:38.4px;height:25.5px;background:#ff6600;"></div>
<div style="left:1529.8px;top:2074.0px;width:38.9px;height:25.5px;background:#ff6600;"></div>
<div style="left:1580.8px;top:2074.0px;width:16.0px;height:25.5px;background:#ff6600;"></div>
<div style="left:1608.2px;top:2074.0px;width:16.5px;height:25.5px;background:#ff6600;"></div>
<div style="left:1636.5px;top:2074.0px;width:21.9px;height:25.5px;background:#ff6600;"></div>
<div style="left:1669.8px;top:2074.0px;width:64.3px;height:25.5px;background:#ff6600;"></div>
<div style="left:1735.6px;top:2074.0px;width:38.4px;height:25.5px;background:#ff6600;"></div>
<div style="left:1775.6px;top:2074.0px;width:38.9px;height:25.5px;background:#ff6600;"></div>
<div style="left:1826.6px;top:2074.0px;width:16.0px;height:25.5px;background:#ff6600;"></div>
<div style="left:1854.0px;top:2074.0px;width:16.5px;height:25.5px;background:#ff6600;"></div>
<div class="t" style="left:361.0px;top:2106.0px;font-size:22px;color:#ececec;transform-origin:0 0;transform:scaleX(1.0435);">1...</div>
<div style="left:479.5px;top:2110.5px;width:1788.0px;height:14.0px;background:#1e1e1e;border:1.500px solid #6a6a6a;border-left:none;border-radius:0 7px 7px 0;"></div>
<div style="left:480.0px;top:2110.5px;width:196.0px;height:14.0px;background:linear-gradient(180deg,#8ab0f4 0%,#6a98f0 50%,#5a88e0 100%);border:3px solid #e4ecfc;border-radius:7px;"></div>
<div class="t" style="left:2314.0px;top:2106.0px;font-size:22px;color:#ececec;transform-origin:0 0;transform:scaleX(1.0449);">...1006</div>
<svg style="left:2415.0px;top:2000.0px;" width="34" height="28" viewBox="0 0 34 28"><rect x="0" y="2" width="33" height="23" fill="#00c200"/><path d="M0 1.500h33M0 26h33" stroke="#bbb" stroke-width="1.500"/><path d="M16.500 2v24" stroke="#222" stroke-width="3"/></svg>
<svg style="left:2479.0px;top:1996.0px;" width="34" height="32" viewBox="0 0 34 32"><rect x="0" y="6" width="33" height="23" fill="#00c200"/><path d="M0 5.500h33M0 30h33" stroke="#bbb" stroke-width="1.500"/><path d="M5 1l9 12" stroke="#c87830" stroke-width="3"/><path d="M10 14l10-6l8 16l-12 4z" fill="#f8d020"/><path d="M11 13l9-5" stroke="#e02020" stroke-width="2.500"/></svg>
<svg style="left:2414.0px;top:2084.0px;" width="34" height="34" viewBox="0 0 34 34"><circle cx="13" cy="13" r="10.500" fill="#686868" stroke="#e8a850" stroke-width="2.500"/><path d="M10 13h8M14 9v8" stroke="#20c040" stroke-width="3"/><path d="M21 21l8 8" stroke="#f0c090" stroke-width="5" stroke-linecap="round"/></svg>
<svg style="left:2478.0px;top:2084.0px;" width="34" height="34" viewBox="0 0 34 34"><circle cx="13" cy="13" r="10.500" fill="#686868" stroke="#e8a850" stroke-width="2.500"/><rect x="9" y="11.500" width="11" height="4" fill="#e82020"/><path d="M21 21l8 8" stroke="#f0c090" stroke-width="5" stroke-linecap="round"/></svg>
<div style="left:7.5px;top:2145.5px;width:3215.0px;height:262.0px;border:2px solid #262626;border-radius:8px;background:#303030;"></div>
<div style="left:3169.0px;top:2145.5px;width:53.5px;height:98.5px;border:2px solid #3e3e3e;border-top-color:#262626;border-left:none;border-radius:0 9px 9px 0;background:#303030;"></div>
<div style="left:3170.0px;top:2244.0px;width:55.0px;height:170.0px;background:#303030;"></div>
<div style="left:3166.0px;top:2147.5px;width:6.0px;height:95.0px;background:#303030;"></div>
<div class="t" style="left:3202px;top:2155.5px;font-size:21.5px;color:#f0f0f0;transform-origin:0 0;transform:rotate(90deg) scaleX(0.9945);">Untitled</div>
<div class="b" style="left:22.0px;top:2153.6px;width:60.2px;height:44.6px;"></div>
<svg style="left:22.0px;top:2153.6px" width="60.2" height="45.5" viewBox="0 0 40 30" preserveAspectRatio="none"><path d="M13 5h10l5 5v16H13z" fill="#fff"/><path d="M23 5v5h5" fill="#ddd" stroke="#999" stroke-width="0.8"/><path d="M13 26h15" stroke="#bbb" stroke-width="1"/></svg>
<div class="b" style="left:86.2px;top:2153.6px;width:60.2px;height:44.6px;"></div>
<svg style="left:86.2px;top:2153.6px" width="60.2" height="45.5" viewBox="0 0 40 30" preserveAspectRatio="none"><path d="M11 8h7l2 2h7v4H11z" fill="#e8a800"/><path d="M11 24l3-11h17l-4 11z" fill="#ffd83a"/><path d="M11 24V10l1 13z" fill="#d89a00"/><path d="M11 24h16" stroke="#c88a00" stroke-width="1"/></svg>
<div class="b" style="left:150.2px;top:2153.6px;width:60.2px;height:44.6px;"></div>
<svg style="left:150.2px;top:2153.6px" width="60.2" height="45.5" viewBox="0 0 40 30" preserveAspectRatio="none"><rect x="12" y="6" width="17" height="18" rx="1" fill="#1468d8"/><rect x="14.5" y="7" width="12" height="8" fill="#f4f4f4"/><rect x="16" y="17.5" width="9" height="6.5" fill="#e0e0e8"/><rect x="21.5" y="18.5" width="2.4" height="4.5" fill="#1468d8"/></svg>
<div class="b" style="left:228.0px;top:2153.6px;width:60.2px;height:44.6px;"></div>
<svg style="left:228.0px;top:2153.6px" width="60.2" height="45.5" viewBox="0 0 40 30" preserveAspectRatio="none"><path d="M12 5h7l3 3v15H12z" fill="#f2f2f2" stroke="#999" stroke-width="0.6"/><path d="M17 8h7l4 4v14H17z" fill="#fafafa" stroke="#999" stroke-width="0.6"/><path d="M19 14h7M19 16.500h7M19 19h7M19 21.500h7" stroke="#9ab8dc" stroke-width="1"/></svg>
<div class="b" style="left:292.2px;top:2153.6px;width:60.2px;height:44.6px;"></div>
<div class="b" style="left:356.2px;top:2153.6px;width:60.2px;height:44.6px;"></div>
<svg style="left:356.2px;top:2153.6px" width="60.2" height="45.5" viewBox="0 0 40 30" preserveAspectRatio="none"><rect x="11" y="7" width="15" height="19" rx="1.500" fill="#d8923a"/><rect x="13" y="9" width="11" height="15" fill="#e8b26a"/><rect x="15" y="5" width="7" height="4" rx="1" fill="#ccc" stroke="#777" stroke-width="0.6"/><rect x="20" y="14" width="11" height="12" fill="#e8e8e8" stroke="#999" stroke-width="0.6"/><path d="M21.500 17h8M21.500 19.500h8M21.500 22h8M21.500 24.500h8M24 15.500v9.500M27 15.500v9.500" stroke="#888" stroke-width="0.8"/></svg>
<div class="b" style="left:434.0px;top:2153.6px;width:60.2px;height:44.6px;"></div>
<div class="b" style="left:498.5px;top:2153.6px;width:60.2px;height:44.6px;"></div>
<div class="b" style="left:562.7px;top:2153.6px;width:60.2px;height:44.6px;"></div>
<div class="b" style="left:630.3px;top:2153.6px;width:60.2px;height:44.6px;"></div>
<div class="b" style="left:694.6px;top:2153.6px;width:60.2px;height:44.6px;"></div>
<svg style="left:694.6px;top:2153.6px" width="60.2" height="45.5" viewBox="0 0 40 30" preserveAspectRatio="none"><path d="M12 7c5 4 10 9 15 16" stroke="#e80000" stroke-width="3.600" stroke-linecap="round" fill="none"/><path d="M28 6c-6 4-11 10-14 18" stroke="#f01010" stroke-width="3.200" stroke-linecap="round" fill="none"/></svg>
<div class="b" style="left:773.6px;top:2153.6px;width:60.2px;height:44.6px;"></div>
<div class="b" style="left:850.0px;top:2153.6px;width:66.5px;height:44.6px;"></div>
<div class="b" style="left:922.0px;top:2153.6px;width:60.2px;height:44.6px;"></div>
<svg style="left:292.2px;top:2153.6px" width="60.2" height="45.5" viewBox="0 0 40 30"><path d="M24 3L17 18" stroke="#ddd" stroke-width="1.800"/><path d="M16 8l7 11" stroke="#2a6ad8" stroke-width="1.800"/><circle cx="15" cy="20" r="2.600" fill="none" stroke="#2a6ad8" stroke-width="1.400"/><circle cx="23.500" cy="22" r="2.600" fill="none" stroke="#2a6ad8" stroke-width="1.400"/></svg>
<svg style="left:434.0px;top:2153.6px" width="60.2" height="45.5" viewBox="0 0 40 30"><path d="M17.500 4h5v8.500H31v5h-8.500V26h-5v-8.500H9v-5h8.500z" fill="#ff8c10"/><path d="M18.500 5h3v8.500H30v2H18.500z" fill="#ffb850" opacity=".8"/></svg>
<svg style="left:498.5px;top:2153.6px" width="60.2" height="45.5" viewBox="0 0 40 30"><rect x="9" y="4" width="13" height="14" fill="#888"/><rect x="15" y="9" width="15" height="16" fill="#f0f0f0" stroke="#999" stroke-width=".6"/><path d="M14 12c0 8 4 11 10 10" stroke="#777" stroke-width="3" fill="none"/><path d="M12 14l3-5l4 5z" fill="#777"/></svg>
<svg style="left:562.7px;top:2153.6px" width="60.2" height="45.5" viewBox="0 0 40 30"><rect x="9" y="4" width="13" height="14" fill="#8a8a8a"/><rect x="15" y="9" width="15" height="16" fill="#f4f4f4" stroke="#999" stroke-width=".6"/></svg>
<svg style="left:630.3px;top:2153.6px" width="60.2" height="45.5" viewBox="0 0 40 30"><rect x="17" y="10" width="13" height="15" fill="#e8e8e8"/><path d="M12 4l7 10" stroke="#c87830" stroke-width="2"/><path d="M15 14l8-4l7 14l-11 4z" fill="#f8d020"/><path d="M16 13l7-4" stroke="#e02020" stroke-width="2"/><path d="M13 24l4-3" stroke="#888" stroke-width="1.500"/></svg>
<svg style="left:773.6px;top:2153.6px" width="60.2" height="45.5" viewBox="0 0 40 30"><rect x="9" y="7" width="21" height="15" fill="#ffff00"/><path d="M10 7v15" stroke="#00d000" stroke-width="2.400"/><path d="M29.500 7v15" stroke="#e02020" stroke-width="2"/><path d="M9 7c7 2 14 2 21 0M9 22c7-2 14-2 21 0" stroke="#e02020" stroke-width="1" fill="none"/></svg>
<svg style="left:853px;top:2153.6px" width="60.2" height="45.5" viewBox="0 0 40 30"><path d="M15.500 15v-5a4.500 4.500 0 0 1 9 0v5" stroke="#d8d8d8" stroke-width="2.400" fill="none"/><rect x="13" y="14" width="14" height="11" rx="1" fill="#f0b820"/><rect x="13" y="14" width="14" height="3" fill="#ffd860"/></svg>
<svg style="left:922.0px;top:2153.6px" width="60.2" height="45.5" viewBox="0 0 40 30"><circle cx="20" cy="15" r="9.500" fill="#1a7ae8"/><circle cx="20" cy="12" r="7" fill="#5aa8ff" opacity=".5"/><rect x="18.500" y="13" width="3" height="8" fill="#fff"/><rect x="17" y="13" width="3" height="1.800" fill="#fff"/><rect x="17" y="19.500" width="6" height="1.800" fill="#fff"/><circle cx="20" cy="9.500" r="1.900" fill="#fff"/></svg>
<div style="left:13.5px;top:2202.0px;width:3157.0px;height:3.0px;background:#3c3c3c;"></div>
<div style="left:13.5px;top:2205.0px;width:3157.0px;height:194.0px;background:#1b1b1b;"></div>
<div style="left:13.5px;top:2399.0px;width:3157.0px;height:3.0px;background:#262626;"></div>
<div style="left:14.5px;top:2206.0px;width:127.5px;height:158.5px;background:#000;border:1.500px solid #6a98f0;"></div>
<div style="left:14.5px;top:2334.0px;width:127.5px;height:30.5px;background:#6a98f0;"></div>
<div class="t" style="left:19.0px;top:2211.0px;font-size:15px;color:#6a8494;">1</div>
<div class="t" style="left:18.0px;top:2338.0px;font-size:16px;color:#fff;">1</div>
<svg style="left:0;top:0" width="200" height="2483" viewBox="0 0 200 2483"><path d="M78.2 2208.4L79.3 2210.8L80.6 2213.5L82.0 2216.5L83.1 2219.2L84.0 2222.3L84.8 2225.5L85.4 2228.5L85.9 2231.5L86.3 2233.9L86.5 2236.2L86.8 2238.6L86.9 2240.7L86.9 2242.9L86.9 2333.6 M78.2 2208.4L77.1 2210.8L75.8 2213.5L74.4 2216.5L73.3 2219.2L72.4 2222.3L71.6 2225.5L71.0 2228.5L70.5 2231.5L70.1 2233.9L69.9 2236.2L69.6 2238.6L69.5 2240.7L69.5 2242.9L69.5 2333.6 M78.2 2208.4L79.0 2210.8L79.9 2213.5L80.9 2216.5L81.7 2219.2L82.3 2222.3L82.8 2225.5L83.3 2228.5L83.7 2231.5L83.9 2233.9L84.1 2236.2L84.3 2238.6L84.3 2240.7L84.4 2242.9L84.4 2333.6 M78.2 2208.4L77.4 2210.8L76.5 2213.5L75.5 2216.5L74.7 2219.2L74.1 2222.3L73.6 2225.5L73.1 2228.5L72.7 2231.5L72.5 2233.9L72.3 2236.2L72.1 2238.6L72.1 2240.7L72.0 2242.9L72.0 2333.6 M78.2 2208.4L78.2 2210.8L78.2 2213.5L78.2 2216.5L78.2 2219.2L78.2 2222.3L78.2 2225.5L78.2 2228.5L78.2 2231.5L78.2 2233.9L78.2 2236.2L78.2 2238.6L78.2 2240.7L78.2 2242.9L78.2 2333.6 M87.5 2333.6L87.4 2333.6L87.0 2333.6L86.3 2333.6L85.3 2333.6L84.2 2333.6L82.9 2333.6L81.4 2333.6L79.8 2333.6L78.2 2333.6L76.6 2333.6L75.0 2333.6L73.5 2333.6L72.2 2333.6L71.1 2333.6L70.1 2333.6L69.4 2333.6L69.0 2333.6L68.9 2333.6L69.0 2333.6L69.4 2333.6L70.1 2333.6L71.1 2333.6L72.2 2333.6L73.5 2333.6L75.0 2333.6L76.6 2333.6L78.2 2333.6L79.8 2333.6L81.4 2333.6L82.9 2333.6L84.2 2333.6L85.3 2333.6L86.3 2333.6L87.0 2333.6L87.4 2333.6L87.5 2333.6 M86.9 2255.2L90.3 2261.6L99.7 2277.3 M86.9 2267.4L97.8 2280.0 M86.9 2292.5L96.8 2294.2 M86.9 2300.7L96.8 2296.9 M86.9 2321.0L97.8 2325.7L97.8 2331.6 M69.5 2255.2L66.1 2261.6L56.7 2277.3 M69.5 2267.4L58.6 2280.0 M69.5 2292.5L59.6 2294.2 M69.5 2300.7L59.6 2296.9 M69.5 2321.0L58.6 2325.7L58.6 2331.6 M58.6 2331.6L97.8 2331.6 M99.7 2277.3L100.5 2278.6L101.3 2280.2L102.0 2281.9L102.5 2283.8L102.7 2285.7L102.7 2296.3L102.1 2297.9L101.0 2299.0L99.7 2299.8 M99.7 2277.3L98.9 2278.6L98.2 2280.2L97.4 2281.9L97.0 2283.8L96.8 2285.7L96.8 2296.3L97.4 2297.9L98.5 2299.0L99.7 2299.8 M99.7 2277.3L100.2 2278.6L100.6 2280.2L101.0 2281.9L101.3 2283.8L101.4 2285.7L101.4 2296.3L101.1 2297.9L100.4 2299.0L99.7 2299.8 M99.7 2277.3L99.3 2278.6L98.9 2280.2L98.5 2281.9L98.2 2283.8L98.1 2285.7L98.1 2296.3L98.4 2297.9L99.0 2299.0L99.7 2299.8 M56.7 2277.3L57.5 2278.6L58.2 2280.2L59.0 2281.9L59.4 2283.8L59.6 2285.7L59.6 2296.3L59.0 2297.9L57.9 2299.0L56.7 2299.8 M56.7 2277.3L55.9 2278.6L55.1 2280.2L54.4 2281.9L53.9 2283.8L53.7 2285.7L53.7 2296.3L54.3 2297.9L55.4 2299.0L56.7 2299.8 M56.7 2277.3L57.1 2278.6L57.5 2280.2L57.9 2281.9L58.2 2283.8L58.3 2285.7L58.3 2296.3L58.0 2297.9L57.4 2299.0L56.7 2299.8 M56.7 2277.3L56.2 2278.6L55.8 2280.2L55.4 2281.9L55.1 2283.8L55.0 2285.7L55.0 2296.3L55.3 2297.9L56.0 2299.0L56.7 2299.8 M78.2 2255.2L78.2 2261.6L78.2 2277.3 M78.2 2267.4L78.2 2280.0 M78.2 2292.5L78.2 2294.2 M78.2 2300.7L78.2 2296.9 M78.2 2321.0L78.2 2325.7L78.2 2331.6 M78.2 2331.6L78.2 2331.6 M78.2 2277.3L78.2 2278.6L78.2 2280.2L78.2 2281.9L78.2 2283.8L78.2 2285.7L78.2 2296.3L78.2 2297.9L78.2 2299.0L78.2 2299.8 M78.2 2277.3L78.9 2278.6L79.5 2280.2L80.1 2281.9L80.5 2283.8L80.6 2285.7L80.6 2296.3L80.2 2297.9L79.2 2299.0L78.2 2299.8 M78.2 2277.3L77.5 2278.6L76.9 2280.2L76.3 2281.9L75.9 2283.8L75.8 2285.7L75.8 2296.3L76.2 2297.9L77.2 2299.0L78.2 2299.8" fill="none" stroke="#ff6a10" stroke-width="2.1" stroke-linejoin="round"/></svg>
<div style="left:2911.0px;top:2416.5px;width:148.0px;height:47.0px;border:2px solid #4e4e4e;border-radius:6px;background:linear-gradient(180deg,#3a3a3a,#2a2a2a);box-shadow:1.500px 1.500px 0 1px #1a1a1a;"></div>
<div class="t" style="left:2969.9px;top:2425.5px;font-size:24px;color:#e8e8e8;transform-origin:0 0;transform:scaleX(0.8709);">OK</div>
<div style="left:3070.5px;top:2416.5px;width:148.0px;height:47.0px;border:2px solid #4e4e4e;border-radius:6px;background:linear-gradient(180deg,#3a3a3a,#2a2a2a);box-shadow:1.500px 1.500px 0 1px #1a1a1a;"></div>
<div class="t" style="left:3111.6px;top:2425.5px;font-size:24px;color:#e8e8e8;transform-origin:0 0;transform:scaleX(0.8821);">Cancel</div>
<div style="left:0.0px;top:2476.0px;width:3225.0px;height:7.0px;background:#3a3a3a;border-top:1.500px solid #262626;"></div>
</div>
</body></html>
